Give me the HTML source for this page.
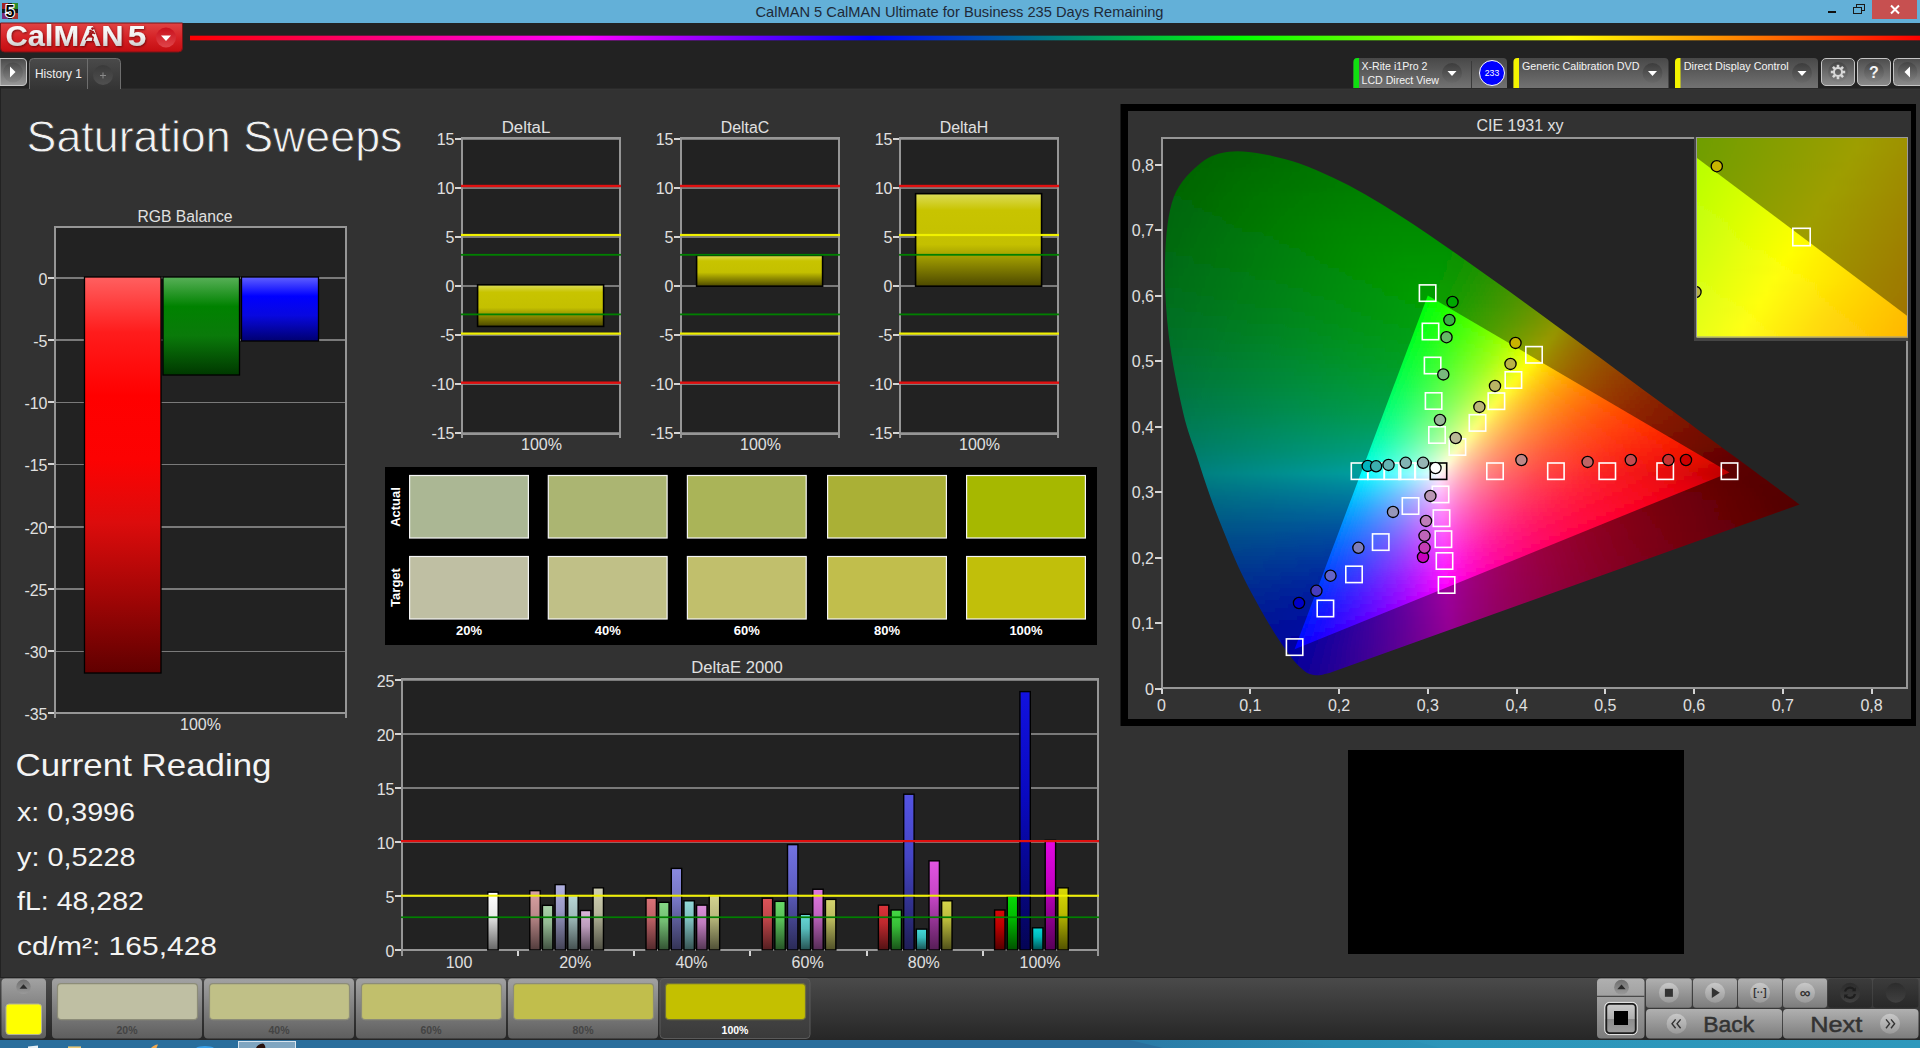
<!DOCTYPE html>
<html lang="en"><head><meta charset="utf-8"><title>CalMAN 5 CalMAN Ultimate for Business 235 Days Remaining</title>
<style>
html,body{margin:0;padding:0;background:#333;overflow:hidden;}
body{width:1920px;height:1048px;font-family:"Liberation Sans", "DejaVu Sans", sans-serif;}
svg{display:block;position:absolute;left:0;top:0;font-family:"Liberation Sans", "DejaVu Sans", sans-serif;}
</style></head><body>
<svg width="1920" height="1048" viewBox="0 0 1920 1048">
<defs>
<linearGradient id="g1" x1="0" y1="0" x2="1" y2="0"><stop offset="0" stop-color="#ff0000"/><stop offset="0.228" stop-color="#ff00ff"/><stop offset="0.393" stop-color="#0000ff"/><stop offset="0.607" stop-color="#00ff00"/><stop offset="0.798" stop-color="#ffff00"/><stop offset="1" stop-color="#ff0000"/></linearGradient>
<linearGradient id="g2" x1="0" y1="0" x2="0" y2="1"><stop offset="0" stop-color="#e04444"/><stop offset="0.5" stop-color="#d62226"/><stop offset="1" stop-color="#c40c10"/></linearGradient>
<linearGradient id="g3" x1="0" y1="0" x2="0" y2="1"><stop offset="0" stop-color="#ffffff"/><stop offset="0.55" stop-color="#f0f0f0"/><stop offset="1" stop-color="#b8b8b8"/></linearGradient>
<filter id="ts" x="-5%" y="-20%" width="110%" height="150%"><feDropShadow dx="0.8" dy="1" stdDeviation="0.8" flood-color="#400" flood-opacity="0.7"/></filter>
<linearGradient id="g4" x1="0" y1="0" x2="0" y2="1"><stop offset="0" stop-color="#c8101c"/><stop offset="1" stop-color="#e0454a"/></linearGradient>
<linearGradient id="g5" x1="0" y1="0" x2="0" y2="1"><stop offset="0" stop-color="#4a4a4a"/><stop offset="1" stop-color="#9a9a9a"/></linearGradient>
<linearGradient id="g6" x1="0" y1="0" x2="0" y2="1"><stop offset="0" stop-color="#4a4a4a"/><stop offset="1" stop-color="#888"/></linearGradient>
<linearGradient id="g7" x1="0" y1="0" x2="0" y2="1"><stop offset="0" stop-color="#4a4a4a"/><stop offset="1" stop-color="#343434"/></linearGradient>
<linearGradient id="g8" x1="0" y1="0" x2="0" y2="1"><stop offset="0" stop-color="#3a3a3a"/><stop offset="1" stop-color="#505050"/></linearGradient>
<linearGradient id="g9" x1="0" y1="0" x2="0" y2="1"><stop offset="0" stop-color="#484848"/><stop offset="1" stop-color="#727272"/></linearGradient>
<linearGradient id="g10" x1="0" y1="0" x2="0" y2="1"><stop offset="0" stop-color="#3c3c3c"/><stop offset="1" stop-color="#686868"/></linearGradient>
<linearGradient id="g11" x1="0" y1="0" x2="0" y2="1"><stop offset="0" stop-color="#484848"/><stop offset="1" stop-color="#727272"/></linearGradient>
<linearGradient id="g12" x1="0" y1="0" x2="0" y2="1"><stop offset="0" stop-color="#3c3c3c"/><stop offset="1" stop-color="#686868"/></linearGradient>
<linearGradient id="g13" x1="0" y1="0" x2="0" y2="1"><stop offset="0" stop-color="#484848"/><stop offset="1" stop-color="#727272"/></linearGradient>
<linearGradient id="g14" x1="0" y1="0" x2="0" y2="1"><stop offset="0" stop-color="#3c3c3c"/><stop offset="1" stop-color="#686868"/></linearGradient>
<linearGradient id="g15" x1="0" y1="0" x2="0" y2="1"><stop offset="0" stop-color="#4c4c4c"/><stop offset="1" stop-color="#8c8c8c"/></linearGradient>
<linearGradient id="g16" x1="0" y1="0" x2="0" y2="1"><stop offset="0" stop-color="#444"/><stop offset="1" stop-color="#808080"/></linearGradient>
<linearGradient id="g17" x1="0" y1="0" x2="0" y2="1"><stop offset="0" stop-color="#4c4c4c"/><stop offset="1" stop-color="#8c8c8c"/></linearGradient>
<linearGradient id="g18" x1="0" y1="0" x2="0" y2="1"><stop offset="0" stop-color="#444"/><stop offset="1" stop-color="#808080"/></linearGradient>
<linearGradient id="g19" x1="0" y1="0" x2="0" y2="1"><stop offset="0" stop-color="#4c4c4c"/><stop offset="1" stop-color="#8c8c8c"/></linearGradient>
<linearGradient id="g20" x1="0" y1="0" x2="0" y2="1"><stop offset="0" stop-color="#444"/><stop offset="1" stop-color="#808080"/></linearGradient>
<linearGradient id="g21" x1="0" y1="0" x2="0" y2="1"><stop offset="0" stop-color="#ff6060"/><stop offset="0.14" stop-color="#ff1c1c"/><stop offset="0.3" stop-color="#ff0000"/><stop offset="0.46" stop-color="#fc0202"/><stop offset="0.62" stop-color="#dc0c0c"/><stop offset="0.8" stop-color="#a40606"/><stop offset="1" stop-color="#600000"/></linearGradient>
<linearGradient id="g22" x1="0" y1="0" x2="0" y2="1"><stop offset="0" stop-color="#58b058"/><stop offset="0.3" stop-color="#008200"/><stop offset="0.6" stop-color="#0a7a0a"/><stop offset="1" stop-color="#003800"/></linearGradient>
<linearGradient id="g23" x1="0" y1="0" x2="0" y2="1"><stop offset="0" stop-color="#6060ff"/><stop offset="0.3" stop-color="#0000ff"/><stop offset="0.6" stop-color="#0808e0"/><stop offset="1" stop-color="#000070"/></linearGradient>
<linearGradient id="g24" x1="0" y1="0" x2="0" y2="1"><stop offset="0" stop-color="#dcdc58"/><stop offset="0.18" stop-color="#c8c400"/><stop offset="0.55" stop-color="#c4c000"/><stop offset="1" stop-color="#4c4800"/></linearGradient>
<linearGradient id="g25" x1="0" y1="0" x2="0" y2="1"><stop offset="0" stop-color="#dcdc58"/><stop offset="0.18" stop-color="#c8c400"/><stop offset="0.55" stop-color="#c4c000"/><stop offset="1" stop-color="#4c4800"/></linearGradient>
<linearGradient id="g26" x1="0" y1="0" x2="0" y2="1"><stop offset="0" stop-color="#dcdc58"/><stop offset="0.18" stop-color="#c8c400"/><stop offset="0.55" stop-color="#c4c000"/><stop offset="1" stop-color="#4c4800"/></linearGradient>
<linearGradient id="g27" x1="0" y1="0" x2="0" y2="1"><stop offset="0" stop-color="#ffffff"/><stop offset="0.4" stop-color="#eaeaea"/><stop offset="1" stop-color="#666666"/></linearGradient>
<linearGradient id="g28" x1="0" y1="0" x2="0" y2="1"><stop offset="0" stop-color="#d9a1a3"/><stop offset="0.4" stop-color="#bc8a8b"/><stop offset="1" stop-color="#523c3c"/></linearGradient>
<linearGradient id="g29" x1="0" y1="0" x2="0" y2="1"><stop offset="0" stop-color="#abd4ab"/><stop offset="0.4" stop-color="#93b893"/><stop offset="1" stop-color="#405040"/></linearGradient>
<linearGradient id="g30" x1="0" y1="0" x2="0" y2="1"><stop offset="0" stop-color="#b0b0e0"/><stop offset="0.4" stop-color="#9797c3"/><stop offset="1" stop-color="#424254"/></linearGradient>
<linearGradient id="g31" x1="0" y1="0" x2="0" y2="1"><stop offset="0" stop-color="#b7d6d6"/><stop offset="0.4" stop-color="#9eb9b9"/><stop offset="1" stop-color="#445050"/></linearGradient>
<linearGradient id="g32" x1="0" y1="0" x2="0" y2="1"><stop offset="0" stop-color="#d9b5d9"/><stop offset="0.4" stop-color="#bc9cbc"/><stop offset="1" stop-color="#524452"/></linearGradient>
<linearGradient id="g33" x1="0" y1="0" x2="0" y2="1"><stop offset="0" stop-color="#d1d1b3"/><stop offset="0.4" stop-color="#b6b69a"/><stop offset="1" stop-color="#4f4f43"/></linearGradient>
<linearGradient id="g34" x1="0" y1="0" x2="0" y2="1"><stop offset="0" stop-color="#d97378"/><stop offset="0.4" stop-color="#bc6065"/><stop offset="1" stop-color="#522a2c"/></linearGradient>
<linearGradient id="g35" x1="0" y1="0" x2="0" y2="1"><stop offset="0" stop-color="#87d987"/><stop offset="0.4" stop-color="#73bc73"/><stop offset="1" stop-color="#325232"/></linearGradient>
<linearGradient id="g36" x1="0" y1="0" x2="0" y2="1"><stop offset="0" stop-color="#8a8ade"/><stop offset="0.4" stop-color="#7575c1"/><stop offset="1" stop-color="#333354"/></linearGradient>
<linearGradient id="g37" x1="0" y1="0" x2="0" y2="1"><stop offset="0" stop-color="#91d9d9"/><stop offset="0.4" stop-color="#7cbcbc"/><stop offset="1" stop-color="#365252"/></linearGradient>
<linearGradient id="g38" x1="0" y1="0" x2="0" y2="1"><stop offset="0" stop-color="#dc91dc"/><stop offset="0.4" stop-color="#bf7cbf"/><stop offset="1" stop-color="#533653"/></linearGradient>
<linearGradient id="g39" x1="0" y1="0" x2="0" y2="1"><stop offset="0" stop-color="#d4d491"/><stop offset="0.4" stop-color="#b8b87c"/><stop offset="1" stop-color="#505036"/></linearGradient>
<linearGradient id="g40" x1="0" y1="0" x2="0" y2="1"><stop offset="0" stop-color="#dc5459"/><stop offset="0.4" stop-color="#bf4549"/><stop offset="1" stop-color="#531e20"/></linearGradient>
<linearGradient id="g41" x1="0" y1="0" x2="0" y2="1"><stop offset="0" stop-color="#68d968"/><stop offset="0.4" stop-color="#57bc57"/><stop offset="1" stop-color="#265226"/></linearGradient>
<linearGradient id="g42" x1="0" y1="0" x2="0" y2="1"><stop offset="0" stop-color="#7373e3"/><stop offset="0.4" stop-color="#6060c5"/><stop offset="1" stop-color="#2a2a56"/></linearGradient>
<linearGradient id="g43" x1="0" y1="0" x2="0" y2="1"><stop offset="0" stop-color="#68d9d9"/><stop offset="0.4" stop-color="#57bcbc"/><stop offset="1" stop-color="#265252"/></linearGradient>
<linearGradient id="g44" x1="0" y1="0" x2="0" y2="1"><stop offset="0" stop-color="#e078e0"/><stop offset="0.4" stop-color="#c365c3"/><stop offset="1" stop-color="#542c54"/></linearGradient>
<linearGradient id="g45" x1="0" y1="0" x2="0" y2="1"><stop offset="0" stop-color="#d4d46e"/><stop offset="0.4" stop-color="#b8b85c"/><stop offset="1" stop-color="#505028"/></linearGradient>
<linearGradient id="g46" x1="0" y1="0" x2="0" y2="1"><stop offset="0" stop-color="#dc353b"/><stop offset="0.4" stop-color="#bf292e"/><stop offset="1" stop-color="#531214"/></linearGradient>
<linearGradient id="g47" x1="0" y1="0" x2="0" y2="1"><stop offset="0" stop-color="#45d945"/><stop offset="0.4" stop-color="#37bc37"/><stop offset="1" stop-color="#185218"/></linearGradient>
<linearGradient id="g48" x1="0" y1="0" x2="0" y2="1"><stop offset="0" stop-color="#5454e3"/><stop offset="0.4" stop-color="#4545c5"/><stop offset="1" stop-color="#1e1e56"/></linearGradient>
<linearGradient id="g49" x1="0" y1="0" x2="0" y2="1"><stop offset="0" stop-color="#45d9d9"/><stop offset="0.4" stop-color="#37bcbc"/><stop offset="1" stop-color="#185252"/></linearGradient>
<linearGradient id="g50" x1="0" y1="0" x2="0" y2="1"><stop offset="0" stop-color="#e354e3"/><stop offset="0.4" stop-color="#c545c5"/><stop offset="1" stop-color="#561e56"/></linearGradient>
<linearGradient id="g51" x1="0" y1="0" x2="0" y2="1"><stop offset="0" stop-color="#d4d44a"/><stop offset="0.4" stop-color="#b8b83b"/><stop offset="1" stop-color="#50501a"/></linearGradient>
<linearGradient id="g52" x1="0" y1="0" x2="0" y2="1"><stop offset="0" stop-color="#d90808"/><stop offset="0.4" stop-color="#bc0000"/><stop offset="1" stop-color="#520000"/></linearGradient>
<linearGradient id="g53" x1="0" y1="0" x2="0" y2="1"><stop offset="0" stop-color="#08d908"/><stop offset="0.4" stop-color="#00bc00"/><stop offset="1" stop-color="#005200"/></linearGradient>
<linearGradient id="g54" x1="0" y1="0" x2="0" y2="1"><stop offset="0" stop-color="#1212de"/><stop offset="0.4" stop-color="#0909c1"/><stop offset="1" stop-color="#040454"/></linearGradient>
<linearGradient id="g55" x1="0" y1="0" x2="0" y2="1"><stop offset="0" stop-color="#08d9d9"/><stop offset="0.4" stop-color="#00bcbc"/><stop offset="1" stop-color="#005252"/></linearGradient>
<linearGradient id="g56" x1="0" y1="0" x2="0" y2="1"><stop offset="0" stop-color="#e308e3"/><stop offset="0.4" stop-color="#c500c5"/><stop offset="1" stop-color="#560056"/></linearGradient>
<linearGradient id="g57" x1="0" y1="0" x2="0" y2="1"><stop offset="0" stop-color="#d9d908"/><stop offset="0.4" stop-color="#bcbc00"/><stop offset="1" stop-color="#525200"/></linearGradient>
<linearGradient id="o0"><stop offset="0" stop-color="#006400"/><stop offset="1" stop-color="#006c00"/></linearGradient>
<linearGradient id="o1"><stop offset="0" stop-color="#006400"/><stop offset="1" stop-color="#006f00"/></linearGradient>
<linearGradient id="o2"><stop offset="0" stop-color="#006300"/><stop offset="1" stop-color="#007200"/></linearGradient>
<linearGradient id="o3"><stop offset="0" stop-color="#006300"/><stop offset="1" stop-color="#007400"/></linearGradient>
<linearGradient id="o4"><stop offset="0" stop-color="#006301"/><stop offset="1" stop-color="#007500"/></linearGradient>
<linearGradient id="o5"><stop offset="0" stop-color="#006302"/><stop offset="1" stop-color="#007700"/></linearGradient>
<linearGradient id="o6"><stop offset="0" stop-color="#006303"/><stop offset=".2182" stop-color="#006900"/><stop offset="1" stop-color="#007900"/></linearGradient>
<linearGradient id="o7"><stop offset="0" stop-color="#006303"/><stop offset=".2712" stop-color="#006b00"/><stop offset="1" stop-color="#007b00"/></linearGradient>
<linearGradient id="o8"><stop offset="0" stop-color="#006304"/><stop offset=".2995" stop-color="#006c00"/><stop offset="1" stop-color="#007c00"/></linearGradient>
<linearGradient id="o9"><stop offset="0" stop-color="#006305"/><stop offset=".3232" stop-color="#006e00"/><stop offset="1" stop-color="#007e00"/></linearGradient>
<linearGradient id="o10"><stop offset="0" stop-color="#006306"/><stop offset=".3636" stop-color="#007000"/><stop offset="1" stop-color="#007f00"/></linearGradient>
<linearGradient id="o11"><stop offset="0" stop-color="#006307"/><stop offset=".3836" stop-color="#007100"/><stop offset="1" stop-color="#008100"/></linearGradient>
<linearGradient id="o12"><stop offset="0" stop-color="#006407"/><stop offset=".4089" stop-color="#007300"/><stop offset=".7289" stop-color="#007d00"/><stop offset="1" stop-color="#008200"/></linearGradient>
<linearGradient id="o13"><stop offset="0" stop-color="#006408"/><stop offset=".4292" stop-color="#007500"/><stop offset=".7554" stop-color="#007f00"/><stop offset="1" stop-color="#008400"/></linearGradient>
<linearGradient id="o14"><stop offset="0" stop-color="#006509"/><stop offset=".4519" stop-color="#007700"/><stop offset=".7531" stop-color="#008000"/><stop offset="1" stop-color="#008500"/></linearGradient>
<linearGradient id="o15"><stop offset="0" stop-color="#006509"/><stop offset=".4696" stop-color="#007800"/><stop offset=".7611" stop-color="#008200"/><stop offset="1" stop-color="#008600"/></linearGradient>
<linearGradient id="o16"><stop offset="0" stop-color="#00650a"/><stop offset=".4882" stop-color="#007a00"/><stop offset=".7717" stop-color="#008300"/><stop offset="1" stop-color="#008700"/></linearGradient>
<linearGradient id="o17"><stop offset="0" stop-color="#00660b"/><stop offset=".4923" stop-color="#007b00"/><stop offset=".7846" stop-color="#008500"/><stop offset="1" stop-color="#008800"/></linearGradient>
<linearGradient id="o18"><stop offset="0" stop-color="#00660c"/><stop offset=".5094" stop-color="#007d00"/><stop offset=".7790" stop-color="#008600"/><stop offset="1" stop-color="#008a00"/></linearGradient>
<linearGradient id="o19"><stop offset="0" stop-color="#00660c"/><stop offset=".5275" stop-color="#007f00"/><stop offset=".6447" stop-color="#008400"/><stop offset=".8352" stop-color="#008900"/><stop offset="1" stop-color="#008b00"/></linearGradient>
<linearGradient id="o20"><stop offset="0" stop-color="#00660d"/><stop offset=".5429" stop-color="#008100"/><stop offset=".6429" stop-color="#008500"/><stop offset=".8429" stop-color="#008b00"/><stop offset="1" stop-color="#008c00"/></linearGradient>
<linearGradient id="o21"><stop offset="0" stop-color="#00670e"/><stop offset=".5455" stop-color="#008200"/><stop offset=".6573" stop-color="#008700"/><stop offset=".8392" stop-color="#008c00"/><stop offset="1" stop-color="#008c00"/></linearGradient>
<linearGradient id="o22"><stop offset="0" stop-color="#00670f"/><stop offset=".2867" stop-color="#007609"/><stop offset=".5597" stop-color="#008400"/><stop offset=".6689" stop-color="#008800"/><stop offset=".8464" stop-color="#008d00"/><stop offset="1" stop-color="#008d00"/></linearGradient>
<linearGradient id="o23"><stop offset="0" stop-color="#00670f"/><stop offset=".2933" stop-color="#00770a"/><stop offset=".5733" stop-color="#008500"/><stop offset=".6800" stop-color="#008a00"/><stop offset=".8400" stop-color="#008e00"/><stop offset=".9733" stop-color="#008e00"/><stop offset="1" stop-color="#048e00"/></linearGradient>
<linearGradient id="o24"><stop offset="0" stop-color="#006710"/><stop offset=".3016" stop-color="#00780a"/><stop offset=".5902" stop-color="#008700"/><stop offset=".6820" stop-color="#008b00"/><stop offset=".8262" stop-color="#008f00"/><stop offset=".9574" stop-color="#008f00"/><stop offset="1" stop-color="#088f00"/></linearGradient>
<linearGradient id="o25"><stop offset="0" stop-color="#006711"/><stop offset=".2821" stop-color="#00780b"/><stop offset=".6410" stop-color="#008b00"/><stop offset=".7949" stop-color="#009000"/><stop offset=".9231" stop-color="#009100"/><stop offset=".9359" stop-color="#009000"/><stop offset="1" stop-color="#0d8f00"/></linearGradient>
<linearGradient id="o26"><stop offset="0" stop-color="#006812"/><stop offset=".3019" stop-color="#007a0c"/><stop offset=".6415" stop-color="#008c00"/><stop offset=".7925" stop-color="#009100"/><stop offset=".9057" stop-color="#009200"/><stop offset="1" stop-color="#138f00"/></linearGradient>
<linearGradient id="o27"><stop offset="0" stop-color="#006813"/><stop offset=".3200" stop-color="#007b0c"/><stop offset=".6400" stop-color="#008d00"/><stop offset=".7754" stop-color="#009200"/><stop offset=".8862" stop-color="#009300"/><stop offset="1" stop-color="#188f00"/></linearGradient>
<linearGradient id="o28"><stop offset="0" stop-color="#006814"/><stop offset=".3273" stop-color="#007c0d"/><stop offset=".6424" stop-color="#008e00"/><stop offset=".7758" stop-color="#009400"/><stop offset=".8727" stop-color="#009400"/><stop offset="1" stop-color="#1d8f00"/></linearGradient>
<linearGradient id="o29"><stop offset="0" stop-color="#006814"/><stop offset=".3333" stop-color="#007d0d"/><stop offset=".6310" stop-color="#008f01"/><stop offset=".7500" stop-color="#009400"/><stop offset=".8452" stop-color="#009500"/><stop offset="1" stop-color="#239000"/></linearGradient>
<linearGradient id="o30"><stop offset="0" stop-color="#006815"/><stop offset=".3402" stop-color="#007e0e"/><stop offset=".6334" stop-color="#009001"/><stop offset=".7507" stop-color="#009600"/><stop offset=".8328" stop-color="#009600"/><stop offset="1" stop-color="#289000"/></linearGradient>
<linearGradient id="o31"><stop offset="0" stop-color="#006916"/><stop offset=".3353" stop-color="#007f0f"/><stop offset=".6358" stop-color="#009202"/><stop offset=".8092" stop-color="#009700"/><stop offset=".8208" stop-color="#019700"/><stop offset="1" stop-color="#2f9000"/></linearGradient>
<linearGradient id="o32"><stop offset="0" stop-color="#006917"/><stop offset=".3409" stop-color="#008010"/><stop offset=".6364" stop-color="#009302"/><stop offset=".6705" stop-color="#009500"/><stop offset=".7955" stop-color="#009800"/><stop offset="1" stop-color="#359000"/></linearGradient>
<linearGradient id="o33"><stop offset="0" stop-color="#006a18"/><stop offset=".3473" stop-color="#008110"/><stop offset=".6499" stop-color="#009502"/><stop offset=".7843" stop-color="#009900"/><stop offset="1" stop-color="#3c9000"/></linearGradient>
<linearGradient id="o34"><stop offset="0" stop-color="#006a19"/><stop offset=".3196" stop-color="#008012"/><stop offset=".5069" stop-color="#008c0b"/><stop offset=".6832" stop-color="#009800"/><stop offset=".7603" stop-color="#009a00"/><stop offset=".8375" stop-color="#149800"/><stop offset="1" stop-color="#439000"/></linearGradient>
<linearGradient id="o35"><stop offset="0" stop-color="#006a1a"/><stop offset=".3478" stop-color="#008212"/><stop offset=".5326" stop-color="#008f0a"/><stop offset=".6957" stop-color="#009a00"/><stop offset=".7500" stop-color="#009c00"/><stop offset="1" stop-color="#4a9100"/></linearGradient>
<linearGradient id="o36"><stop offset="0" stop-color="#006b1b"/><stop offset=".3646" stop-color="#008413"/><stop offset=".7292" stop-color="#009d00"/><stop offset=".8365" stop-color="#1e9800"/><stop offset="1" stop-color="#529100"/></linearGradient>
<linearGradient id="o37"><stop offset="0" stop-color="#006b1c"/><stop offset=".3810" stop-color="#008613"/><stop offset=".7196" stop-color="#009e00"/><stop offset=".8571" stop-color="#2a9700"/><stop offset="1" stop-color="#599100"/></linearGradient>
<linearGradient id="o38"><stop offset="0" stop-color="#006b1d"/><stop offset=".3854" stop-color="#008714"/><stop offset=".5521" stop-color="#00930c"/><stop offset=".7083" stop-color="#019e01"/><stop offset=".8646" stop-color="#339700"/><stop offset="1" stop-color="#629100"/></linearGradient>
<linearGradient id="o39"><stop offset="0" stop-color="#006b1e"/><stop offset=".3702" stop-color="#008716"/><stop offset=".5347" stop-color="#00930e"/><stop offset=".6889" stop-color="#009e03"/><stop offset=".7301" stop-color="#0c9e00"/><stop offset=".8329" stop-color="#2e9900"/><stop offset="1" stop-color="#6b9100"/></linearGradient>
<linearGradient id="o40"><stop offset="0" stop-color="#006c1f"/><stop offset=".3646" stop-color="#008717"/><stop offset=".5266" stop-color="#00930f"/><stop offset=".6785" stop-color="#009e05"/><stop offset=".7392" stop-color="#149e00"/><stop offset=".8709" stop-color="#439700"/><stop offset="1" stop-color="#749100"/></linearGradient>
<linearGradient id="o41"><stop offset="0" stop-color="#006c21"/><stop offset=".3609" stop-color="#008719"/><stop offset=".6617" stop-color="#009e07"/><stop offset=".7419" stop-color="#1b9e00"/><stop offset=".8722" stop-color="#4a9800"/><stop offset="1" stop-color="#7e9200"/></linearGradient>
<linearGradient id="o42"><stop offset="0" stop-color="#006c22"/><stop offset=".3556" stop-color="#00881a"/><stop offset=".6519" stop-color="#009e09"/><stop offset=".7506" stop-color="#249e00"/><stop offset=".8790" stop-color="#559800"/><stop offset="1" stop-color="#899200"/></linearGradient>
<linearGradient id="o43"><stop offset="0" stop-color="#006d23"/><stop offset=".3415" stop-color="#00871c"/><stop offset=".6341" stop-color="#009e0b"/><stop offset=".6537" stop-color="#059e09"/><stop offset=".7512" stop-color="#2a9e00"/><stop offset=".8683" stop-color="#599800"/><stop offset="1" stop-color="#929100"/></linearGradient>
<linearGradient id="o44"><stop offset="0" stop-color="#006d24"/><stop offset=".3365" stop-color="#00871d"/><stop offset=".6250" stop-color="#009e0d"/><stop offset=".7596" stop-color="#349e00"/><stop offset=".8654" stop-color="#609900"/><stop offset=".9712" stop-color="#919300"/><stop offset="1" stop-color="#928600"/></linearGradient>
<linearGradient id="o45"><stop offset="0" stop-color="#006d25"/><stop offset=".3325" stop-color="#00881f"/><stop offset=".6176" stop-color="#019e0f"/><stop offset=".7696" stop-color="#3e9e00"/><stop offset=".8646" stop-color="#689900"/><stop offset=".9501" stop-color="#919500"/><stop offset=".9596" stop-color="#949200"/><stop offset="1" stop-color="#927d00"/></linearGradient>
<linearGradient id="o46"><stop offset="0" stop-color="#006e27"/><stop offset=".3286" stop-color="#008821"/><stop offset=".6009" stop-color="#009e11"/><stop offset=".6854" stop-color="#219e09"/><stop offset=".7700" stop-color="#469e00"/><stop offset=".9296" stop-color="#939600"/><stop offset=".9390" stop-color="#959300"/><stop offset="1" stop-color="#927400"/></linearGradient>
<linearGradient id="o47"><stop offset="0" stop-color="#006e28"/><stop offset=".3248" stop-color="#008822"/><stop offset=".5940" stop-color="#019e13"/><stop offset=".6868" stop-color="#279e0a"/><stop offset=".7796" stop-color="#529e00"/><stop offset=".9188" stop-color="#979500"/><stop offset=".9559" stop-color="#958000"/><stop offset="1" stop-color="#926c00"/></linearGradient>
<linearGradient id="o48"><stop offset="0" stop-color="#006e29"/><stop offset=".3112" stop-color="#008824"/><stop offset=".5767" stop-color="#009e16"/><stop offset=".6041" stop-color="#099e13"/><stop offset=".6773" stop-color="#299e0c"/><stop offset=".7872" stop-color="#5e9e00"/><stop offset=".8970" stop-color="#989800"/><stop offset=".9428" stop-color="#967d00"/><stop offset="1" stop-color="#926400"/></linearGradient>
<linearGradient id="o49"><stop offset="0" stop-color="#006f2b"/><stop offset=".3077" stop-color="#008826"/><stop offset=".5701" stop-color="#009e18"/><stop offset=".6425" stop-color="#1f9e11"/><stop offset=".7149" stop-color="#419e09"/><stop offset=".7873" stop-color="#679e00"/><stop offset=".8778" stop-color="#999900"/><stop offset=".9321" stop-color="#967a00"/><stop offset="1" stop-color="#925e00"/></linearGradient>
<linearGradient id="o50"><stop offset="0" stop-color="#006f2c"/><stop offset=".3049" stop-color="#008928"/><stop offset=".5561" stop-color="#009e1a"/><stop offset=".6099" stop-color="#159e15"/><stop offset=".6996" stop-color="#409e0c"/><stop offset=".7982" stop-color="#769e00"/><stop offset=".8610" stop-color="#9a9b00"/><stop offset=".8879" stop-color="#998900"/><stop offset=".9238" stop-color="#977600"/><stop offset="1" stop-color="#925800"/></linearGradient>
<linearGradient id="o51"><stop offset="0" stop-color="#006f2e"/><stop offset=".3009" stop-color="#00892a"/><stop offset=".5487" stop-color="#009e1d"/><stop offset=".6195" stop-color="#1f9e16"/><stop offset=".6903" stop-color="#439e0e"/><stop offset=".7965" stop-color="#809e01"/><stop offset=".8407" stop-color="#9b9c00"/><stop offset=".8761" stop-color="#9a8600"/><stop offset=".9115" stop-color="#987300"/><stop offset=".9558" stop-color="#956000"/><stop offset="1" stop-color="#925100"/></linearGradient>
<linearGradient id="o52"><stop offset="0" stop-color="#00702f"/><stop offset=".2895" stop-color="#00892c"/><stop offset=".5351" stop-color="#009e1f"/><stop offset=".5877" stop-color="#169e1a"/><stop offset=".6754" stop-color="#429e11"/><stop offset=".7456" stop-color="#6a9e08"/><stop offset=".8070" stop-color="#919e00"/><stop offset=".8246" stop-color="#9c9d00"/><stop offset=".8684" stop-color="#9b8100"/><stop offset=".9035" stop-color="#996f00"/><stop offset=".9474" stop-color="#965d00"/><stop offset="1" stop-color="#924c00"/></linearGradient>
<linearGradient id="o53"><stop offset="0" stop-color="#007031"/><stop offset=".2863" stop-color="#00892e"/><stop offset=".5293" stop-color="#019e21"/><stop offset=".6074" stop-color="#269e1a"/><stop offset=".6768" stop-color="#4b9e12"/><stop offset=".7462" stop-color="#759e09"/><stop offset=".8069" stop-color="#9e9e00"/><stop offset=".8503" stop-color="#9c8200"/><stop offset=".8937" stop-color="#996b00"/><stop offset=".9458" stop-color="#965700"/><stop offset="1" stop-color="#914600"/></linearGradient>
<linearGradient id="o54"><stop offset="0" stop-color="#007133"/><stop offset=".2839" stop-color="#008a30"/><stop offset=".5161" stop-color="#009e24"/><stop offset=".5849" stop-color="#209e1e"/><stop offset=".6624" stop-color="#4a9e15"/><stop offset=".7312" stop-color="#749e0c"/><stop offset=".7914" stop-color="#9e9e04"/><stop offset=".8172" stop-color="#9e8d00"/><stop offset=".8430" stop-color="#9d7d00"/><stop offset=".8860" stop-color="#9a6800"/><stop offset=".9376" stop-color="#965400"/><stop offset="1" stop-color="#914100"/></linearGradient>
<linearGradient id="o55"><stop offset="0" stop-color="#007134"/><stop offset=".2803" stop-color="#008a32"/><stop offset=".5096" stop-color="#019e27"/><stop offset=".5775" stop-color="#229e20"/><stop offset=".6454" stop-color="#489e18"/><stop offset=".7134" stop-color="#739e10"/><stop offset=".7728" stop-color="#9d9e07"/><stop offset=".8153" stop-color="#9e8301"/><stop offset=".8747" stop-color="#9b6500"/><stop offset=".9342" stop-color="#964f00"/><stop offset="1" stop-color="#903c00"/></linearGradient>
<linearGradient id="o56"><stop offset="0" stop-color="#007236"/><stop offset=".2695" stop-color="#008a34"/><stop offset=".4968" stop-color="#009e2a"/><stop offset=".5642" stop-color="#219e23"/><stop offset=".6316" stop-color="#479e1c"/><stop offset=".6989" stop-color="#739e13"/><stop offset=".7579" stop-color="#9d9e0b"/><stop offset=".7916" stop-color="#9e8805"/><stop offset=".8253" stop-color="#9e7500"/><stop offset=".8674" stop-color="#9b6100"/><stop offset=".9263" stop-color="#964c00"/><stop offset="1" stop-color="#8f3800"/></linearGradient>
<linearGradient id="o57"><stop offset="0" stop-color="#007238"/><stop offset=".2589" stop-color="#008937"/><stop offset=".4843" stop-color="#009e2d"/><stop offset=".4927" stop-color="#029e2c"/><stop offset=".5344" stop-color="#179e28"/><stop offset=".6180" stop-color="#479e1f"/><stop offset=".6848" stop-color="#729e17"/><stop offset=".7432" stop-color="#9e9e0e"/><stop offset=".7933" stop-color="#9e7d05"/><stop offset=".8267" stop-color="#9e6d00"/><stop offset=".8601" stop-color="#9c5e00"/><stop offset=".9269" stop-color="#964600"/><stop offset="1" stop-color="#8e3300"/></linearGradient>
<linearGradient id="o58"><stop offset="0" stop-color="#007239"/><stop offset=".2645" stop-color="#008b39"/><stop offset=".4793" stop-color="#009e30"/><stop offset=".5455" stop-color="#239e29"/><stop offset=".6116" stop-color="#4b9e22"/><stop offset=".6694" stop-color="#729e1a"/><stop offset=".7273" stop-color="#9e9e12"/><stop offset=".7521" stop-color="#9e8c0d"/><stop offset=".7851" stop-color="#9e7807"/><stop offset=".8347" stop-color="#9d6100"/><stop offset=".8512" stop-color="#9c5a00"/><stop offset=".9174" stop-color="#964300"/><stop offset="1" stop-color="#8c2f00"/></linearGradient>
<linearGradient id="o59"><stop offset="0" stop-color="#00733b"/><stop offset=".2536" stop-color="#008a3b"/><stop offset=".4663" stop-color="#009e33"/><stop offset=".4744" stop-color="#029e32"/><stop offset=".5072" stop-color="#139e2f"/><stop offset=".5890" stop-color="#449e26"/><stop offset=".6544" stop-color="#719e1e"/><stop offset=".7117" stop-color="#9d9e16"/><stop offset=".7689" stop-color="#9e780a"/><stop offset=".8262" stop-color="#9d5e02"/><stop offset=".9080" stop-color="#964100"/><stop offset="1" stop-color="#8b2b00"/></linearGradient>
<linearGradient id="o60"><stop offset="0" stop-color="#00733d"/><stop offset=".2510" stop-color="#008b3e"/><stop offset=".4615" stop-color="#009e36"/><stop offset=".5263" stop-color="#259e2f"/><stop offset=".5830" stop-color="#489e29"/><stop offset=".6397" stop-color="#709e22"/><stop offset=".6964" stop-color="#9e9e1a"/><stop offset=".7287" stop-color="#9e8612"/><stop offset=".7530" stop-color="#9e780d"/><stop offset=".8178" stop-color="#9d5a03"/><stop offset=".8421" stop-color="#9c5100"/><stop offset=".9069" stop-color="#953c00"/><stop offset="1" stop-color="#892700"/></linearGradient>
<linearGradient id="o61"><stop offset="0" stop-color="#00743f"/><stop offset=".2410" stop-color="#008a40"/><stop offset=".4498" stop-color="#009e39"/><stop offset=".5060" stop-color="#1f9e34"/><stop offset=".5703" stop-color="#489e2d"/><stop offset=".6265" stop-color="#709e26"/><stop offset=".6827" stop-color="#9e9e1e"/><stop offset=".7068" stop-color="#9e8b17"/><stop offset=".7390" stop-color="#9e7710"/><stop offset=".8032" stop-color="#9d5905"/><stop offset=".8434" stop-color="#9c4a00"/><stop offset=".8996" stop-color="#953900"/><stop offset="1" stop-color="#872400"/></linearGradient>
<linearGradient id="o62"><stop offset="0" stop-color="#007441"/><stop offset=".2465" stop-color="#008c43"/><stop offset=".4453" stop-color="#019e3c"/><stop offset=".5089" stop-color="#279e36"/><stop offset=".5646" stop-color="#4c9e30"/><stop offset=".6123" stop-color="#709e2a"/><stop offset=".6680" stop-color="#9e9e22"/><stop offset=".6918" stop-color="#9e8b1b"/><stop offset=".7237" stop-color="#9e7613"/><stop offset=".7555" stop-color="#9e650d"/><stop offset=".7952" stop-color="#9d5507"/><stop offset=".8509" stop-color="#9a4200"/><stop offset=".8986" stop-color="#943500"/><stop offset="1" stop-color="#852000"/></linearGradient>
<linearGradient id="o63"><stop offset="0" stop-color="#007443"/><stop offset=".2362" stop-color="#008b45"/><stop offset=".4331" stop-color="#009e40"/><stop offset=".4803" stop-color="#1b9e3c"/><stop offset=".5433" stop-color="#449e35"/><stop offset=".5984" stop-color="#6e9e2e"/><stop offset=".6535" stop-color="#9d9e27"/><stop offset=".6850" stop-color="#9e861d"/><stop offset=".7165" stop-color="#9e7215"/><stop offset=".7480" stop-color="#9e620f"/><stop offset=".7874" stop-color="#9c5108"/><stop offset=".8504" stop-color="#993d01"/><stop offset=".8898" stop-color="#943300"/><stop offset="1" stop-color="#831d00"/></linearGradient>
<linearGradient id="o64"><stop offset="0" stop-color="#007546"/><stop offset=".2339" stop-color="#008c48"/><stop offset=".4288" stop-color="#029e43"/><stop offset=".4834" stop-color="#239e3e"/><stop offset=".5380" stop-color="#499e38"/><stop offset=".5926" stop-color="#749e32"/><stop offset=".6394" stop-color="#9e9e2b"/><stop offset=".6706" stop-color="#9e8521"/><stop offset=".7018" stop-color="#9e7118"/><stop offset=".7407" stop-color="#9d5d10"/><stop offset=".7797" stop-color="#9c4e09"/><stop offset=".8577" stop-color="#973600"/><stop offset=".9279" stop-color="#8c2600"/><stop offset="1" stop-color="#811a00"/></linearGradient>
<linearGradient id="o65"><stop offset="0" stop-color="#007548"/><stop offset=".2244" stop-color="#008b4b"/><stop offset=".4178" stop-color="#009e47"/><stop offset=".4720" stop-color="#229e42"/><stop offset=".5261" stop-color="#489e3d"/><stop offset=".5803" stop-color="#749e36"/><stop offset=".6267" stop-color="#9e9e30"/><stop offset=".6576" stop-color="#9e8424"/><stop offset=".6886" stop-color="#9e701b"/><stop offset=".7273" stop-color="#9d5c13"/><stop offset=".7660" stop-color="#9c4d0c"/><stop offset=".8124" stop-color="#993d05"/><stop offset=".8665" stop-color="#943000"/><stop offset=".9284" stop-color="#8b2200"/><stop offset="1" stop-color="#7f1700"/></linearGradient>
<linearGradient id="o66"><stop offset="0" stop-color="#00764a"/><stop offset=".2226" stop-color="#008c4e"/><stop offset=".4069" stop-color="#009e4b"/><stop offset=".4146" stop-color="#039e4b"/><stop offset=".4453" stop-color="#169e48"/><stop offset=".5067" stop-color="#429e42"/><stop offset=".5605" stop-color="#6d9e3c"/><stop offset=".6142" stop-color="#9e9d35"/><stop offset=".6449" stop-color="#9e8328"/><stop offset=".6756" stop-color="#9e6f1f"/><stop offset=".7140" stop-color="#9d5b15"/><stop offset=".7601" stop-color="#9b490d"/><stop offset=".8138" stop-color="#983805"/><stop offset=".8676" stop-color="#932b00"/><stop offset=".9290" stop-color="#881f00"/><stop offset="1" stop-color="#7d1500"/></linearGradient>
<linearGradient id="o67"><stop offset="0" stop-color="#00764d"/><stop offset=".2201" stop-color="#008c51"/><stop offset=".4023" stop-color="#009e4f"/><stop offset=".4554" stop-color="#239e4a"/><stop offset=".5085" stop-color="#4b9e45"/><stop offset=".5541" stop-color="#729e40"/><stop offset=".5996" stop-color="#9d9e3a"/><stop offset=".6300" stop-color="#9e842d"/><stop offset=".6679" stop-color="#9e6b20"/><stop offset=".7059" stop-color="#9d5817"/><stop offset=".7514" stop-color="#9b460e"/><stop offset=".8121" stop-color="#963306"/><stop offset=".8729" stop-color="#902600"/><stop offset="1" stop-color="#7a1200"/></linearGradient>
<linearGradient id="o68"><stop offset="0" stop-color="#00774f"/><stop offset=".2109" stop-color="#008c54"/><stop offset=".3917" stop-color="#009e53"/><stop offset=".3992" stop-color="#039e53"/><stop offset=".4294" stop-color="#179e50"/><stop offset=".4896" stop-color="#449e4a"/><stop offset=".5424" stop-color="#729e45"/><stop offset=".5876" stop-color="#9e9e3f"/><stop offset=".6177" stop-color="#9e8331"/><stop offset=".6554" stop-color="#9e6a24"/><stop offset=".6930" stop-color="#9d571a"/><stop offset=".7382" stop-color="#9b4511"/><stop offset=".7985" stop-color="#963208"/><stop offset=".8738" stop-color="#8d2200"/><stop offset="1" stop-color="#781000"/></linearGradient>
<linearGradient id="o69"><stop offset="0" stop-color="#007752"/><stop offset=".2164" stop-color="#008d58"/><stop offset=".3881" stop-color="#019e57"/><stop offset=".4403" stop-color="#269e53"/><stop offset=".4851" stop-color="#4a9e4e"/><stop offset=".5299" stop-color="#719e4a"/><stop offset=".5746" stop-color="#9e9e44"/><stop offset=".6045" stop-color="#9e8235"/><stop offset=".6418" stop-color="#9e6927"/><stop offset=".6866" stop-color="#9c521b"/><stop offset=".7313" stop-color="#9a4112"/><stop offset=".7985" stop-color="#942e08"/><stop offset=".8731" stop-color="#8b1f00"/><stop offset="1" stop-color="#750e00"/></linearGradient>
<linearGradient id="o70"><stop offset="0" stop-color="#007854"/><stop offset=".2074" stop-color="#008d5b"/><stop offset=".3778" stop-color="#009e5c"/><stop offset=".4222" stop-color="#1f9e58"/><stop offset=".4667" stop-color="#429e54"/><stop offset=".5111" stop-color="#6a9e50"/><stop offset=".5556" stop-color="#979e4b"/><stop offset=".5630" stop-color="#9e9d49"/><stop offset=".6000" stop-color="#9e7c36"/><stop offset=".6370" stop-color="#9e6428"/><stop offset=".6815" stop-color="#9c4e1c"/><stop offset=".7259" stop-color="#993d12"/><stop offset=".8000" stop-color="#912908"/><stop offset=".8815" stop-color="#871a00"/><stop offset="1" stop-color="#720c00"/></linearGradient>
<linearGradient id="o71"><stop offset="0" stop-color="#007857"/><stop offset=".1985" stop-color="#008d5f"/><stop offset=".3676" stop-color="#009e60"/><stop offset=".4044" stop-color="#199e5d"/><stop offset=".4559" stop-color="#439e59"/><stop offset=".5000" stop-color="#6b9e55"/><stop offset=".5441" stop-color="#999e50"/><stop offset=".5515" stop-color="#9e9b4e"/><stop offset=".5809" stop-color="#9e7f3d"/><stop offset=".6176" stop-color="#9e662d"/><stop offset=".6618" stop-color="#9c4f20"/><stop offset=".7132" stop-color="#983b14"/><stop offset=".7721" stop-color="#922b0b"/><stop offset=".8382" stop-color="#8a1e04"/><stop offset=".8824" stop-color="#841700"/><stop offset="1" stop-color="#6f0a00"/></linearGradient>
<linearGradient id="o72"><stop offset="0" stop-color="#00795a"/><stop offset=".2044" stop-color="#008e63"/><stop offset=".3577" stop-color="#009e65"/><stop offset=".3650" stop-color="#029e65"/><stop offset=".4088" stop-color="#239e61"/><stop offset=".4453" stop-color="#429e5f"/><stop offset=".4891" stop-color="#6b9e5b"/><stop offset=".5328" stop-color="#9a9e56"/><stop offset=".5401" stop-color="#9e9a53"/><stop offset=".5766" stop-color="#9e783e"/><stop offset=".6131" stop-color="#9e602e"/><stop offset=".6569" stop-color="#9c4b21"/><stop offset=".7080" stop-color="#973815"/><stop offset=".7664" stop-color="#91280c"/><stop offset=".8321" stop-color="#881b04"/><stop offset=".8905" stop-color="#801300"/><stop offset="1" stop-color="#6c0800"/></linearGradient>
<linearGradient id="o73"><stop offset="0" stop-color="#00795d"/><stop offset=".1957" stop-color="#008e66"/><stop offset=".3551" stop-color="#009e6a"/><stop offset=".3986" stop-color="#229e67"/><stop offset=".4348" stop-color="#419e64"/><stop offset=".4783" stop-color="#6b9e60"/><stop offset=".5217" stop-color="#9a9e5c"/><stop offset=".5290" stop-color="#9e9959"/><stop offset=".5652" stop-color="#9e7742"/><stop offset=".6014" stop-color="#9d5f32"/><stop offset=".6449" stop-color="#9b4a24"/><stop offset=".7029" stop-color="#963516"/><stop offset=".7609" stop-color="#8f250d"/><stop offset=".8333" stop-color="#861804"/><stop offset=".8913" stop-color="#7d1000"/><stop offset="1" stop-color="#690700"/></linearGradient>
<linearGradient id="o74"><stop offset="0" stop-color="#007a60"/><stop offset=".1867" stop-color="#008d6a"/><stop offset=".3447" stop-color="#009e6f"/><stop offset=".3662" stop-color="#0e9e6e"/><stop offset=".4165" stop-color="#399e6a"/><stop offset=".4668" stop-color="#6a9e66"/><stop offset=".5099" stop-color="#9b9e63"/><stop offset=".5171" stop-color="#9e995f"/><stop offset=".5530" stop-color="#9e7647"/><stop offset=".5889" stop-color="#9d5e36"/><stop offset=".6320" stop-color="#9b4827"/><stop offset=".6894" stop-color="#963318"/><stop offset=".7469" stop-color="#8f240e"/><stop offset=".8187" stop-color="#851706"/><stop offset=".8977" stop-color="#790d00"/><stop offset="1" stop-color="#660500"/></linearGradient>
<linearGradient id="o75"><stop offset="0" stop-color="#007a63"/><stop offset=".1857" stop-color="#008e6e"/><stop offset=".3357" stop-color="#009e74"/><stop offset=".3429" stop-color="#039e74"/><stop offset=".3571" stop-color="#0e9e73"/><stop offset=".4143" stop-color="#409e70"/><stop offset=".4571" stop-color="#6c9e6d"/><stop offset=".5000" stop-color="#9e9e69"/><stop offset=".5357" stop-color="#9e7a4e"/><stop offset=".5714" stop-color="#9e603c"/><stop offset=".6214" stop-color="#9b4629"/><stop offset=".6786" stop-color="#95321a"/><stop offset=".7429" stop-color="#8d210f"/><stop offset=".8143" stop-color="#821506"/><stop offset=".9000" stop-color="#760b00"/><stop offset="1" stop-color="#630400"/></linearGradient>
<linearGradient id="o76"><stop offset="0" stop-color="#007b67"/><stop offset=".3327" stop-color="#019e79"/><stop offset=".3752" stop-color="#259e77"/><stop offset=".4177" stop-color="#4d9e75"/><stop offset=".4531" stop-color="#739e73"/><stop offset=".4885" stop-color="#9e9e70"/><stop offset=".5027" stop-color="#9e8d63"/><stop offset=".5239" stop-color="#9e7953"/><stop offset=".5593" stop-color="#9d5f40"/><stop offset=".6088" stop-color="#9b452c"/><stop offset=".6655" stop-color="#95301c"/><stop offset=".7292" stop-color="#8c2010"/><stop offset=".8071" stop-color="#801307"/><stop offset=".8991" stop-color="#720900"/><stop offset="1" stop-color="#600300"/></linearGradient>
<linearGradient id="o77"><stop offset="0" stop-color="#007b6a"/><stop offset=".3234" stop-color="#009e7f"/><stop offset=".3585" stop-color="#1d9e7e"/><stop offset=".4007" stop-color="#459e7c"/><stop offset=".4359" stop-color="#6b9e7a"/><stop offset=".4780" stop-color="#9e9d76"/><stop offset=".4921" stop-color="#9e8c69"/><stop offset=".5132" stop-color="#9e7858"/><stop offset=".5554" stop-color="#9d5940"/><stop offset=".6046" stop-color="#9a412c"/><stop offset=".6608" stop-color="#932d1d"/><stop offset=".7241" stop-color="#8a1e11"/><stop offset=".8014" stop-color="#7e1107"/><stop offset=".9069" stop-color="#6e0700"/><stop offset="1" stop-color="#5d0100"/></linearGradient>
<linearGradient id="o78"><stop offset="0" stop-color="#007c6e"/><stop offset=".3136" stop-color="#009e85"/><stop offset=".3206" stop-color="#029e85"/><stop offset=".3624" stop-color="#289e84"/><stop offset=".3972" stop-color="#4b9e82"/><stop offset=".4251" stop-color="#6b9e81"/><stop offset=".4669" stop-color="#9e9d7d"/><stop offset=".4948" stop-color="#9e7d63"/><stop offset=".5157" stop-color="#9e6b54"/><stop offset=".5366" stop-color="#9d5d48"/><stop offset=".5854" stop-color="#9a4332"/><stop offset=".6481" stop-color="#932c1f"/><stop offset=".7178" stop-color="#881b11"/><stop offset=".7944" stop-color="#7c0f08"/><stop offset=".9059" stop-color="#6a0500"/><stop offset="1" stop-color="#590000"/></linearGradient>
<linearGradient id="o79"><stop offset="0" stop-color="#007c72"/><stop offset=".3120" stop-color="#019e8b"/><stop offset=".3466" stop-color="#219e8a"/><stop offset=".3813" stop-color="#459e89"/><stop offset=".4159" stop-color="#6c9e88"/><stop offset=".4506" stop-color="#999e87"/><stop offset=".4575" stop-color="#9e9a83"/><stop offset=".4714" stop-color="#9e8974"/><stop offset=".4922" stop-color="#9e7462"/><stop offset=".5338" stop-color="#9d5647"/><stop offset=".5823" stop-color="#993d32"/><stop offset=".6447" stop-color="#91281f"/><stop offset=".7140" stop-color="#861812"/><stop offset=".7903" stop-color="#790d08"/><stop offset=".9081" stop-color="#670400"/><stop offset="1" stop-color="#580000"/></linearGradient>
<linearGradient id="o80"><stop offset="0" stop-color="#007d76"/><stop offset=".3024" stop-color="#009e92"/><stop offset=".3299" stop-color="#199e91"/><stop offset=".3643" stop-color="#3c9e91"/><stop offset=".4055" stop-color="#6c9e90"/><stop offset=".4399" stop-color="#9a9e8f"/><stop offset=".4467" stop-color="#9e998a"/><stop offset=".4605" stop-color="#9e887a"/><stop offset=".4811" stop-color="#9e7367"/><stop offset=".5223" stop-color="#9d554b"/><stop offset=".5704" stop-color="#993c35"/><stop offset=".6323" stop-color="#902721"/><stop offset=".7010" stop-color="#851713"/><stop offset=".7904" stop-color="#750b08"/><stop offset=".9141" stop-color="#620200"/><stop offset=".9622" stop-color="#590000"/><stop offset="1" stop-color="#570000"/></linearGradient>
<linearGradient id="o81"><stop offset="0" stop-color="#007d7a"/><stop offset=".2935" stop-color="#009e98"/><stop offset=".3003" stop-color="#039e98"/><stop offset=".3072" stop-color="#099e98"/><stop offset=".3549" stop-color="#3a9e98"/><stop offset=".3959" stop-color="#6b9e98"/><stop offset=".4300" stop-color="#9a9e97"/><stop offset=".4369" stop-color="#9e9891"/><stop offset=".4505" stop-color="#9e8781"/><stop offset=".4710" stop-color="#9e726d"/><stop offset=".5119" stop-color="#9d534f"/><stop offset=".5666" stop-color="#973835"/><stop offset=".6280" stop-color="#8e2421"/><stop offset=".6962" stop-color="#831513"/><stop offset=".7850" stop-color="#730908"/><stop offset=".9352" stop-color="#5b0000"/><stop offset="1" stop-color="#570000"/></linearGradient>
<linearGradient id="o82"><stop offset="0" stop-color="#007e7e"/><stop offset=".2847" stop-color="#009c9e"/><stop offset=".2915" stop-color="#029d9e"/><stop offset=".3254" stop-color="#249c9e"/><stop offset=".3593" stop-color="#4a9c9e"/><stop offset=".3932" stop-color="#759c9e"/><stop offset=".4203" stop-color="#9b9c9e"/><stop offset=".4271" stop-color="#9e9597"/><stop offset=".4407" stop-color="#9e8486"/><stop offset=".4610" stop-color="#9e6f71"/><stop offset=".5017" stop-color="#9d5152"/><stop offset=".5559" stop-color="#973637"/><stop offset=".6169" stop-color="#8e2223"/><stop offset=".6915" stop-color="#811314"/><stop offset=".7797" stop-color="#710809"/><stop offset=".9220" stop-color="#5b0000"/><stop offset="1" stop-color="#560000"/></linearGradient>
<linearGradient id="o83"><stop offset="0" stop-color="#007a7e"/><stop offset=".2828" stop-color="#00969e"/><stop offset=".3232" stop-color="#28959e"/><stop offset=".3569" stop-color="#4d949e"/><stop offset=".3906" stop-color="#77949e"/><stop offset=".4175" stop-color="#9d939e"/><stop offset=".4242" stop-color="#9e8b95"/><stop offset=".4377" stop-color="#9e7b85"/><stop offset=".4579" stop-color="#9e6870"/><stop offset=".4781" stop-color="#9e5860"/><stop offset=".5051" stop-color="#9c484f"/><stop offset=".5589" stop-color="#973035"/><stop offset=".6195" stop-color="#8d1e22"/><stop offset=".6936" stop-color="#811013"/><stop offset=".7811" stop-color="#710609"/><stop offset=".8822" stop-color="#620002"/><stop offset=".9226" stop-color="#5a0000"/><stop offset="1" stop-color="#550000"/></linearGradient>
<linearGradient id="o84"><stop offset="0" stop-color="#00777f"/><stop offset=".2742" stop-color="#008f9e"/><stop offset=".2809" stop-color="#048f9e"/><stop offset=".2943" stop-color="#108f9e"/><stop offset=".3411" stop-color="#418d9e"/><stop offset=".3746" stop-color="#698c9e"/><stop offset=".4147" stop-color="#9e8a9d"/><stop offset=".4281" stop-color="#9e7a8b"/><stop offset=".4482" stop-color="#9e6776"/><stop offset=".4883" stop-color="#9d4a57"/><stop offset=".5418" stop-color="#98313b"/><stop offset=".6087" stop-color="#8f1d25"/><stop offset=".6823" stop-color="#830f15"/><stop offset=".7759" stop-color="#730509"/><stop offset=".8562" stop-color="#660003"/><stop offset=".9231" stop-color="#5a0000"/><stop offset="1" stop-color="#550000"/></linearGradient>
<linearGradient id="o85"><stop offset="0" stop-color="#007480"/><stop offset=".2658" stop-color="#00889e"/><stop offset=".2791" stop-color="#09889e"/><stop offset=".3256" stop-color="#37879e"/><stop offset=".3654" stop-color="#65859e"/><stop offset=".4053" stop-color="#9a839e"/><stop offset=".4120" stop-color="#9e7e99"/><stop offset=".4252" stop-color="#9e7088"/><stop offset=".4452" stop-color="#9e5e74"/><stop offset=".4651" stop-color="#9e5064"/><stop offset=".4917" stop-color="#9d4152"/><stop offset=".5449" stop-color="#982b38"/><stop offset=".6047" stop-color="#8f1a25"/><stop offset=".6777" stop-color="#830e16"/><stop offset=".7708" stop-color="#73040a"/><stop offset=".8372" stop-color="#690004"/><stop offset=".9302" stop-color="#580000"/><stop offset="1" stop-color="#540000"/></linearGradient>
<linearGradient id="o86"><stop offset="0" stop-color="#007080"/><stop offset=".2640" stop-color="#01839e"/><stop offset=".2970" stop-color="#1f819e"/><stop offset=".3300" stop-color="#417f9e"/><stop offset=".3696" stop-color="#707d9e"/><stop offset=".4026" stop-color="#9b7b9e"/><stop offset=".4092" stop-color="#9e7598"/><stop offset=".4224" stop-color="#9e6887"/><stop offset=".4422" stop-color="#9e5874"/><stop offset=".4620" stop-color="#9e4b64"/><stop offset=".4884" stop-color="#9d3d53"/><stop offset=".5413" stop-color="#982839"/><stop offset=".6073" stop-color="#8f1724"/><stop offset=".6799" stop-color="#830b15"/><stop offset=".7723" stop-color="#73020a"/><stop offset=".8119" stop-color="#6d0006"/><stop offset=".9307" stop-color="#580000"/><stop offset="1" stop-color="#530000"/></linearGradient>
<linearGradient id="o87"><stop offset="0" stop-color="#006d81"/><stop offset=".2553" stop-color="#007d9e"/><stop offset=".2881" stop-color="#1c7b9e"/><stop offset=".3273" stop-color="#44799e"/><stop offset=".3666" stop-color="#72769e"/><stop offset=".3993" stop-color="#9d749e"/><stop offset=".4059" stop-color="#9e6d96"/><stop offset=".4190" stop-color="#9e6187"/><stop offset=".4386" stop-color="#9e5273"/><stop offset=".4583" stop-color="#9e4564"/><stop offset=".4845" stop-color="#9d3853"/><stop offset=".5368" stop-color="#98253a"/><stop offset=".6023" stop-color="#8f1525"/><stop offset=".6809" stop-color="#820915"/><stop offset=".7725" stop-color="#73010a"/><stop offset=".9296" stop-color="#570000"/><stop offset="1" stop-color="#520000"/></linearGradient>
<linearGradient id="o88"><stop offset="0" stop-color="#006a81"/><stop offset=".2488" stop-color="#00779e"/><stop offset=".2553" stop-color="#03779e"/><stop offset=".2750" stop-color="#15769e"/><stop offset=".3208" stop-color="#42739e"/><stop offset=".3601" stop-color="#6e709e"/><stop offset=".3928" stop-color="#986d9e"/><stop offset=".3993" stop-color="#9e6a9b"/><stop offset=".4124" stop-color="#9e5e8b"/><stop offset=".4321" stop-color="#9e4f77"/><stop offset=".4517" stop-color="#9e4367"/><stop offset=".4779" stop-color="#9d3656"/><stop offset=".5368" stop-color="#98213a"/><stop offset=".6023" stop-color="#8f1225"/><stop offset=".6809" stop-color="#830715"/><stop offset=".7791" stop-color="#720009"/><stop offset=".9427" stop-color="#550000"/><stop offset="1" stop-color="#520000"/></linearGradient>
<linearGradient id="o89"><stop offset="0" stop-color="#006782"/><stop offset=".2492" stop-color="#01729e"/><stop offset=".2885" stop-color="#246f9e"/><stop offset=".3213" stop-color="#456c9e"/><stop offset=".3607" stop-color="#71699e"/><stop offset=".3934" stop-color="#9a669e"/><stop offset=".4000" stop-color="#9e629a"/><stop offset=".4131" stop-color="#9e578a"/><stop offset=".4328" stop-color="#9e4977"/><stop offset=".4525" stop-color="#9e3e67"/><stop offset=".4787" stop-color="#9d3256"/><stop offset=".5377" stop-color="#981e3a"/><stop offset=".6033" stop-color="#901026"/><stop offset=".6820" stop-color="#830616"/><stop offset=".7738" stop-color="#74000b"/><stop offset=".9508" stop-color="#550000"/><stop offset="1" stop-color="#520000"/></linearGradient>
<linearGradient id="o90"><stop offset="0" stop-color="#006482"/><stop offset=".2430" stop-color="#006d9e"/><stop offset=".2759" stop-color="#1b6a9e"/><stop offset=".3153" stop-color="#41679e"/><stop offset=".3547" stop-color="#6b639e"/><stop offset=".3941" stop-color="#9c5f9e"/><stop offset=".4007" stop-color="#9e5b98"/><stop offset=".4335" stop-color="#9e4476"/><stop offset=".4795" stop-color="#9d2e56"/><stop offset=".5386" stop-color="#981b3b"/><stop offset=".6043" stop-color="#900e26"/><stop offset=".7094" stop-color="#800213"/><stop offset=".7750" stop-color="#74000b"/><stop offset=".9589" stop-color="#540000"/><stop offset="1" stop-color="#510000"/></linearGradient>
<linearGradient id="o91"><stop offset="0" stop-color="#006183"/><stop offset=".2372" stop-color="#00689e"/><stop offset=".2702" stop-color="#1a659e"/><stop offset=".3163" stop-color="#45619e"/><stop offset=".3558" stop-color="#705d9e"/><stop offset=".3954" stop-color="#9e589d"/><stop offset=".4086" stop-color="#9e4e8d"/><stop offset=".4283" stop-color="#9e417a"/><stop offset=".4481" stop-color="#9e376a"/><stop offset=".4745" stop-color="#9d2c59"/><stop offset=".5338" stop-color="#991a3d"/><stop offset=".5997" stop-color="#910d28"/><stop offset=".6524" stop-color="#8a061d"/><stop offset=".7117" stop-color="#800013"/><stop offset=".7710" stop-color="#75000c"/><stop offset=".8633" stop-color="#650005"/><stop offset=".9687" stop-color="#530000"/><stop offset="1" stop-color="#510000"/></linearGradient>
<linearGradient id="o92"><stop offset="0" stop-color="#005e83"/><stop offset=".2322" stop-color="#00639e"/><stop offset=".2388" stop-color="#02639e"/><stop offset=".2786" stop-color="#235f9e"/><stop offset=".3184" stop-color="#485b9e"/><stop offset=".3582" stop-color="#72579e"/><stop offset=".3914" stop-color="#99539e"/><stop offset=".3980" stop-color="#9e519b"/><stop offset=".4312" stop-color="#9e3c7a"/><stop offset=".4776" stop-color="#9d285a"/><stop offset=".5373" stop-color="#99173e"/><stop offset=".6036" stop-color="#910b29"/><stop offset=".7032" stop-color="#830016"/><stop offset=".7695" stop-color="#76000d"/><stop offset=".8756" stop-color="#640005"/><stop offset="1" stop-color="#510000"/></linearGradient>
<linearGradient id="o93"><stop offset="0" stop-color="#005b84"/><stop offset=".1288" stop-color="#005e92"/><stop offset=".2373" stop-color="#015e9e"/><stop offset=".3119" stop-color="#3f579e"/><stop offset=".3593" stop-color="#6e529e"/><stop offset=".4000" stop-color="#9c4d9e"/><stop offset=".4068" stop-color="#9e4998"/><stop offset=".4407" stop-color="#9e3678"/><stop offset=".4881" stop-color="#9d2359"/><stop offset=".5424" stop-color="#9a1540"/><stop offset=".6102" stop-color="#92092b"/><stop offset=".6983" stop-color="#860019"/><stop offset=".7729" stop-color="#79000f"/><stop offset=".8746" stop-color="#670006"/><stop offset="1" stop-color="#540001"/></linearGradient>
<linearGradient id="o94"><stop offset="0" stop-color="#005884"/><stop offset=".2353" stop-color="#005a9e"/><stop offset=".2768" stop-color="#1f569e"/><stop offset=".3253" stop-color="#48519e"/><stop offset=".3668" stop-color="#704c9e"/><stop offset=".4083" stop-color="#9e479e"/><stop offset=".4429" stop-color="#9e347d"/><stop offset=".4913" stop-color="#9d225d"/><stop offset=".5467" stop-color="#9a1443"/><stop offset=".6090" stop-color="#94092f"/><stop offset=".6920" stop-color="#8a001d"/><stop offset=".7751" stop-color="#7b0011"/><stop offset=".8789" stop-color="#690008"/><stop offset="1" stop-color="#570002"/></linearGradient>
<linearGradient id="o95"><stop offset="0" stop-color="#005585"/><stop offset=".2340" stop-color="#00559e"/><stop offset=".2695" stop-color="#18529e"/><stop offset=".3191" stop-color="#404d9e"/><stop offset=".3688" stop-color="#6d489e"/><stop offset=".4113" stop-color="#99429e"/><stop offset=".4184" stop-color="#9e409b"/><stop offset=".4539" stop-color="#9e2e7b"/><stop offset=".5035" stop-color="#9d1e5c"/><stop offset=".5603" stop-color="#9a1143"/><stop offset=".6241" stop-color="#94072f"/><stop offset=".6879" stop-color="#8d0021"/><stop offset=".7872" stop-color="#7c0012"/><stop offset=".8865" stop-color="#6b0009"/><stop offset="1" stop-color="#5b0003"/></linearGradient>
<linearGradient id="o96"><stop offset="0" stop-color="#005386"/><stop offset=".2323" stop-color="#00519e"/><stop offset=".2613" stop-color="#124f9e"/><stop offset=".3194" stop-color="#3e499e"/><stop offset=".3702" stop-color="#6a439e"/><stop offset=".4211" stop-color="#9d3c9e"/><stop offset=".4283" stop-color="#9e3998"/><stop offset=".4646" stop-color="#9e2979"/><stop offset=".5154" stop-color="#9d1a5b"/><stop offset=".5662" stop-color="#9b0f45"/><stop offset=".6316" stop-color="#950631"/><stop offset=".6897" stop-color="#8f0024"/><stop offset=".7913" stop-color="#7e0014"/><stop offset=".8857" stop-color="#6e000b"/><stop offset="1" stop-color="#5e0004"/></linearGradient>
<linearGradient id="o97"><stop offset="0" stop-color="#005086"/><stop offset=".2375" stop-color="#014d9e"/><stop offset=".2894" stop-color="#25489e"/><stop offset=".3414" stop-color="#4d429e"/><stop offset=".3859" stop-color="#733d9e"/><stop offset=".4304" stop-color="#9e379e"/><stop offset=".4675" stop-color="#9e277e"/><stop offset=".5121" stop-color="#9e1a62"/><stop offset=".5640" stop-color="#9c0f4b"/><stop offset=".6308" stop-color="#970536"/><stop offset=".6827" stop-color="#920029"/><stop offset=".7941" stop-color="#800016"/><stop offset=".8905" stop-color="#71000c"/><stop offset="1" stop-color="#610005"/></linearGradient>
<linearGradient id="o98"><stop offset="0" stop-color="#004d87"/><stop offset=".2357" stop-color="#01499e"/><stop offset=".2890" stop-color="#23449e"/><stop offset=".3346" stop-color="#453f9e"/><stop offset=".3878" stop-color="#70399e"/><stop offset=".4335" stop-color="#9a339e"/><stop offset=".4411" stop-color="#9e309b"/><stop offset=".4791" stop-color="#9e227c"/><stop offset=".5247" stop-color="#9e1662"/><stop offset=".5779" stop-color="#9c0c4b"/><stop offset=".6388" stop-color="#970438"/><stop offset=".6768" stop-color="#94002e"/><stop offset=".7985" stop-color="#810018"/><stop offset=".8897" stop-color="#74000e"/><stop offset="1" stop-color="#640007"/></linearGradient>
<linearGradient id="o99"><stop offset="0" stop-color="#004a87"/><stop offset=".2335" stop-color="#00459e"/><stop offset=".2802" stop-color="#1c419e"/><stop offset=".3346" stop-color="#413b9e"/><stop offset=".3891" stop-color="#6b359e"/><stop offset=".4436" stop-color="#9b2e9e"/><stop offset=".4514" stop-color="#9e2b99"/><stop offset=".4903" stop-color="#9e1e7c"/><stop offset=".5370" stop-color="#9e1362"/><stop offset=".5914" stop-color="#9c094b"/><stop offset=".6537" stop-color="#980238"/><stop offset=".7237" stop-color="#8f0028"/><stop offset=".8016" stop-color="#83001b"/><stop offset=".8949" stop-color="#760010"/><stop offset="1" stop-color="#670008"/></linearGradient>
<linearGradient id="o100"><stop offset="0" stop-color="#004788"/><stop offset=".2315" stop-color="#00429e"/><stop offset=".2794" stop-color="#1b3e9e"/><stop offset=".3433" stop-color="#45379e"/><stop offset=".3992" stop-color="#6f309e"/><stop offset=".4551" stop-color="#9e289e"/><stop offset=".4950" stop-color="#9e1c7f"/><stop offset=".5349" stop-color="#9e1268"/><stop offset=".5908" stop-color="#9c0950"/><stop offset=".6547" stop-color="#99013c"/><stop offset=".7265" stop-color="#90002b"/><stop offset=".8064" stop-color="#85001d"/><stop offset=".8942" stop-color="#790013"/><stop offset="1" stop-color="#6a000a"/></linearGradient>
<linearGradient id="o101"><stop offset="0" stop-color="#004588"/><stop offset=".2372" stop-color="#013e9e"/><stop offset=".2945" stop-color="#22399e"/><stop offset=".3517" stop-color="#47329e"/><stop offset=".4008" stop-color="#6b2d9e"/><stop offset=".4581" stop-color="#99259e"/><stop offset=".4663" stop-color="#9e239c"/><stop offset=".5072" stop-color="#9e187e"/><stop offset=".5562" stop-color="#9e0d64"/><stop offset=".6135" stop-color="#9c054e"/><stop offset=".6789" stop-color="#97003a"/><stop offset=".7444" stop-color="#8f002b"/><stop offset=".8180" stop-color="#86001f"/><stop offset=".8998" stop-color="#7a0015"/><stop offset="1" stop-color="#6d000c"/></linearGradient>
<linearGradient id="o102"><stop offset="0" stop-color="#004289"/><stop offset=".2358" stop-color="#013b9e"/><stop offset=".2947" stop-color="#21359e"/><stop offset=".3537" stop-color="#452f9e"/><stop offset=".4126" stop-color="#6e289e"/><stop offset=".4716" stop-color="#9c209e"/><stop offset=".4800" stop-color="#9e1e99"/><stop offset=".5221" stop-color="#9e137d"/><stop offset=".5642" stop-color="#9e0b67"/><stop offset=".6484" stop-color="#9b0048"/><stop offset=".6905" stop-color="#97003c"/><stop offset=".7579" stop-color="#8f002d"/><stop offset=".8253" stop-color="#870021"/><stop offset=".9095" stop-color="#7c0017"/><stop offset="1" stop-color="#70000e"/></linearGradient>
<linearGradient id="o103"><stop offset="0" stop-color="#003f8a"/><stop offset=".2338" stop-color="#00379e"/><stop offset=".3030" stop-color="#25319e"/><stop offset=".3636" stop-color="#492b9e"/><stop offset=".4242" stop-color="#71239e"/><stop offset=".4848" stop-color="#9e1b9d"/><stop offset=".5281" stop-color="#9e1180"/><stop offset=".5714" stop-color="#9e096a"/><stop offset=".6407" stop-color="#9c0050"/><stop offset=".6926" stop-color="#980040"/><stop offset=".7619" stop-color="#900030"/><stop offset=".8312" stop-color="#880024"/><stop offset="1" stop-color="#730011"/></linearGradient>
<linearGradient id="o104"><stop offset="0" stop-color="#003d8a"/><stop offset=".2311" stop-color="#00349e"/><stop offset=".2400" stop-color="#03349e"/><stop offset=".3022" stop-color="#222e9e"/><stop offset=".3644" stop-color="#46289e"/><stop offset=".4267" stop-color="#6d209e"/><stop offset=".4889" stop-color="#9a189e"/><stop offset=".4978" stop-color="#9e179c"/><stop offset=".5333" stop-color="#9e0f84"/><stop offset=".5778" stop-color="#9e076e"/><stop offset=".6400" stop-color="#9d0056"/><stop offset=".7022" stop-color="#980042"/><stop offset=".7644" stop-color="#920034"/><stop offset=".8356" stop-color="#8a0027"/><stop offset="1" stop-color="#760013"/></linearGradient>
<linearGradient id="o105"><stop offset="0" stop-color="#003a8b"/><stop offset=".2288" stop-color="#00319e"/><stop offset=".2380" stop-color="#02319e"/><stop offset=".3021" stop-color="#212b9e"/><stop offset=".3661" stop-color="#44249e"/><stop offset=".4394" stop-color="#701c9e"/><stop offset=".5034" stop-color="#9d149e"/><stop offset=".5126" stop-color="#9e1299"/><stop offset=".5492" stop-color="#9e0b82"/><stop offset=".5950" stop-color="#9e046c"/><stop offset=".6316" stop-color="#9d005e"/><stop offset=".7140" stop-color="#970044"/><stop offset=".7780" stop-color="#910035"/><stop offset=".8421" stop-color="#8b002a"/><stop offset="1" stop-color="#790016"/></linearGradient>
<linearGradient id="o106"><stop offset="0" stop-color="#00378c"/><stop offset=".2358" stop-color="#022e9e"/><stop offset=".3113" stop-color="#25279e"/><stop offset=".3774" stop-color="#47209e"/><stop offset=".4434" stop-color="#6e199e"/><stop offset=".5189" stop-color="#9e0f9d"/><stop offset=".5566" stop-color="#9e0986"/><stop offset=".6038" stop-color="#9e026f"/><stop offset=".6604" stop-color="#9c005a"/><stop offset=".7170" stop-color="#980048"/><stop offset=".7830" stop-color="#920039"/><stop offset=".8491" stop-color="#8c002c"/><stop offset="1" stop-color="#7c0019"/></linearGradient>
<linearGradient id="o107"><stop offset="0" stop-color="#00358c"/><stop offset=".2330" stop-color="#002b9e"/><stop offset=".3107" stop-color="#23249e"/><stop offset=".3786" stop-color="#441e9e"/><stop offset=".4563" stop-color="#6f159e"/><stop offset=".5243" stop-color="#9a0d9e"/><stop offset=".5340" stop-color="#9e0b9c"/><stop offset=".5728" stop-color="#9e0585"/><stop offset=".6214" stop-color="#9e006f"/><stop offset=".6699" stop-color="#9b005c"/><stop offset=".7184" stop-color="#98004d"/><stop offset=".7767" stop-color="#94003f"/><stop offset=".8447" stop-color="#8e0031"/><stop offset="1" stop-color="#7e001c"/></linearGradient>
<linearGradient id="o108"><stop offset="0" stop-color="#00328d"/><stop offset=".2317" stop-color="#01289e"/><stop offset=".3123" stop-color="#23219e"/><stop offset=".3929" stop-color="#491a9e"/><stop offset=".4635" stop-color="#6e129e"/><stop offset=".5441" stop-color="#9e089e"/><stop offset=".6045" stop-color="#9e007d"/><stop offset=".6247" stop-color="#9d0074"/><stop offset=".6751" stop-color="#9b0061"/><stop offset=".7254" stop-color="#980051"/><stop offset=".8463" stop-color="#8f0036"/><stop offset="1" stop-color="#810020"/></linearGradient>
<linearGradient id="o109"><stop offset="0" stop-color="#00308e"/><stop offset=".2292" stop-color="#00259e"/><stop offset=".3125" stop-color="#221e9e"/><stop offset=".3958" stop-color="#47179e"/><stop offset=".4792" stop-color="#710e9e"/><stop offset=".5521" stop-color="#9b059e"/><stop offset=".5625" stop-color="#9e049b"/><stop offset=".5938" stop-color="#9e008a"/><stop offset=".6458" stop-color="#9c0072"/><stop offset=".7396" stop-color="#980053"/><stop offset=".8542" stop-color="#900039"/><stop offset="1" stop-color="#830024"/></linearGradient>
<linearGradient id="o110"><stop offset="0" stop-color="#002d8e"/><stop offset=".2264" stop-color="#00239e"/><stop offset=".3127" stop-color="#211c9e"/><stop offset=".4097" stop-color="#4a139e"/><stop offset=".4960" stop-color="#740a9e"/><stop offset=".5714" stop-color="#9e019e"/><stop offset=".6469" stop-color="#9c0079"/><stop offset=".6900" stop-color="#9a0068"/><stop offset=".7439" stop-color="#980058"/><stop offset=".8625" stop-color="#90003d"/><stop offset="1" stop-color="#850028"/></linearGradient>
<linearGradient id="o111"><stop offset="0" stop-color="#002a8f"/><stop offset=".2235" stop-color="#00209e"/><stop offset=".3017" stop-color="#1b1a9e"/><stop offset=".4022" stop-color="#44119e"/><stop offset=".4916" stop-color="#6c099e"/><stop offset=".5698" stop-color="#94009e"/><stop offset=".5922" stop-color="#9d009b"/><stop offset=".6257" stop-color="#9c008a"/><stop offset=".6704" stop-color="#9b0076"/><stop offset=".7598" stop-color="#970059"/><stop offset=".8715" stop-color="#910040"/><stop offset="1" stop-color="#87002c"/></linearGradient>
<linearGradient id="o112"><stop offset="0" stop-color="#002890"/><stop offset=".2203" stop-color="#001e9e"/><stop offset=".2319" stop-color="#021d9e"/><stop offset=".3246" stop-color="#23169e"/><stop offset=".4174" stop-color="#470e9e"/><stop offset=".5565" stop-color="#85009e"/><stop offset=".6029" stop-color="#9c009d"/><stop offset=".6841" stop-color="#9a0078"/><stop offset=".7652" stop-color="#97005e"/><stop offset=".8696" stop-color="#920046"/><stop offset="1" stop-color="#890031"/></linearGradient>
<linearGradient id="o113"><stop offset="0" stop-color="#002590"/><stop offset=".2169" stop-color="#001b9e"/><stop offset=".2289" stop-color="#021b9e"/><stop offset=".3253" stop-color="#22139e"/><stop offset=".4217" stop-color="#450b9e"/><stop offset=".5422" stop-color="#78009e"/><stop offset=".6265" stop-color="#9c009a"/><stop offset=".6988" stop-color="#99007a"/><stop offset=".7831" stop-color="#960060"/><stop offset=".8795" stop-color="#92004a"/><stop offset="1" stop-color="#8b0035"/></linearGradient>
<linearGradient id="o114"><stop offset="0" stop-color="#002391"/><stop offset=".2264" stop-color="#01189e"/><stop offset=".3270" stop-color="#21119e"/><stop offset=".4277" stop-color="#44099e"/><stop offset=".5283" stop-color="#6b009e"/><stop offset=".6415" stop-color="#99009b"/><stop offset=".7170" stop-color="#98007d"/><stop offset=".7925" stop-color="#960065"/><stop offset=".8931" stop-color="#92004e"/><stop offset="1" stop-color="#8c003b"/></linearGradient>
<linearGradient id="o115"><stop offset="0" stop-color="#002092"/><stop offset=".2230" stop-color="#01169e"/><stop offset=".3672" stop-color="#2c0c9e"/><stop offset=".5115" stop-color="#5e009e"/><stop offset=".6557" stop-color="#95009a"/><stop offset=".6689" stop-color="#9a0099"/><stop offset=".7344" stop-color="#98007f"/><stop offset=".8131" stop-color="#950067"/><stop offset=".9049" stop-color="#920052"/><stop offset="1" stop-color="#8d0041"/></linearGradient>
<linearGradient id="o116"><stop offset="0" stop-color="#001e92"/><stop offset=".2192" stop-color="#01149e"/><stop offset=".3562" stop-color="#270b9e"/><stop offset=".4932" stop-color="#53009e"/><stop offset=".6849" stop-color="#960099"/><stop offset=".6986" stop-color="#990095"/><stop offset=".7671" stop-color="#97007c"/><stop offset=".8356" stop-color="#950069"/><stop offset=".9178" stop-color="#920056"/><stop offset="1" stop-color="#8e0047"/></linearGradient>
<linearGradient id="o117"><stop offset="0" stop-color="#001b93"/><stop offset=".2151" stop-color="#00129e"/><stop offset=".3441" stop-color="#22099e"/><stop offset=".4731" stop-color="#48009e"/><stop offset=".6022" stop-color="#71009b"/><stop offset=".7168" stop-color="#980098"/><stop offset=".7742" stop-color="#960083"/><stop offset=".8459" stop-color="#94006e"/><stop offset=".9176" stop-color="#92005d"/><stop offset="1" stop-color="#8f004e"/></linearGradient>
<linearGradient id="o118"><stop offset="0" stop-color="#001993"/><stop offset=".2105" stop-color="#00109e"/><stop offset=".3308" stop-color="#1d089e"/><stop offset=".4511" stop-color="#3e009e"/><stop offset=".6015" stop-color="#69009a"/><stop offset=".7368" stop-color="#940097"/><stop offset=".7519" stop-color="#970094"/><stop offset=".8120" stop-color="#950080"/><stop offset=".8722" stop-color="#940070"/><stop offset="1" stop-color="#900055"/></linearGradient>
<linearGradient id="o119"><stop offset="0" stop-color="#001694"/><stop offset=".2063" stop-color="#000d9e"/><stop offset=".4286" stop-color="#35009e"/><stop offset=".6032" stop-color="#63009a"/><stop offset=".7619" stop-color="#920096"/><stop offset=".7778" stop-color="#960095"/><stop offset=".8730" stop-color="#940078"/><stop offset="1" stop-color="#90005d"/></linearGradient>
<linearGradient id="o120"><stop offset="0" stop-color="#001495"/><stop offset=".2017" stop-color="#000b9e"/><stop offset=".4034" stop-color="#2c009e"/><stop offset=".6218" stop-color="#610099"/><stop offset=".8067" stop-color="#930095"/><stop offset=".8235" stop-color="#950092"/><stop offset=".9076" stop-color="#93007a"/><stop offset="1" stop-color="#910066"/></linearGradient>
<linearGradient id="o121"><stop offset="0" stop-color="#001196"/><stop offset=".1956" stop-color="#00099e"/><stop offset=".2133" stop-color="#03089e"/><stop offset=".3733" stop-color="#23009e"/><stop offset=".6222" stop-color="#5a0099"/><stop offset=".8533" stop-color="#940094"/><stop offset=".9244" stop-color="#920080"/><stop offset="1" stop-color="#91006f"/></linearGradient>
<linearGradient id="o122"><stop offset="0" stop-color="#000f97"/><stop offset=".1896" stop-color="#00079e"/><stop offset=".3412" stop-color="#1c009e"/><stop offset=".6256" stop-color="#550098"/><stop offset=".8910" stop-color="#920093"/><stop offset="1" stop-color="#91007a"/></linearGradient>
<linearGradient id="o123"><stop offset="0" stop-color="#000c97"/><stop offset=".1818" stop-color="#00059e"/><stop offset=".2020" stop-color="#03059e"/><stop offset=".3030" stop-color="#14009e"/><stop offset=".5859" stop-color="#470099"/><stop offset=".9293" stop-color="#8e0092"/><stop offset=".9495" stop-color="#920091"/><stop offset="1" stop-color="#910085"/></linearGradient>
<linearGradient id="o124"><stop offset="0" stop-color="#000a98"/><stop offset=".1739" stop-color="#00039e"/><stop offset=".1957" stop-color="#03039e"/><stop offset=".2609" stop-color="#0d009e"/><stop offset=".6304" stop-color="#4a0098"/><stop offset="1" stop-color="#900091"/></linearGradient>
<linearGradient id="o125"><stop offset="0" stop-color="#000799"/><stop offset=".1637" stop-color="#00029e"/><stop offset=".1871" stop-color="#03019e"/><stop offset=".6082" stop-color="#410098"/><stop offset="1" stop-color="#830091"/></linearGradient>
<linearGradient id="o126"><stop offset="0" stop-color="#000599"/><stop offset=".1529" stop-color="#00009e"/><stop offset=".1783" stop-color="#03009e"/><stop offset=".6115" stop-color="#3d0097"/><stop offset="1" stop-color="#770091"/></linearGradient>
<linearGradient id="o127"><stop offset="0" stop-color="#00029a"/><stop offset=".1408" stop-color="#00009d"/><stop offset=".5915" stop-color="#350097"/><stop offset="1" stop-color="#6a0092"/></linearGradient>
<linearGradient id="o128"><stop offset="0" stop-color="#00009a"/><stop offset=".1250" stop-color="#01009c"/><stop offset=".5938" stop-color="#310097"/><stop offset="1" stop-color="#5f0092"/></linearGradient>
<linearGradient id="o129"><stop offset="0" stop-color="#00009a"/><stop offset=".1053" stop-color="#01009b"/><stop offset=".5614" stop-color="#2a0097"/><stop offset="1" stop-color="#550092"/></linearGradient>
<linearGradient id="o130"><stop offset="0" stop-color="#000099"/><stop offset=".0792" stop-color="#01009a"/><stop offset="1" stop-color="#4b0092"/></linearGradient>
<linearGradient id="o131"><stop offset="0" stop-color="#000098"/><stop offset=".3721" stop-color="#170097"/><stop offset="1" stop-color="#420092"/></linearGradient>
<linearGradient id="o132"><stop offset="0" stop-color="#030097"/><stop offset="1" stop-color="#390092"/></linearGradient>
<linearGradient id="o133"><stop offset="0" stop-color="#070096"/><stop offset="1" stop-color="#300092"/></linearGradient>
<linearGradient id="o134"><stop offset="0" stop-color="#0c0095"/><stop offset="1" stop-color="#270093"/></linearGradient>
<linearGradient id="i0"><stop offset="0" stop-color="#00ff01"/><stop offset=".4444" stop-color="#00ff00"/><stop offset="1" stop-color="#11ff00"/></linearGradient>
<linearGradient id="i1"><stop offset="0" stop-color="#00ff03"/><stop offset=".3529" stop-color="#00ff00"/><stop offset="1" stop-color="#1bff00"/></linearGradient>
<linearGradient id="i2"><stop offset="0" stop-color="#00ff06"/><stop offset=".2791" stop-color="#00ff02"/><stop offset=".3721" stop-color="#03ff01"/><stop offset="1" stop-color="#27ff00"/></linearGradient>
<linearGradient id="i3"><stop offset="0" stop-color="#00ff09"/><stop offset=".2353" stop-color="#00ff05"/><stop offset=".3137" stop-color="#04ff04"/><stop offset=".5490" stop-color="#14ff00"/><stop offset="1" stop-color="#34ff00"/></linearGradient>
<linearGradient id="i4"><stop offset="0" stop-color="#00ff0c"/><stop offset=".2000" stop-color="#00ff08"/><stop offset=".2667" stop-color="#03ff07"/><stop offset=".6000" stop-color="#1eff00"/><stop offset="1" stop-color="#41ff00"/></linearGradient>
<linearGradient id="i5"><stop offset="0" stop-color="#00ff0f"/><stop offset=".1765" stop-color="#00ff0b"/><stop offset=".2353" stop-color="#04ff0a"/><stop offset=".6471" stop-color="#2bff00"/><stop offset="1" stop-color="#4fff00"/></linearGradient>
<linearGradient id="i6"><stop offset="0" stop-color="#00ff13"/><stop offset=".1579" stop-color="#00ff0f"/><stop offset=".2105" stop-color="#03ff0d"/><stop offset=".6842" stop-color="#37ff00"/><stop offset="1" stop-color="#5cff00"/></linearGradient>
<linearGradient id="i7"><stop offset="0" stop-color="#00ff16"/><stop offset=".1429" stop-color="#00ff12"/><stop offset=".1905" stop-color="#04ff10"/><stop offset=".7143" stop-color="#45ff00"/><stop offset="1" stop-color="#6cff00"/></linearGradient>
<linearGradient id="i8"><stop offset="0" stop-color="#00ff19"/><stop offset=".1290" stop-color="#00ff15"/><stop offset=".1720" stop-color="#03ff14"/><stop offset=".7312" stop-color="#52ff00"/><stop offset="1" stop-color="#7cff00"/></linearGradient>
<linearGradient id="i9"><stop offset="0" stop-color="#00ff1c"/><stop offset=".1188" stop-color="#00ff18"/><stop offset=".1584" stop-color="#04ff17"/><stop offset=".4752" stop-color="#33ff0b"/><stop offset=".7525" stop-color="#61ff00"/><stop offset="1" stop-color="#8dff00"/></linearGradient>
<linearGradient id="i10"><stop offset="0" stop-color="#00ff20"/><stop offset=".1091" stop-color="#00ff1c"/><stop offset=".1818" stop-color="#09ff19"/><stop offset=".4727" stop-color="#3aff0e"/><stop offset=".7636" stop-color="#6fff01"/><stop offset="1" stop-color="#a0ff00"/></linearGradient>
<linearGradient id="i11"><stop offset="0" stop-color="#00ff23"/><stop offset=".1017" stop-color="#00ff1f"/><stop offset=".2712" stop-color="#1cff18"/><stop offset=".5424" stop-color="#4fff0c"/><stop offset=".7797" stop-color="#81ff01"/><stop offset="1" stop-color="#b3ff00"/></linearGradient>
<linearGradient id="i12"><stop offset="0" stop-color="#00ff27"/><stop offset=".0952" stop-color="#00ff23"/><stop offset=".1270" stop-color="#03ff22"/><stop offset=".2857" stop-color="#22ff1b"/><stop offset=".5397" stop-color="#56ff0f"/><stop offset=".7937" stop-color="#91ff01"/><stop offset="1" stop-color="#c6ff00"/></linearGradient>
<linearGradient id="i13"><stop offset="0" stop-color="#00ff2b"/><stop offset=".0896" stop-color="#00ff27"/><stop offset=".1194" stop-color="#04ff25"/><stop offset=".3284" stop-color="#30ff1b"/><stop offset=".5672" stop-color="#67ff0f"/><stop offset=".8060" stop-color="#a4ff01"/><stop offset="1" stop-color="#dbff00"/></linearGradient>
<linearGradient id="i14"><stop offset="0" stop-color="#00ff2f"/><stop offset=".0839" stop-color="#00ff2b"/><stop offset=".1119" stop-color="#03ff29"/><stop offset=".3636" stop-color="#3dff1d"/><stop offset=".6993" stop-color="#95ff09"/><stop offset=".8392" stop-color="#bfff00"/><stop offset="1" stop-color="#f3ff00"/></linearGradient>
<linearGradient id="i15"><stop offset="0" stop-color="#00ff32"/><stop offset=".0795" stop-color="#00ff2e"/><stop offset=".1060" stop-color="#04ff2d"/><stop offset=".3179" stop-color="#38ff22"/><stop offset=".5033" stop-color="#6aff17"/><stop offset=".6623" stop-color="#99ff0d"/><stop offset=".8477" stop-color="#d5ff00"/><stop offset=".9536" stop-color="#fbff00"/><stop offset="1" stop-color="#fff300"/></linearGradient>
<linearGradient id="i16"><stop offset="0" stop-color="#00ff36"/><stop offset=".0750" stop-color="#00ff33"/><stop offset=".1000" stop-color="#03ff31"/><stop offset=".3500" stop-color="#46ff23"/><stop offset=".6250" stop-color="#9aff11"/><stop offset=".8500" stop-color="#eaff00"/><stop offset=".9000" stop-color="#feff00"/><stop offset="1" stop-color="#ffdd00"/></linearGradient>
<linearGradient id="i17"><stop offset="0" stop-color="#00ff3a"/><stop offset=".0714" stop-color="#00ff37"/><stop offset=".0952" stop-color="#04ff35"/><stop offset=".3095" stop-color="#40ff29"/><stop offset=".5714" stop-color="#95ff17"/><stop offset=".7143" stop-color="#caff0c"/><stop offset=".8333" stop-color="#f9ff02"/><stop offset=".8571" stop-color="#fffb00"/><stop offset=".9286" stop-color="#ffe000"/><stop offset="1" stop-color="#ffc900"/></linearGradient>
<linearGradient id="i18"><stop offset="0" stop-color="#00ff3f"/><stop offset=".0682" stop-color="#00ff3b"/><stop offset=".0909" stop-color="#04ff3a"/><stop offset=".2955" stop-color="#40ff2d"/><stop offset=".5455" stop-color="#96ff1c"/><stop offset=".6818" stop-color="#ccff11"/><stop offset=".7955" stop-color="#fcff07"/><stop offset=".8636" stop-color="#ffe500"/><stop offset="1" stop-color="#ffb900"/></linearGradient>
<linearGradient id="i19"><stop offset="0" stop-color="#00ff43"/><stop offset=".0652" stop-color="#00ff3f"/><stop offset=".0870" stop-color="#04ff3e"/><stop offset=".2826" stop-color="#42ff32"/><stop offset=".5217" stop-color="#9aff20"/><stop offset=".7391" stop-color="#f8ff0d"/><stop offset=".7609" stop-color="#fffc0b"/><stop offset=".8696" stop-color="#ffd000"/><stop offset="1" stop-color="#ffa900"/></linearGradient>
<linearGradient id="i20"><stop offset="0" stop-color="#00ff48"/><stop offset=".0622" stop-color="#00ff44"/><stop offset=".0829" stop-color="#04ff43"/><stop offset=".2694" stop-color="#42ff36"/><stop offset=".4974" stop-color="#9bff25"/><stop offset=".7047" stop-color="#fbff12"/><stop offset=".7254" stop-color="#fff810"/><stop offset=".7876" stop-color="#ffdd08"/><stop offset=".8497" stop-color="#ffc602"/><stop offset="1" stop-color="#ff9b00"/></linearGradient>
<linearGradient id="i21"><stop offset="0" stop-color="#00ff4c"/><stop offset=".0597" stop-color="#00ff48"/><stop offset=".0796" stop-color="#05ff47"/><stop offset=".2388" stop-color="#3dff3c"/><stop offset=".4577" stop-color="#96ff2b"/><stop offset=".6766" stop-color="#fffd17"/><stop offset=".7363" stop-color="#ffe00f"/><stop offset=".8159" stop-color="#ffc106"/><stop offset=".8756" stop-color="#ffae00"/><stop offset="1" stop-color="#ff8d00"/></linearGradient>
<linearGradient id="i22"><stop offset="0" stop-color="#00ff51"/><stop offset=".0571" stop-color="#00ff4d"/><stop offset=".0762" stop-color="#04ff4c"/><stop offset=".2095" stop-color="#35ff43"/><stop offset=".4000" stop-color="#86ff34"/><stop offset=".5143" stop-color="#bdff2a"/><stop offset=".6286" stop-color="#faff1e"/><stop offset=".6476" stop-color="#fff91c"/><stop offset=".7238" stop-color="#ffd511"/><stop offset=".8000" stop-color="#ffb708"/><stop offset=".8762" stop-color="#ffa001"/><stop offset="1" stop-color="#ff8100"/></linearGradient>
<linearGradient id="i23"><stop offset="0" stop-color="#00ff56"/><stop offset=".0553" stop-color="#00ff52"/><stop offset=".0737" stop-color="#05ff51"/><stop offset=".2212" stop-color="#3fff46"/><stop offset=".3318" stop-color="#6fff3e"/><stop offset=".4240" stop-color="#9cff36"/><stop offset=".6083" stop-color="#fffe23"/><stop offset=".6820" stop-color="#ffd817"/><stop offset=".7742" stop-color="#ffb30b"/><stop offset=".8848" stop-color="#ff9201"/><stop offset="1" stop-color="#ff7700"/></linearGradient>
<linearGradient id="i24"><stop offset="0" stop-color="#00ff5b"/><stop offset=".0531" stop-color="#00ff57"/><stop offset=".0708" stop-color="#04ff56"/><stop offset=".1947" stop-color="#37ff4d"/><stop offset=".3717" stop-color="#8bff3e"/><stop offset=".4779" stop-color="#c4ff34"/><stop offset=".5664" stop-color="#f9ff2b"/><stop offset=".5841" stop-color="#fffa29"/><stop offset=".6726" stop-color="#ffcc19"/><stop offset=".7611" stop-color="#ffaa0d"/><stop offset=".8850" stop-color="#ff8601"/><stop offset="1" stop-color="#ff6d00"/></linearGradient>
<linearGradient id="i25"><stop offset="0" stop-color="#00ff60"/><stop offset=".0513" stop-color="#00ff5c"/><stop offset=".0684" stop-color="#05ff5b"/><stop offset=".2051" stop-color="#41ff51"/><stop offset=".3761" stop-color="#98ff42"/><stop offset=".4615" stop-color="#c9ff3a"/><stop offset=".5470" stop-color="#ffff31"/><stop offset=".6325" stop-color="#ffcf1f"/><stop offset=".7350" stop-color="#ffa510"/><stop offset=".8034" stop-color="#ff9009"/><stop offset=".8889" stop-color="#ff7a01"/><stop offset="1" stop-color="#ff6400"/></linearGradient>
<linearGradient id="i26"><stop offset="0" stop-color="#00ff65"/><stop offset=".0494" stop-color="#00ff62"/><stop offset=".0658" stop-color="#04ff61"/><stop offset=".1811" stop-color="#39ff58"/><stop offset=".3457" stop-color="#90ff4a"/><stop offset=".4280" stop-color="#c1ff42"/><stop offset=".5103" stop-color="#f7ff39"/><stop offset=".5267" stop-color="#fffc36"/><stop offset=".6091" stop-color="#ffcc24"/><stop offset=".6584" stop-color="#ffb51b"/><stop offset=".7243" stop-color="#ff9d12"/><stop offset=".8066" stop-color="#ff8409"/><stop offset=".8889" stop-color="#ff7001"/><stop offset="1" stop-color="#ff5b00"/></linearGradient>
<linearGradient id="i27"><stop offset="0" stop-color="#00ff6b"/><stop offset=".0478" stop-color="#00ff67"/><stop offset=".0637" stop-color="#05ff66"/><stop offset=".1753" stop-color="#3bff5e"/><stop offset=".3347" stop-color="#94ff50"/><stop offset=".4143" stop-color="#c6ff48"/><stop offset=".4940" stop-color="#feff3f"/><stop offset=".5418" stop-color="#ffe132"/><stop offset=".5896" stop-color="#ffc728"/><stop offset=".6375" stop-color="#ffb11f"/><stop offset=".7012" stop-color="#ff9915"/><stop offset=".7968" stop-color="#ff7c0a"/><stop offset=".8924" stop-color="#ff6601"/><stop offset="1" stop-color="#ff5300"/></linearGradient>
<linearGradient id="i28"><stop offset="0" stop-color="#00ff71"/><stop offset=".0462" stop-color="#00ff6d"/><stop offset=".0615" stop-color="#04ff6c"/><stop offset=".1692" stop-color="#3bff64"/><stop offset=".3231" stop-color="#95ff56"/><stop offset=".4000" stop-color="#c9ff4e"/><stop offset=".4615" stop-color="#f6ff47"/><stop offset=".4769" stop-color="#fffd45"/><stop offset=".5231" stop-color="#ffdd38"/><stop offset=".5692" stop-color="#ffc32c"/><stop offset=".6308" stop-color="#ffa720"/><stop offset=".6923" stop-color="#ff9017"/><stop offset=".7846" stop-color="#ff760b"/><stop offset=".8923" stop-color="#ff5e01"/><stop offset="1" stop-color="#ff4b00"/></linearGradient>
<linearGradient id="i29"><stop offset="0" stop-color="#00ff76"/><stop offset=".0449" stop-color="#00ff73"/><stop offset=".0599" stop-color="#05ff72"/><stop offset=".1648" stop-color="#3dff6a"/><stop offset=".2397" stop-color="#69ff63"/><stop offset=".3146" stop-color="#99ff5c"/><stop offset=".3895" stop-color="#ceff55"/><stop offset=".4494" stop-color="#fcff4e"/><stop offset=".4644" stop-color="#fff64a"/><stop offset=".5094" stop-color="#ffd73c"/><stop offset=".5543" stop-color="#ffbe30"/><stop offset=".6142" stop-color="#ffa324"/><stop offset=".6742" stop-color="#ff8c1a"/><stop offset=".7491" stop-color="#ff7610"/><stop offset=".8240" stop-color="#ff6408"/><stop offset=".9139" stop-color="#ff5200"/><stop offset="1" stop-color="#ff4500"/></linearGradient>
<linearGradient id="i30"><stop offset="0" stop-color="#00ff7c"/><stop offset=".0435" stop-color="#00ff79"/><stop offset=".0580" stop-color="#04ff78"/><stop offset=".1449" stop-color="#35ff72"/><stop offset=".2174" stop-color="#61ff6b"/><stop offset=".2899" stop-color="#91ff65"/><stop offset=".3623" stop-color="#c6ff5d"/><stop offset=".4348" stop-color="#fffe55"/><stop offset=".4783" stop-color="#ffdd45"/><stop offset=".5362" stop-color="#ffbb35"/><stop offset=".5942" stop-color="#ffa028"/><stop offset=".6522" stop-color="#ff8a1e"/><stop offset=".7246" stop-color="#ff7313"/><stop offset=".8116" stop-color="#ff5e09"/><stop offset=".9130" stop-color="#ff4b00"/><stop offset="1" stop-color="#ff3e00"/></linearGradient>
<linearGradient id="i31"><stop offset="0" stop-color="#00ff83"/><stop offset=".0423" stop-color="#00ff80"/><stop offset=".0563" stop-color="#06ff7f"/><stop offset=".1268" stop-color="#2eff79"/><stop offset=".1972" stop-color="#5aff73"/><stop offset=".2676" stop-color="#8bff6d"/><stop offset=".3380" stop-color="#c0ff66"/><stop offset=".4085" stop-color="#fbff5e"/><stop offset=".4225" stop-color="#fff759"/><stop offset=".4648" stop-color="#ffd74a"/><stop offset=".5211" stop-color="#ffb539"/><stop offset=".5775" stop-color="#ff9b2b"/><stop offset=".6479" stop-color="#ff811e"/><stop offset=".7183" stop-color="#ff6c14"/><stop offset=".8028" stop-color="#ff580a"/><stop offset=".9155" stop-color="#ff4400"/><stop offset="1" stop-color="#fe3800"/></linearGradient>
<linearGradient id="i32"><stop offset="0" stop-color="#00ff89"/><stop offset=".0410" stop-color="#00ff86"/><stop offset=".0546" stop-color="#05ff85"/><stop offset=".1365" stop-color="#37ff7f"/><stop offset=".2048" stop-color="#64ff79"/><stop offset=".2730" stop-color="#97ff73"/><stop offset=".3413" stop-color="#ceff6c"/><stop offset=".3959" stop-color="#ffff66"/><stop offset=".4369" stop-color="#ffdd54"/><stop offset=".4915" stop-color="#ffba41"/><stop offset=".5597" stop-color="#ff9830"/><stop offset=".6280" stop-color="#ff7e22"/><stop offset=".7099" stop-color="#ff6615"/><stop offset=".7918" stop-color="#ff530c"/><stop offset=".9147" stop-color="#ff3d00"/><stop offset="1" stop-color="#fe3200"/></linearGradient>
<linearGradient id="i33"><stop offset="0" stop-color="#00ff90"/><stop offset=".0399" stop-color="#00ff8d"/><stop offset=".0532" stop-color="#06ff8c"/><stop offset=".1196" stop-color="#30ff87"/><stop offset=".2392" stop-color="#86ff7d"/><stop offset=".3056" stop-color="#bdff76"/><stop offset=".3721" stop-color="#f9ff6f"/><stop offset=".3854" stop-color="#fff86b"/><stop offset=".4252" stop-color="#ffd758"/><stop offset=".4784" stop-color="#ffb445"/><stop offset=".5449" stop-color="#ff9333"/><stop offset=".6113" stop-color="#ff7a25"/><stop offset=".6910" stop-color="#ff6218"/><stop offset=".7841" stop-color="#ff4d0c"/><stop offset=".9169" stop-color="#fe3700"/><stop offset="1" stop-color="#fd2c00"/></linearGradient>
<linearGradient id="i34"><stop offset="0" stop-color="#00ff97"/><stop offset=".0387" stop-color="#00ff94"/><stop offset=".0516" stop-color="#05ff93"/><stop offset=".1290" stop-color="#39ff8d"/><stop offset=".2452" stop-color="#92ff83"/><stop offset=".3097" stop-color="#cbff7d"/><stop offset=".3613" stop-color="#fdff78"/><stop offset=".4129" stop-color="#ffd35e"/><stop offset=".4645" stop-color="#ffb14a"/><stop offset=".5290" stop-color="#ff9037"/><stop offset=".5935" stop-color="#ff7729"/><stop offset=".6710" stop-color="#ff601b"/><stop offset=".7742" stop-color="#ff490e"/><stop offset=".9161" stop-color="#fe3100"/><stop offset="1" stop-color="#fb2700"/></linearGradient>
<linearGradient id="i35"><stop offset="0" stop-color="#00ff9e"/><stop offset=".0379" stop-color="#00ff9b"/><stop offset=".0505" stop-color="#06ff9a"/><stop offset=".1136" stop-color="#32ff96"/><stop offset=".2271" stop-color="#8cff8d"/><stop offset=".2902" stop-color="#c5ff87"/><stop offset=".3407" stop-color="#f7ff81"/><stop offset=".3533" stop-color="#fff97d"/><stop offset=".4038" stop-color="#ffcd62"/><stop offset=".4543" stop-color="#ffac4e"/><stop offset=".5174" stop-color="#ff8c3b"/><stop offset=".5931" stop-color="#ff6f29"/><stop offset=".6814" stop-color="#ff561a"/><stop offset=".7697" stop-color="#ff430f"/><stop offset=".9211" stop-color="#fd2c00"/><stop offset="1" stop-color="#fa2200"/></linearGradient>
<linearGradient id="i36"><stop offset="0" stop-color="#00ffa5"/><stop offset=".0368" stop-color="#00ffa3"/><stop offset=".0491" stop-color="#05ffa2"/><stop offset=".0982" stop-color="#28ff9f"/><stop offset=".1595" stop-color="#58ff9a"/><stop offset=".2209" stop-color="#8dff95"/><stop offset=".2822" stop-color="#c8ff8f"/><stop offset=".3313" stop-color="#fcff8b"/><stop offset=".3436" stop-color="#fff584"/><stop offset=".3926" stop-color="#ffc968"/><stop offset=".4417" stop-color="#ffa853"/><stop offset=".5031" stop-color="#ff893f"/><stop offset=".5767" stop-color="#ff6c2d"/><stop offset=".6626" stop-color="#ff541d"/><stop offset=".7607" stop-color="#ff3f10"/><stop offset=".9202" stop-color="#fb2600"/><stop offset="1" stop-color="#f71d00"/></linearGradient>
<linearGradient id="i37"><stop offset="0" stop-color="#00ffad"/><stop offset=".0359" stop-color="#00ffab"/><stop offset=".0479" stop-color="#06ffaa"/><stop offset=".0958" stop-color="#2affa7"/><stop offset=".1557" stop-color="#5bffa2"/><stop offset=".2036" stop-color="#86ff9f"/><stop offset=".2635" stop-color="#c2ff9a"/><stop offset=".3114" stop-color="#f6ff95"/><stop offset=".3234" stop-color="#fffb91"/><stop offset=".3713" stop-color="#ffcd72"/><stop offset=".4192" stop-color="#ffaa5b"/><stop offset=".4910" stop-color="#ff8442"/><stop offset=".5629" stop-color="#ff6830"/><stop offset=".6467" stop-color="#ff5120"/><stop offset=".7425" stop-color="#fe3c12"/><stop offset=".9222" stop-color="#fa2100"/><stop offset="1" stop-color="#f41900"/></linearGradient>
<linearGradient id="i38"><stop offset="0" stop-color="#00ffb5"/><stop offset=".0350" stop-color="#00ffb3"/><stop offset=".0466" stop-color="#05ffb2"/><stop offset=".0816" stop-color="#21ffb0"/><stop offset=".1399" stop-color="#52ffac"/><stop offset=".1983" stop-color="#88ffa8"/><stop offset=".2566" stop-color="#c4ffa3"/><stop offset=".3032" stop-color="#faff9f"/><stop offset=".3149" stop-color="#fff698"/><stop offset=".3615" stop-color="#ffc978"/><stop offset=".4082" stop-color="#ffa661"/><stop offset=".4781" stop-color="#ff8146"/><stop offset=".5481" stop-color="#ff6633"/><stop offset=".6297" stop-color="#ff4e23"/><stop offset=".7347" stop-color="#fe3813"/><stop offset=".9213" stop-color="#f71d01"/><stop offset="1" stop-color="#f01400"/></linearGradient>
<linearGradient id="i39"><stop offset="0" stop-color="#00ffbd"/><stop offset=".0342" stop-color="#00ffbb"/><stop offset=".0456" stop-color="#06ffbb"/><stop offset=".0912" stop-color="#2cffb8"/><stop offset=".1481" stop-color="#5fffb4"/><stop offset=".1937" stop-color="#8dffb1"/><stop offset=".2393" stop-color="#beffae"/><stop offset=".2849" stop-color="#f4ffaa"/><stop offset=".2963" stop-color="#fffca7"/><stop offset=".3419" stop-color="#ffcc84"/><stop offset=".3989" stop-color="#ffa164"/><stop offset=".4672" stop-color="#ff7c4a"/><stop offset=".5356" stop-color="#ff6236"/><stop offset=".6268" stop-color="#ff4823"/><stop offset=".7293" stop-color="#fe3314"/><stop offset=".9231" stop-color="#f41801"/><stop offset="1" stop-color="#eb1000"/></linearGradient>
<linearGradient id="i40"><stop offset="0" stop-color="#00ffc6"/><stop offset=".0333" stop-color="#00ffc4"/><stop offset=".0444" stop-color="#05ffc4"/><stop offset=".0778" stop-color="#22ffc2"/><stop offset=".1667" stop-color="#77ffbd"/><stop offset=".2222" stop-color="#b4ffb9"/><stop offset=".2778" stop-color="#f8ffb5"/><stop offset=".2889" stop-color="#fff7af"/><stop offset=".3333" stop-color="#ffc88a"/><stop offset=".3889" stop-color="#ff9d6a"/><stop offset=".4556" stop-color="#ff794e"/><stop offset=".5333" stop-color="#ff5b37"/><stop offset=".6222" stop-color="#ff4324"/><stop offset=".7333" stop-color="#fd2d13"/><stop offset=".8333" stop-color="#f81e08"/><stop offset=".9222" stop-color="#f01401"/><stop offset="1" stop-color="#e40c00"/></linearGradient>
<linearGradient id="i41"><stop offset="0" stop-color="#00ffcf"/><stop offset=".0327" stop-color="#00ffcd"/><stop offset=".0436" stop-color="#07ffcd"/><stop offset=".0872" stop-color="#2effcb"/><stop offset=".1417" stop-color="#64ffc8"/><stop offset=".1853" stop-color="#93ffc6"/><stop offset=".2725" stop-color="#fffebf"/><stop offset=".2943" stop-color="#ffe2a9"/><stop offset=".3161" stop-color="#ffcb97"/><stop offset=".3706" stop-color="#ff9f73"/><stop offset=".4360" stop-color="#ff7a55"/><stop offset=".5123" stop-color="#ff5b3d"/><stop offset=".6104" stop-color="#ff4027"/><stop offset=".7193" stop-color="#fc2a15"/><stop offset=".8719" stop-color="#f11505"/><stop offset=".9373" stop-color="#e80e00"/><stop offset="1" stop-color="#dd0900"/></linearGradient>
<linearGradient id="i42"><stop offset="0" stop-color="#00ffd8"/><stop offset=".0319" stop-color="#00ffd7"/><stop offset=".0426" stop-color="#06ffd6"/><stop offset=".0745" stop-color="#23ffd5"/><stop offset=".1596" stop-color="#7cffd2"/><stop offset=".2128" stop-color="#bdffcf"/><stop offset=".2553" stop-color="#f6ffcd"/><stop offset=".2660" stop-color="#fff9c7"/><stop offset=".2872" stop-color="#ffdeb1"/><stop offset=".3085" stop-color="#ffc79d"/><stop offset=".3617" stop-color="#ff9b79"/><stop offset=".4255" stop-color="#ff775a"/><stop offset=".5106" stop-color="#ff553d"/><stop offset=".6277" stop-color="#fe3623"/><stop offset=".7872" stop-color="#f61b0d"/><stop offset=".8936" stop-color="#e90f03"/><stop offset="1" stop-color="#d30600"/></linearGradient>
<linearGradient id="i43"><stop offset="0" stop-color="#00ffe2"/><stop offset=".0312" stop-color="#00ffe1"/><stop offset=".0417" stop-color="#07ffe0"/><stop offset=".0833" stop-color="#30ffdf"/><stop offset=".1250" stop-color="#5dffde"/><stop offset=".1667" stop-color="#8effdc"/><stop offset=".2083" stop-color="#c3ffdb"/><stop offset=".2500" stop-color="#ffffd9"/><stop offset=".2708" stop-color="#ffe3c0"/><stop offset=".2917" stop-color="#ffcbab"/><stop offset=".3125" stop-color="#ffb699"/><stop offset=".3438" stop-color="#ff9d83"/><stop offset=".4062" stop-color="#ff7761"/><stop offset=".4896" stop-color="#ff5543"/><stop offset=".6146" stop-color="#fe3326"/><stop offset=".7812" stop-color="#f4180e"/><stop offset=".8958" stop-color="#e20b03"/><stop offset="1" stop-color="#c80300"/></linearGradient>
<linearGradient id="i44"><stop offset="0" stop-color="#00ffec"/><stop offset=".0308" stop-color="#00ffeb"/><stop offset=".0411" stop-color="#06ffeb"/><stop offset=".0720" stop-color="#25ffea"/><stop offset=".1131" stop-color="#52ffea"/><stop offset=".1542" stop-color="#83ffe9"/><stop offset=".1954" stop-color="#b8ffe8"/><stop offset=".2365" stop-color="#f4ffe7"/><stop offset=".2468" stop-color="#fffae2"/><stop offset=".2674" stop-color="#ffdec8"/><stop offset=".2879" stop-color="#ffc6b2"/><stop offset=".3085" stop-color="#ffb2a0"/><stop offset=".3393" stop-color="#ff9988"/><stop offset=".4010" stop-color="#ff7466"/><stop offset=".4833" stop-color="#ff5247"/><stop offset=".6067" stop-color="#fe3129"/><stop offset=".6889" stop-color="#fa221a"/><stop offset=".7712" stop-color="#f21610"/><stop offset=".8843" stop-color="#de0904"/><stop offset="1" stop-color="#bd0100"/></linearGradient>
<linearGradient id="i45"><stop offset="0" stop-color="#00fff6"/><stop offset=".0308" stop-color="#00fff6"/><stop offset=".0410" stop-color="#07fff6"/><stop offset=".0615" stop-color="#1cfff6"/><stop offset=".1128" stop-color="#55fff5"/><stop offset=".1538" stop-color="#88fff5"/><stop offset=".1949" stop-color="#bffff5"/><stop offset=".2359" stop-color="#fdfff4"/><stop offset=".2462" stop-color="#fff1e7"/><stop offset=".2667" stop-color="#ffd6cd"/><stop offset=".2974" stop-color="#ffb5ad"/><stop offset=".3487" stop-color="#ff8c86"/><stop offset=".4103" stop-color="#ff6a65"/><stop offset=".4923" stop-color="#ff4b46"/><stop offset=".6154" stop-color="#fd2c29"/><stop offset=".7590" stop-color="#f11512"/><stop offset=".8615" stop-color="#de0907"/><stop offset=".9846" stop-color="#ba0000"/><stop offset="1" stop-color="#b80000"/></linearGradient>
<linearGradient id="i46"><stop offset="0" stop-color="#00fdff"/><stop offset=".0306" stop-color="#00fdff"/><stop offset=".0408" stop-color="#06fdff"/><stop offset=".0714" stop-color="#26fcff"/><stop offset=".1122" stop-color="#55fcff"/><stop offset=".1531" stop-color="#88fcff"/><stop offset=".1939" stop-color="#c0fcff"/><stop offset=".2347" stop-color="#fffbff"/><stop offset=".2551" stop-color="#ffdee1"/><stop offset=".2857" stop-color="#ffbbbe"/><stop offset=".3367" stop-color="#ff8f92"/><stop offset=".3980" stop-color="#ff6c6e"/><stop offset=".4796" stop-color="#ff4b4d"/><stop offset=".6020" stop-color="#fd2c2d"/><stop offset=".6837" stop-color="#f81d1f"/><stop offset=".7551" stop-color="#f01314"/><stop offset=".8571" stop-color="#dd0809"/><stop offset=".9796" stop-color="#b90000"/><stop offset="1" stop-color="#b80000"/></linearGradient>
<linearGradient id="i47"><stop offset="0" stop-color="#00f2ff"/><stop offset=".0305" stop-color="#00f2ff"/><stop offset=".0611" stop-color="#1cf1ff"/><stop offset=".1120" stop-color="#54f0ff"/><stop offset=".1527" stop-color="#86efff"/><stop offset=".1934" stop-color="#bdeeff"/><stop offset=".2341" stop-color="#faedff"/><stop offset=".2443" stop-color="#ffe3f5"/><stop offset=".2646" stop-color="#ffc9d9"/><stop offset=".2952" stop-color="#ffaab8"/><stop offset=".3461" stop-color="#ff838f"/><stop offset=".4071" stop-color="#ff626c"/><stop offset=".4885" stop-color="#ff444d"/><stop offset=".6107" stop-color="#fd272e"/><stop offset=".6921" stop-color="#f9191f"/><stop offset=".7735" stop-color="#f00f14"/><stop offset=".8855" stop-color="#da0408"/><stop offset="1" stop-color="#b80000"/></linearGradient>
<linearGradient id="i48"><stop offset="0" stop-color="#00e8ff"/><stop offset=".0306" stop-color="#00e7ff"/><stop offset=".0408" stop-color="#06e7ff"/><stop offset=".0714" stop-color="#25e6ff"/><stop offset=".1224" stop-color="#5de4ff"/><stop offset=".1633" stop-color="#8ee3ff"/><stop offset=".2041" stop-color="#c4e1ff"/><stop offset=".2449" stop-color="#ffdefd"/><stop offset=".2653" stop-color="#ffc4e1"/><stop offset=".2959" stop-color="#ffa5bf"/><stop offset=".3469" stop-color="#ff7f94"/><stop offset=".4082" stop-color="#ff5f71"/><stop offset=".4898" stop-color="#ff4250"/><stop offset=".6122" stop-color="#fd2531"/><stop offset=".7755" stop-color="#f20d16"/><stop offset=".8878" stop-color="#df030a"/><stop offset="1" stop-color="#c00001"/></linearGradient>
<linearGradient id="i49"><stop offset="0" stop-color="#00deff"/><stop offset=".0313" stop-color="#00ddff"/><stop offset=".0627" stop-color="#1bdbff"/><stop offset=".1149" stop-color="#51d9ff"/><stop offset=".1567" stop-color="#80d8ff"/><stop offset=".2089" stop-color="#c1d5ff"/><stop offset=".2507" stop-color="#fcd3ff"/><stop offset=".2611" stop-color="#ffc9f3"/><stop offset=".2820" stop-color="#ffb2d9"/><stop offset=".3029" stop-color="#ff9fc3"/><stop offset=".3551" stop-color="#ff7a98"/><stop offset=".4178" stop-color="#ff5b74"/><stop offset=".5013" stop-color="#ff3e53"/><stop offset=".6266" stop-color="#fe2233"/><stop offset=".7833" stop-color="#f50c19"/><stop offset=".8982" stop-color="#e4020c"/><stop offset="1" stop-color="#cd0004"/></linearGradient>
<linearGradient id="i50"><stop offset="0" stop-color="#00d4ff"/><stop offset=".0320" stop-color="#00d3ff"/><stop offset=".0427" stop-color="#06d2ff"/><stop offset=".0747" stop-color="#23d1ff"/><stop offset=".1280" stop-color="#59ceff"/><stop offset=".1707" stop-color="#87ccff"/><stop offset=".2133" stop-color="#bbcaff"/><stop offset=".2560" stop-color="#f3c7ff"/><stop offset=".2667" stop-color="#ffc3fc"/><stop offset=".2880" stop-color="#ffade1"/><stop offset=".3093" stop-color="#ff9aca"/><stop offset=".3627" stop-color="#ff769e"/><stop offset=".4267" stop-color="#ff5779"/><stop offset=".5013" stop-color="#ff3e5a"/><stop offset=".5653" stop-color="#ff2e47"/><stop offset=".6293" stop-color="#fe2238"/><stop offset=".7893" stop-color="#f70c1d"/><stop offset=".9173" stop-color="#e8000e"/><stop offset="1" stop-color="#d70007"/></linearGradient>
<linearGradient id="i51"><stop offset="0" stop-color="#00cbff"/><stop offset=".0328" stop-color="#00c9ff"/><stop offset=".0437" stop-color="#07c9ff"/><stop offset=".0874" stop-color="#2ec7ff"/><stop offset=".1421" stop-color="#63c3ff"/><stop offset=".1858" stop-color="#92c1ff"/><stop offset=".2295" stop-color="#c5beff"/><stop offset=".2732" stop-color="#febaff"/><stop offset=".3169" stop-color="#ff93ce"/><stop offset=".3716" stop-color="#ff70a1"/><stop offset=".4372" stop-color="#ff537c"/><stop offset=".5137" stop-color="#ff3a5d"/><stop offset=".6230" stop-color="#ff233f"/><stop offset=".7541" stop-color="#fb1027"/><stop offset=".9180" stop-color="#ed0012"/><stop offset="1" stop-color="#e0000a"/></linearGradient>
<linearGradient id="i52"><stop offset="0" stop-color="#00c2ff"/><stop offset=".0334" stop-color="#00c0ff"/><stop offset=".0446" stop-color="#06c0ff"/><stop offset=".0891" stop-color="#2cbdff"/><stop offset=".1783" stop-color="#81b7ff"/><stop offset=".2340" stop-color="#bfb3ff"/><stop offset=".2786" stop-color="#f6afff"/><stop offset=".2897" stop-color="#ffabfa"/><stop offset=".3343" stop-color="#ff87ca"/><stop offset=".3900" stop-color="#ff679f"/><stop offset=".4568" stop-color="#ff4b7b"/><stop offset=".5237" stop-color="#ff3861"/><stop offset=".6128" stop-color="#ff2447"/><stop offset=".7242" stop-color="#fd1330"/><stop offset=".9136" stop-color="#f20016"/><stop offset="1" stop-color="#e7000e"/></linearGradient>
<linearGradient id="i53"><stop offset="0" stop-color="#00baff"/><stop offset=".0343" stop-color="#00b8ff"/><stop offset=".0457" stop-color="#07b7ff"/><stop offset=".1029" stop-color="#36b3ff"/><stop offset=".1600" stop-color="#6aafff"/><stop offset=".2057" stop-color="#97acff"/><stop offset=".2514" stop-color="#c9a8ff"/><stop offset=".2971" stop-color="#ffa3ff"/><stop offset=".3429" stop-color="#ff81ce"/><stop offset=".4000" stop-color="#ff62a3"/><stop offset=".4686" stop-color="#ff477e"/><stop offset=".5371" stop-color="#ff3464"/><stop offset=".6286" stop-color="#ff214a"/><stop offset=".7314" stop-color="#fe1234"/><stop offset=".9143" stop-color="#f6001a"/><stop offset="1" stop-color="#ed0012"/></linearGradient>
<linearGradient id="i54"><stop offset="0" stop-color="#00b2ff"/><stop offset=".0351" stop-color="#00afff"/><stop offset=".0468" stop-color="#05afff"/><stop offset=".0936" stop-color="#2aabff"/><stop offset=".1520" stop-color="#5ca7ff"/><stop offset=".1988" stop-color="#87a3ff"/><stop offset=".2573" stop-color="#c39eff"/><stop offset=".3041" stop-color="#f89aff"/><stop offset=".3158" stop-color="#ff95f9"/><stop offset=".3626" stop-color="#ff75cb"/><stop offset=".4094" stop-color="#ff5ea8"/><stop offset=".4795" stop-color="#ff4483"/><stop offset=".5497" stop-color="#ff3167"/><stop offset=".6316" stop-color="#ff2150"/><stop offset=".7368" stop-color="#fe1139"/><stop offset=".9123" stop-color="#f9001f"/><stop offset="1" stop-color="#f20016"/></linearGradient>
<linearGradient id="i55"><stop offset="0" stop-color="#00aaff"/><stop offset=".0360" stop-color="#00a7ff"/><stop offset=".0480" stop-color="#06a6ff"/><stop offset=".1081" stop-color="#34a2ff"/><stop offset=".1682" stop-color="#659dff"/><stop offset=".2162" stop-color="#9199ff"/><stop offset=".3243" stop-color="#ff8dfd"/><stop offset=".3724" stop-color="#ff6fcf"/><stop offset=".4204" stop-color="#ff58ac"/><stop offset=".4925" stop-color="#ff3f86"/><stop offset=".5646" stop-color="#ff2d6a"/><stop offset=".6486" stop-color="#ff1e52"/><stop offset=".7447" stop-color="#ff103d"/><stop offset=".9009" stop-color="#fb0125"/><stop offset="1" stop-color="#f6001a"/></linearGradient>
<linearGradient id="i56"><stop offset="0" stop-color="#00a2ff"/><stop offset=".0369" stop-color="#00a0ff"/><stop offset=".0492" stop-color="#059fff"/><stop offset=".0985" stop-color="#289bff"/><stop offset=".2092" stop-color="#8292ff"/><stop offset=".2708" stop-color="#ba8cff"/><stop offset=".3323" stop-color="#fa86ff"/><stop offset=".3446" stop-color="#ff80f7"/><stop offset=".3938" stop-color="#ff65cb"/><stop offset=".4431" stop-color="#ff50aa"/><stop offset=".5046" stop-color="#ff3c8a"/><stop offset=".5785" stop-color="#ff2a6e"/><stop offset=".6646" stop-color="#ff1b55"/><stop offset=".7631" stop-color="#ff0e40"/><stop offset=".9108" stop-color="#fc0029"/><stop offset="1" stop-color="#f8001f"/></linearGradient>
<linearGradient id="i57"><stop offset="0" stop-color="#009bff"/><stop offset=".0379" stop-color="#0098ff"/><stop offset=".0505" stop-color="#0497ff"/><stop offset=".1136" stop-color="#2f93ff"/><stop offset=".1767" stop-color="#5f8dff"/><stop offset=".2397" stop-color="#9387ff"/><stop offset=".2902" stop-color="#c182ff"/><stop offset=".3533" stop-color="#ff7bff"/><stop offset=".4038" stop-color="#ff60d1"/><stop offset=".4543" stop-color="#ff4caf"/><stop offset=".5174" stop-color="#ff398f"/><stop offset=".5931" stop-color="#ff2772"/><stop offset=".6814" stop-color="#ff1858"/><stop offset=".7697" stop-color="#ff0d45"/><stop offset=".9085" stop-color="#fd002f"/><stop offset="1" stop-color="#fa0024"/></linearGradient>
<linearGradient id="i58"><stop offset="0" stop-color="#0094ff"/><stop offset=".0388" stop-color="#0091ff"/><stop offset=".0518" stop-color="#0590ff"/><stop offset=".1036" stop-color="#278cff"/><stop offset=".1683" stop-color="#5587ff"/><stop offset=".2330" stop-color="#8781ff"/><stop offset=".2977" stop-color="#be7aff"/><stop offset=".3625" stop-color="#fb73ff"/><stop offset=".3754" stop-color="#ff6df6"/><stop offset=".4272" stop-color="#ff55cc"/><stop offset=".4790" stop-color="#ff43ab"/><stop offset=".5437" stop-color="#ff318c"/><stop offset=".6084" stop-color="#ff2474"/><stop offset=".6861" stop-color="#ff175e"/><stop offset=".7767" stop-color="#ff0c4a"/><stop offset=".8932" stop-color="#fe0136"/><stop offset="1" stop-color="#fc0028"/></linearGradient>
<linearGradient id="i59"><stop offset="0" stop-color="#008dff"/><stop offset=".0399" stop-color="#008aff"/><stop offset=".0532" stop-color="#0489ff"/><stop offset=".1329" stop-color="#3783ff"/><stop offset=".2525" stop-color="#8d78ff"/><stop offset=".3056" stop-color="#b972ff"/><stop offset=".3854" stop-color="#ff68fd"/><stop offset=".4252" stop-color="#ff56db"/><stop offset=".4784" stop-color="#ff43b8"/><stop offset=".5449" stop-color="#ff3196"/><stop offset=".6113" stop-color="#ff237d"/><stop offset=".6910" stop-color="#ff1665"/><stop offset=".7841" stop-color="#ff0b4f"/><stop offset=".9037" stop-color="#fe003b"/><stop offset="1" stop-color="#fd002e"/></linearGradient>
<linearGradient id="i60"><stop offset="0" stop-color="#0086ff"/><stop offset=".0411" stop-color="#0083ff"/><stop offset=".0548" stop-color="#0582ff"/><stop offset=".1370" stop-color="#377cff"/><stop offset=".2055" stop-color="#6476ff"/><stop offset=".2740" stop-color="#966fff"/><stop offset=".3425" stop-color="#cd68ff"/><stop offset=".3973" stop-color="#fd61ff"/><stop offset=".4521" stop-color="#ff4bd5"/><stop offset=".5068" stop-color="#ff3ab4"/><stop offset=".5616" stop-color="#ff2d99"/><stop offset=".6301" stop-color="#ff1f7f"/><stop offset=".7123" stop-color="#ff1367"/><stop offset=".7945" stop-color="#ff0954"/><stop offset=".8904" stop-color="#ff0143"/><stop offset="1" stop-color="#fe0033"/></linearGradient>
<linearGradient id="i61"><stop offset="0" stop-color="#0080ff"/><stop offset=".0423" stop-color="#007dff"/><stop offset=".0563" stop-color="#047cff"/><stop offset=".1408" stop-color="#3575ff"/><stop offset=".2113" stop-color="#616fff"/><stop offset=".2817" stop-color="#9268ff"/><stop offset=".3521" stop-color="#c760ff"/><stop offset=".4085" stop-color="#f65aff"/><stop offset=".4225" stop-color="#ff57fc"/><stop offset=".4648" stop-color="#ff47db"/><stop offset=".5211" stop-color="#ff37b9"/><stop offset=".5775" stop-color="#ff299e"/><stop offset=".6479" stop-color="#ff1c83"/><stop offset=".7606" stop-color="#ff0d64"/><stop offset=".8873" stop-color="#ff014a"/><stop offset="1" stop-color="#fe0039"/></linearGradient>
<linearGradient id="i62"><stop offset="0" stop-color="#007aff"/><stop offset=".0436" stop-color="#0076ff"/><stop offset=".0582" stop-color="#0575ff"/><stop offset=".1600" stop-color="#3d6dff"/><stop offset=".2327" stop-color="#6a67ff"/><stop offset=".3055" stop-color="#9b5fff"/><stop offset=".3782" stop-color="#d058ff"/><stop offset=".4364" stop-color="#fe51ff"/><stop offset=".4800" stop-color="#ff42df"/><stop offset=".5382" stop-color="#ff32bc"/><stop offset=".5964" stop-color="#ff25a1"/><stop offset=".6545" stop-color="#ff1b8b"/><stop offset=".7564" stop-color="#ff0d6d"/><stop offset=".8873" stop-color="#ff0051"/><stop offset="1" stop-color="#ff003f"/></linearGradient>
<linearGradient id="i63"><stop offset="0" stop-color="#0074ff"/><stop offset=".0449" stop-color="#0070ff"/><stop offset=".0599" stop-color="#046fff"/><stop offset=".1498" stop-color="#3368ff"/><stop offset=".2996" stop-color="#8d5aff"/><stop offset=".3745" stop-color="#c053ff"/><stop offset=".4494" stop-color="#f84aff"/><stop offset=".4644" stop-color="#ff47fa"/><stop offset=".5094" stop-color="#ff39db"/><stop offset=".5543" stop-color="#ff2ec1"/><stop offset=".6142" stop-color="#ff22a5"/><stop offset=".6742" stop-color="#ff188f"/><stop offset=".7640" stop-color="#ff0c74"/><stop offset=".8839" stop-color="#ff005a"/><stop offset="1" stop-color="#ff0046"/></linearGradient>
<linearGradient id="i64"><stop offset="0" stop-color="#006eff"/><stop offset=".0463" stop-color="#006aff"/><stop offset=".0618" stop-color="#0569ff"/><stop offset=".1699" stop-color="#3b61ff"/><stop offset=".3243" stop-color="#9552ff"/><stop offset=".4015" stop-color="#c84aff"/><stop offset=".4788" stop-color="#ff41fe"/><stop offset=".5251" stop-color="#ff34de"/><stop offset=".5714" stop-color="#ff29c5"/><stop offset=".6332" stop-color="#ff1ea8"/><stop offset=".6950" stop-color="#ff1492"/><stop offset=".7876" stop-color="#ff0977"/><stop offset=".8803" stop-color="#ff0062"/><stop offset="1" stop-color="#ff004d"/></linearGradient>
<linearGradient id="i65"><stop offset="0" stop-color="#0068ff"/><stop offset=".0478" stop-color="#0065ff"/><stop offset=".0637" stop-color="#0464ff"/><stop offset=".1594" stop-color="#315cff"/><stop offset=".3187" stop-color="#884eff"/><stop offset=".4143" stop-color="#c344ff"/><stop offset=".4940" stop-color="#f93bff"/><stop offset=".5100" stop-color="#ff38f9"/><stop offset=".5578" stop-color="#ff2cdb"/><stop offset=".6056" stop-color="#ff22c2"/><stop offset=".6534" stop-color="#ff1aad"/><stop offset=".7171" stop-color="#ff1196"/><stop offset=".7968" stop-color="#ff087e"/><stop offset=".8765" stop-color="#ff006b"/><stop offset="1" stop-color="#ff0054"/></linearGradient>
<linearGradient id="i66"><stop offset="0" stop-color="#0063ff"/><stop offset=".0496" stop-color="#005fff"/><stop offset=".0661" stop-color="#055eff"/><stop offset=".1818" stop-color="#3955ff"/><stop offset=".3471" stop-color="#9046ff"/><stop offset=".4298" stop-color="#c13eff"/><stop offset=".5124" stop-color="#f635ff"/><stop offset=".5289" stop-color="#ff32fd"/><stop offset=".6116" stop-color="#ff21cd"/><stop offset=".6612" stop-color="#ff18b7"/><stop offset=".7273" stop-color="#ff0f9e"/><stop offset=".7934" stop-color="#ff088a"/><stop offset=".8760" stop-color="#ff0075"/><stop offset="1" stop-color="#ff005d"/></linearGradient>
<linearGradient id="i67"><stop offset="0" stop-color="#005eff"/><stop offset=".0513" stop-color="#005aff"/><stop offset=".0684" stop-color="#0459ff"/><stop offset=".1880" stop-color="#3750ff"/><stop offset=".2906" stop-color="#6847ff"/><stop offset=".3761" stop-color="#953fff"/><stop offset=".4615" stop-color="#c637ff"/><stop offset=".5470" stop-color="#fb2dff"/><stop offset=".5641" stop-color="#ff2af8"/><stop offset=".6496" stop-color="#ff1aca"/><stop offset=".7521" stop-color="#ff0ca2"/><stop offset=".8718" stop-color="#ff0080"/><stop offset="1" stop-color="#ff0065"/></linearGradient>
<linearGradient id="i68"><stop offset="0" stop-color="#0058ff"/><stop offset=".0533" stop-color="#0055ff"/><stop offset=".0711" stop-color="#0453ff"/><stop offset=".1956" stop-color="#374aff"/><stop offset=".3733" stop-color="#8b3bff"/><stop offset=".4800" stop-color="#c431ff"/><stop offset=".5689" stop-color="#f827ff"/><stop offset=".5867" stop-color="#ff25fb"/><stop offset=".6756" stop-color="#ff15cd"/><stop offset=".7644" stop-color="#ff0aab"/><stop offset=".8711" stop-color="#ff008b"/><stop offset="1" stop-color="#ff006f"/></linearGradient>
<linearGradient id="i69"><stop offset="0" stop-color="#0053ff"/><stop offset=".0553" stop-color="#0050ff"/><stop offset=".0737" stop-color="#034fff"/><stop offset=".2212" stop-color="#3d44ff"/><stop offset=".4240" stop-color="#9933ff"/><stop offset=".5161" stop-color="#c92aff"/><stop offset=".6083" stop-color="#fc20ff"/><stop offset=".6267" stop-color="#ff1df7"/><stop offset=".7005" stop-color="#ff12d2"/><stop offset=".7926" stop-color="#ff07af"/><stop offset=".8664" stop-color="#ff0099"/><stop offset="1" stop-color="#ff0079"/></linearGradient>
<linearGradient id="i70"><stop offset="0" stop-color="#004eff"/><stop offset=".0574" stop-color="#004bff"/><stop offset=".0766" stop-color="#0449ff"/><stop offset=".2297" stop-color="#3d3eff"/><stop offset=".4211" stop-color="#8f2fff"/><stop offset=".5359" stop-color="#c624ff"/><stop offset=".6316" stop-color="#f91aff"/><stop offset=".6507" stop-color="#ff18fa"/><stop offset=".7273" stop-color="#ff0dd5"/><stop offset=".8038" stop-color="#ff05b8"/><stop offset=".8612" stop-color="#ff00a6"/><stop offset="1" stop-color="#ff0083"/></linearGradient>
<linearGradient id="i71"><stop offset="0" stop-color="#004aff"/><stop offset=".0597" stop-color="#0046ff"/><stop offset=".0796" stop-color="#0345ff"/><stop offset=".2388" stop-color="#3b3aff"/><stop offset=".4577" stop-color="#9428ff"/><stop offset=".5771" stop-color="#cb1dff"/><stop offset=".6766" stop-color="#fe13ff"/><stop offset=".7562" stop-color="#ff09db"/><stop offset=".8159" stop-color="#ff03c4"/><stop offset=".8955" stop-color="#ff00aa"/><stop offset="1" stop-color="#ff008f"/></linearGradient>
<linearGradient id="i72"><stop offset="0" stop-color="#0045ff"/><stop offset=".0625" stop-color="#0041ff"/><stop offset=".0833" stop-color="#0440ff"/><stop offset=".2708" stop-color="#4333ff"/><stop offset=".5000" stop-color="#9b21ff"/><stop offset=".7083" stop-color="#fb0eff"/><stop offset=".7292" stop-color="#ff0cf9"/><stop offset=".8333" stop-color="#ff01ce"/><stop offset=".9167" stop-color="#ff00b3"/><stop offset="1" stop-color="#ff009d"/></linearGradient>
<linearGradient id="i73"><stop offset="0" stop-color="#0041ff"/><stop offset=".0652" stop-color="#003dff"/><stop offset=".0870" stop-color="#033cff"/><stop offset=".2826" stop-color="#412fff"/><stop offset=".5217" stop-color="#981dff"/><stop offset=".6522" stop-color="#ce12ff"/><stop offset=".7609" stop-color="#ff08ff"/><stop offset=".8261" stop-color="#ff01e3"/><stop offset=".8696" stop-color="#ff00d3"/><stop offset="1" stop-color="#ff00ab"/></linearGradient>
<linearGradient id="i74"><stop offset="0" stop-color="#003cff"/><stop offset=".0686" stop-color="#0038ff"/><stop offset=".0914" stop-color="#0437ff"/><stop offset=".2971" stop-color="#412aff"/><stop offset=".5486" stop-color="#9718ff"/><stop offset=".6857" stop-color="#cc0dff"/><stop offset=".8000" stop-color="#fc03ff"/><stop offset=".8229" stop-color="#ff01f8"/><stop offset=".9143" stop-color="#ff00d6"/><stop offset="1" stop-color="#ff00bb"/></linearGradient>
<linearGradient id="i75"><stop offset="0" stop-color="#0038ff"/><stop offset=".0719" stop-color="#0034ff"/><stop offset=".0958" stop-color="#0333ff"/><stop offset=".3114" stop-color="#3f26ff"/><stop offset=".5749" stop-color="#9314ff"/><stop offset=".7186" stop-color="#c709ff"/><stop offset=".8383" stop-color="#f600ff"/><stop offset=".8623" stop-color="#ff00fe"/><stop offset="1" stop-color="#ff00cd"/></linearGradient>
<linearGradient id="i76"><stop offset="0" stop-color="#0034ff"/><stop offset=".0755" stop-color="#0030ff"/><stop offset=".1006" stop-color="#042fff"/><stop offset=".3522" stop-color="#4620ff"/><stop offset=".6289" stop-color="#9a0eff"/><stop offset=".8050" stop-color="#d700ff"/><stop offset=".9057" stop-color="#fd00ff"/><stop offset="1" stop-color="#ff00df"/></linearGradient>
<linearGradient id="i77"><stop offset="0" stop-color="#0030ff"/><stop offset=".0795" stop-color="#002cff"/><stop offset=".1060" stop-color="#032bff"/><stop offset=".3179" stop-color="#361fff"/><stop offset=".5563" stop-color="#7711ff"/><stop offset=".7947" stop-color="#c100ff"/><stop offset=".9536" stop-color="#f800ff"/><stop offset=".9801" stop-color="#ff00fd"/><stop offset="1" stop-color="#ff00f6"/></linearGradient>
<linearGradient id="i78"><stop offset="0" stop-color="#002cff"/><stop offset=".0845" stop-color="#0028ff"/><stop offset=".1127" stop-color="#0427ff"/><stop offset=".3662" stop-color="#3d1aff"/><stop offset=".5915" stop-color="#760dff"/><stop offset=".7887" stop-color="#ae00ff"/><stop offset="1" stop-color="#f000ff"/></linearGradient>
<linearGradient id="i79"><stop offset="0" stop-color="#0028ff"/><stop offset=".0896" stop-color="#0024ff"/><stop offset=".1194" stop-color="#0323ff"/><stop offset=".3284" stop-color="#2e19ff"/><stop offset=".5672" stop-color="#650cff"/><stop offset=".7761" stop-color="#9a00ff"/><stop offset="1" stop-color="#d900ff"/></linearGradient>
<linearGradient id="i80"><stop offset="0" stop-color="#0025ff"/><stop offset=".0960" stop-color="#0021ff"/><stop offset=".2880" stop-color="#2218ff"/><stop offset=".5440" stop-color="#570cff"/><stop offset=".7680" stop-color="#8900ff"/><stop offset="1" stop-color="#c400ff"/></linearGradient>
<linearGradient id="i81"><stop offset="0" stop-color="#0021ff"/><stop offset=".1026" stop-color="#001dff"/><stop offset=".1368" stop-color="#031cff"/><stop offset=".2393" stop-color="#1517ff"/><stop offset=".5128" stop-color="#470bff"/><stop offset=".7521" stop-color="#7800ff"/><stop offset="1" stop-color="#af00ff"/></linearGradient>
<linearGradient id="i82"><stop offset="0" stop-color="#001dff"/><stop offset=".1101" stop-color="#0019ff"/><stop offset=".1835" stop-color="#0917ff"/><stop offset=".6972" stop-color="#6201ff"/><stop offset="1" stop-color="#9e00ff"/></linearGradient>
<linearGradient id="i83"><stop offset="0" stop-color="#001aff"/><stop offset=".1188" stop-color="#0016ff"/><stop offset=".1584" stop-color="#0315ff"/><stop offset=".7129" stop-color="#5900ff"/><stop offset="1" stop-color="#8c00ff"/></linearGradient>
<linearGradient id="i84"><stop offset="0" stop-color="#0017ff"/><stop offset=".1304" stop-color="#0013ff"/><stop offset=".1739" stop-color="#0411ff"/><stop offset=".6522" stop-color="#4501ff"/><stop offset="1" stop-color="#7b00ff"/></linearGradient>
<linearGradient id="i85"><stop offset="0" stop-color="#0014ff"/><stop offset=".1429" stop-color="#000fff"/><stop offset=".1905" stop-color="#030eff"/><stop offset=".6190" stop-color="#3701ff"/><stop offset="1" stop-color="#6b00ff"/></linearGradient>
<linearGradient id="i86"><stop offset="0" stop-color="#0010ff"/><stop offset=".1600" stop-color="#000cff"/><stop offset=".2133" stop-color="#040bff"/><stop offset=".5867" stop-color="#2b00ff"/><stop offset="1" stop-color="#5b00ff"/></linearGradient>
<linearGradient id="i87"><stop offset="0" stop-color="#000dff"/><stop offset=".1791" stop-color="#0009ff"/><stop offset=".2388" stop-color="#0308ff"/><stop offset=".5373" stop-color="#1f00ff"/><stop offset="1" stop-color="#4d00ff"/></linearGradient>
<linearGradient id="i88"><stop offset="0" stop-color="#000aff"/><stop offset=".2034" stop-color="#0006ff"/><stop offset=".2712" stop-color="#0404ff"/><stop offset=".4746" stop-color="#1400ff"/><stop offset="1" stop-color="#4000ff"/></linearGradient>
<linearGradient id="i89"><stop offset="0" stop-color="#0006ff"/><stop offset=".2449" stop-color="#0002ff"/><stop offset="1" stop-color="#3300ff"/></linearGradient>
<linearGradient id="i90"><stop offset="0" stop-color="#0003ff"/><stop offset=".3077" stop-color="#0200ff"/><stop offset="1" stop-color="#2600ff"/></linearGradient>
<linearGradient id="i91"><stop offset="0" stop-color="#0000ff"/><stop offset=".2759" stop-color="#0000ff"/><stop offset="1" stop-color="#1a00ff"/></linearGradient>
<clipPath id="cpl"><path d="M1330.1 672.8C1328.6 673.1 1323.7 674.5 1321.2 674.9C1318.8 675.3 1317.3 675.4 1315.4 675.2C1313.5 675.0 1311.5 674.6 1309.7 674.0C1307.9 673.3 1307.1 673.4 1304.4 671.1C1301.7 668.8 1297.4 665.1 1293.3 660.0C1289.2 654.9 1284.1 647.6 1279.5 640.7C1274.9 633.8 1270.3 626.3 1265.7 618.5C1261.1 610.6 1256.5 602.3 1251.8 593.6C1247.2 584.8 1242.6 576.1 1238.0 566.0C1233.4 555.9 1228.8 544.3 1224.2 532.8C1219.5 521.3 1214.9 509.7 1210.3 496.8C1205.7 483.9 1201.0 469.4 1196.5 455.3C1191.9 441.2 1187.7 432.3 1183.1 412.4C1178.5 392.4 1171.8 361.3 1168.8 335.8C1165.8 310.4 1164.1 282.7 1165.0 259.6C1165.8 236.5 1167.8 213.3 1173.8 197.1C1179.9 180.9 1192.3 170.1 1201.4 162.5C1210.6 155.0 1219.0 153.2 1229.0 151.7C1238.9 150.3 1249.3 151.8 1260.9 153.7C1272.5 155.6 1286.8 159.2 1298.8 163.2C1310.8 167.2 1321.6 172.4 1332.7 177.6C1343.8 182.8 1354.5 188.4 1365.3 194.4C1376.1 200.5 1386.7 207.3 1397.4 214.1C1408.0 220.9 1418.6 227.9 1429.2 235.0C1439.7 242.2 1450.3 249.5 1460.9 256.9C1471.4 264.3 1482.1 271.9 1492.6 279.5C1503.2 287.0 1513.7 294.7 1524.2 302.3C1534.7 309.9 1545.3 317.6 1555.6 325.2C1566.0 332.7 1576.3 340.3 1586.4 347.8C1596.6 355.2 1606.6 362.6 1616.3 369.8C1626.1 377.0 1635.7 384.1 1645.0 390.9C1654.3 397.7 1663.4 404.3 1672.0 410.6C1680.6 417.0 1688.9 423.1 1696.6 428.8C1704.2 434.4 1711.3 439.6 1718.0 444.5C1724.7 449.4 1731.0 454.1 1736.8 458.3C1742.5 462.5 1747.7 466.3 1752.4 469.7C1757.1 473.2 1761.3 476.3 1765.1 479.1C1768.9 481.9 1772.2 484.3 1775.2 486.6C1778.2 488.8 1780.9 490.7 1783.3 492.5C1785.7 494.2 1787.8 495.8 1789.8 497.2C1791.7 498.7 1793.5 500.0 1795.2 501.2C1796.8 502.4 1798.9 504.0 1799.6 504.5Z"/></clipPath>
<clipPath id="cpt"><path d="M1729.5 472.4 L1427.8 295.5 L1294.6 649.2Z"/></clipPath>
<filter id="vb" x="-2%" y="-2%" width="104%" height="104%"><feGaussianBlur stdDeviation="2.5 1.8"/></filter>
<linearGradient id="p0"><stop offset="0" stop-color="#6c9e00"/><stop offset=".8341" stop-color="#9e9e00"/><stop offset="1" stop-color="#9e9400"/></linearGradient>
<linearGradient id="p1"><stop offset="0" stop-color="#6e9e00"/><stop offset=".7962" stop-color="#9d9e00"/><stop offset="1" stop-color="#9e9200"/></linearGradient>
<linearGradient id="p2"><stop offset="0" stop-color="#6f9e00"/><stop offset=".7583" stop-color="#9d9e00"/><stop offset="1" stop-color="#9e9100"/></linearGradient>
<linearGradient id="p3"><stop offset="0" stop-color="#709e00"/><stop offset=".7583" stop-color="#9e9e00"/><stop offset="1" stop-color="#9e9000"/></linearGradient>
<linearGradient id="p4"><stop offset="0" stop-color="#719e00"/><stop offset=".7204" stop-color="#9d9e00"/><stop offset="1" stop-color="#9e8e00"/></linearGradient>
<linearGradient id="p5"><stop offset="0" stop-color="#729e01"/><stop offset=".7204" stop-color="#9e9d00"/><stop offset="1" stop-color="#9e8d00"/></linearGradient>
<linearGradient id="p6"><stop offset="0" stop-color="#749e01"/><stop offset=".6825" stop-color="#9e9e00"/><stop offset="1" stop-color="#9e8b00"/></linearGradient>
<linearGradient id="p7"><stop offset="0" stop-color="#759e02"/><stop offset=".6445" stop-color="#9d9e00"/><stop offset="1" stop-color="#9e8a00"/></linearGradient>
<linearGradient id="p8"><stop offset="0" stop-color="#769e03"/><stop offset=".6445" stop-color="#9e9e00"/><stop offset="1" stop-color="#9e8900"/></linearGradient>
<linearGradient id="p9"><stop offset="0" stop-color="#779e03"/><stop offset=".6066" stop-color="#9e9e00"/><stop offset="1" stop-color="#9e8700"/></linearGradient>
<linearGradient id="p10"><stop offset="0" stop-color="#799e04"/><stop offset=".5687" stop-color="#9d9e00"/><stop offset="1" stop-color="#9e8600"/></linearGradient>
<linearGradient id="p11"><stop offset="0" stop-color="#7a9e05"/><stop offset=".5687" stop-color="#9e9e00"/><stop offset="1" stop-color="#9e8500"/></linearGradient>
<linearGradient id="p12"><stop offset="0" stop-color="#7b9e05"/><stop offset=".5308" stop-color="#9e9e00"/><stop offset="1" stop-color="#9e8300"/></linearGradient>
<linearGradient id="p13"><stop offset="0" stop-color="#7d9e06"/><stop offset=".5308" stop-color="#9e9d00"/><stop offset="1" stop-color="#9e8200"/></linearGradient>
<linearGradient id="p14"><stop offset="0" stop-color="#7e9e07"/><stop offset=".4929" stop-color="#9e9e00"/><stop offset="1" stop-color="#9e8100"/></linearGradient>
<linearGradient id="p15"><stop offset="0" stop-color="#809e08"/><stop offset=".4550" stop-color="#9d9e01"/><stop offset="1" stop-color="#9e7f00"/></linearGradient>
<linearGradient id="p16"><stop offset="0" stop-color="#819e08"/><stop offset=".4550" stop-color="#9e9d02"/><stop offset="1" stop-color="#9e7e00"/></linearGradient>
<linearGradient id="p17"><stop offset="0" stop-color="#829e09"/><stop offset=".4171" stop-color="#9e9e03"/><stop offset="1" stop-color="#9e7d00"/></linearGradient>
<linearGradient id="p18"><stop offset="0" stop-color="#849e0a"/><stop offset=".4171" stop-color="#9e9d04"/><stop offset="1" stop-color="#9e7b00"/></linearGradient>
<linearGradient id="p19"><stop offset="0" stop-color="#859e0b"/><stop offset=".3791" stop-color="#9e9d05"/><stop offset="1" stop-color="#9e7a00"/></linearGradient>
<linearGradient id="p20"><stop offset="0" stop-color="#879e0b"/><stop offset=".3412" stop-color="#9e9e07"/><stop offset="1" stop-color="#9e7900"/></linearGradient>
<linearGradient id="p21"><stop offset="0" stop-color="#889e0c"/><stop offset=".3412" stop-color="#9e9d08"/><stop offset="1" stop-color="#9e7800"/></linearGradient>
<linearGradient id="p22"><stop offset="0" stop-color="#8a9e0d"/><stop offset=".3033" stop-color="#9e9e09"/><stop offset="1" stop-color="#9e7600"/></linearGradient>
<linearGradient id="p23"><stop offset="0" stop-color="#8b9e0e"/><stop offset=".2654" stop-color="#9e9e0a"/><stop offset="1" stop-color="#9e7500"/></linearGradient>
<linearGradient id="p24"><stop offset="0" stop-color="#8d9e0f"/><stop offset=".2654" stop-color="#9e9d0b"/><stop offset="1" stop-color="#9e7400"/></linearGradient>
<linearGradient id="p25"><stop offset="0" stop-color="#8e9e10"/><stop offset=".2275" stop-color="#9e9e0c"/><stop offset=".6066" stop-color="#9e8606"/><stop offset="1" stop-color="#9e7301"/></linearGradient>
<linearGradient id="p26"><stop offset="0" stop-color="#909e10"/><stop offset=".2275" stop-color="#9e9c0d"/><stop offset=".6066" stop-color="#9e8507"/><stop offset="1" stop-color="#9e7101"/></linearGradient>
<linearGradient id="p27"><stop offset="0" stop-color="#929e11"/><stop offset=".1896" stop-color="#9e9d0f"/><stop offset=".5687" stop-color="#9e8508"/><stop offset="1" stop-color="#9e7002"/></linearGradient>
<linearGradient id="p28"><stop offset="0" stop-color="#939e12"/><stop offset=".1517" stop-color="#9e9e10"/><stop offset=".5308" stop-color="#9e8609"/><stop offset="1" stop-color="#9e6f02"/></linearGradient>
<linearGradient id="q0"><stop offset="0" stop-color="#b4ff00"/><stop offset="1" stop-color="#baff00"/></linearGradient>
<linearGradient id="q1"><stop offset="0" stop-color="#b6ff00"/><stop offset="1" stop-color="#c1ff00"/></linearGradient>
<linearGradient id="q2"><stop offset="0" stop-color="#b8ff01"/><stop offset="1" stop-color="#c8ff00"/></linearGradient>
<linearGradient id="q3"><stop offset="0" stop-color="#baff02"/><stop offset="1" stop-color="#cfff00"/></linearGradient>
<linearGradient id="q4"><stop offset="0" stop-color="#bcff03"/><stop offset="1" stop-color="#d6ff00"/></linearGradient>
<linearGradient id="q5"><stop offset="0" stop-color="#beff04"/><stop offset="1" stop-color="#deff00"/></linearGradient>
<linearGradient id="q6"><stop offset="0" stop-color="#c0ff05"/><stop offset="1" stop-color="#e5ff00"/></linearGradient>
<linearGradient id="q7"><stop offset="0" stop-color="#c2ff07"/><stop offset="1" stop-color="#edff00"/></linearGradient>
<linearGradient id="q8"><stop offset="0" stop-color="#c4ff08"/><stop offset="1" stop-color="#f5ff00"/></linearGradient>
<linearGradient id="q9"><stop offset="0" stop-color="#c6ff09"/><stop offset="1" stop-color="#fdff00"/></linearGradient>
<linearGradient id="q10"><stop offset="0" stop-color="#c8ff0a"/><stop offset=".8525" stop-color="#fcff00"/><stop offset="1" stop-color="#fff900"/></linearGradient>
<linearGradient id="q11"><stop offset="0" stop-color="#caff0b"/><stop offset=".7879" stop-color="#feff00"/><stop offset="1" stop-color="#fff200"/></linearGradient>
<linearGradient id="q12"><stop offset="0" stop-color="#cdff0c"/><stop offset=".6713" stop-color="#fdff02"/><stop offset="1" stop-color="#ffea00"/></linearGradient>
<linearGradient id="q13"><stop offset="0" stop-color="#cfff0e"/><stop offset=".6234" stop-color="#ffff04"/><stop offset="1" stop-color="#ffe300"/></linearGradient>
<linearGradient id="q14"><stop offset="0" stop-color="#d1ff0f"/><stop offset=".5366" stop-color="#feff06"/><stop offset="1" stop-color="#ffdc00"/></linearGradient>
<linearGradient id="q15"><stop offset="0" stop-color="#d4ff10"/><stop offset=".5029" stop-color="#fffd07"/><stop offset="1" stop-color="#ffd600"/></linearGradient>
<linearGradient id="q16"><stop offset="0" stop-color="#d6ff11"/><stop offset=".4301" stop-color="#ffff09"/><stop offset="1" stop-color="#ffcf00"/></linearGradient>
<linearGradient id="q17"><stop offset="0" stop-color="#d8ff13"/><stop offset=".3673" stop-color="#fdff0b"/><stop offset="1" stop-color="#ffc900"/></linearGradient>
<linearGradient id="q18"><stop offset="0" stop-color="#dbff14"/><stop offset=".3478" stop-color="#fffe0c"/><stop offset=".6570" stop-color="#ffdf05"/><stop offset="1" stop-color="#ffc300"/></linearGradient>
<linearGradient id="q19"><stop offset="0" stop-color="#ddff15"/><stop offset=".2977" stop-color="#ffff0f"/><stop offset=".6326" stop-color="#ffdd06"/><stop offset="1" stop-color="#ffbe00"/></linearGradient>
<linearGradient id="q20"><stop offset="0" stop-color="#e0ff17"/><stop offset=".2977" stop-color="#fffd10"/><stop offset=".6326" stop-color="#ffda07"/><stop offset="1" stop-color="#ffbc00"/></linearGradient>
<linearGradient id="q21"><stop offset="0" stop-color="#e2ff18"/><stop offset=".2605" stop-color="#fffe12"/><stop offset=".5953" stop-color="#ffdb09"/><stop offset="1" stop-color="#ffba00"/></linearGradient>
<linearGradient id="q22"><stop offset="0" stop-color="#e5ff19"/><stop offset=".2233" stop-color="#feff14"/><stop offset=".5953" stop-color="#ffd90a"/><stop offset="1" stop-color="#ffb801"/></linearGradient>
<linearGradient id="q23"><stop offset="0" stop-color="#e7ff1b"/><stop offset=".2233" stop-color="#fffd16"/><stop offset=".5953" stop-color="#ffd70b"/><stop offset="1" stop-color="#ffb602"/></linearGradient>
<linearGradient id="q24"><stop offset="0" stop-color="#eaff1c"/><stop offset=".1860" stop-color="#ffff18"/><stop offset=".5581" stop-color="#ffd80d"/><stop offset="1" stop-color="#ffb403"/></linearGradient>
<linearGradient id="q25"><stop offset="0" stop-color="#ecff1e"/><stop offset=".1488" stop-color="#feff1a"/><stop offset=".1860" stop-color="#fffc19"/><stop offset=".5581" stop-color="#ffd50e"/><stop offset="1" stop-color="#ffb204"/></linearGradient>
<clipPath id="cpi"><rect x="1697" y="138" width="211" height="199.5"/></clipPath>
<clipPath id="cpj"><path d="M1697.0 157.9 L1908.0 316.4 L1908.0 361.5 L1697.0 361.5Z"/></clipPath>
<filter id="vb2" x="-2%" y="-5%" width="104%" height="110%"><feGaussianBlur stdDeviation="0 3"/></filter>
<linearGradient id="g58" x1="0" y1="0" x2="0" y2="1"><stop offset="0" stop-color="#4a4a4a"/><stop offset="0.5" stop-color="#383838"/><stop offset="1" stop-color="#262626"/></linearGradient>
<linearGradient id="g59" x1="0" y1="0" x2="0" y2="1"><stop offset="0" stop-color="#a2a2a2"/><stop offset="0.5" stop-color="#808080"/><stop offset="1" stop-color="#5e5e5e"/></linearGradient>
<linearGradient id="g60" x1="0" y1="0" x2="0" y2="1"><stop offset="0" stop-color="#6e6e6e"/><stop offset="1" stop-color="#9a9a9a"/></linearGradient>
<linearGradient id="g61" x1="0" y1="0" x2="0" y2="1"><stop offset="0" stop-color="#505050"/><stop offset="1" stop-color="#3a3a3a"/></linearGradient>
<linearGradient id="g62" x1="0" y1="0" x2="0" y2="1"><stop offset="0" stop-color="#b0b0b0"/><stop offset="1" stop-color="#7c7c7c"/></linearGradient>
<linearGradient id="g63" x1="0" y1="0" x2="0" y2="1"><stop offset="0" stop-color="#3c3c3c"/><stop offset="1" stop-color="#282828"/></linearGradient>
<linearGradient id="g64" x1="0" y1="0" x2="0" y2="1"><stop offset="0" stop-color="#d0d0d0"/><stop offset="0.5" stop-color="#b0b0b0"/><stop offset="0.52" stop-color="#8c8c8c"/><stop offset="1" stop-color="#a0a0a0"/></linearGradient>
<linearGradient id="g65" x1="0" y1="0" x2="0" y2="1"><stop offset="0" stop-color="#c8c8c8"/><stop offset="1" stop-color="#9a9a9a"/></linearGradient>
<linearGradient id="g66" x1="0" y1="0" x2="0" y2="1"><stop offset="0" stop-color="#2c2c2c"/><stop offset="1" stop-color="#404040"/></linearGradient>
<linearGradient id="g67" x1="0" y1="0" x2="1" y2="0"><stop offset="0" stop-color="#2a7aa6"/><stop offset="0.4" stop-color="#2d96ba"/><stop offset="1" stop-color="#2e98bc"/></linearGradient>
</defs>
<rect x="0" y="0" width="1920" height="1048" fill="#323232" />
<rect x="0" y="0" width="1920" height="23" fill="#63b0d8" />
<rect x="0" y="23" width="1920" height="66" fill="#222222" />
<rect x="0" y="89" width="1920" height="890" fill="#222222" />
<rect x="1" y="89" width="1919" height="890" fill="#323232" />
<rect x="1" y="88.6" width="1919" height="1" fill="#383838" />
<g shape-rendering="crispEdges">
<rect x="2" y="3" width="16" height="16" fill="#1a1a1a" />
<rect x="2" y="3" width="6" height="6" fill="#a02020" />
<rect x="12" y="3" width="6" height="6" fill="#2a8a2a" />
<rect x="2" y="13" width="6" height="6" fill="#7a2a7a" />
<rect x="12" y="13" width="6" height="6" fill="#a03030" />
</g>
<text x="10" y="17" font-size="16" fill="#000" text-anchor="middle" stroke="#fff" stroke-width="2.2" paint-order="stroke" font-weight="bold">5</text>
<text x="959.5" y="17" font-size="14.5" fill="#1e2a38" text-anchor="middle" textLength="408" lengthAdjust="spacingAndGlyphs" >CalMAN 5 CalMAN Ultimate for Business 235 Days Remaining</text>
<rect x="1828" y="11" width="8" height="2" fill="#111" shape-rendering="crispEdges"/>
<path d="M1853.5 7.5h8v6h-8z M1856.5 7.5v-3h8v6h-3" fill="none" stroke="#1a1a1a" stroke-width="1.2" shape-rendering="crispEdges"/>
<rect x="1872" y="0" width="45" height="19" fill="#c75050" shape-rendering="crispEdges"/>
<path d="M1891 5.5l8 8M1899 5.5l-8 8" stroke="#fff" stroke-width="2" fill="none"/>
<rect x="190" y="36" width="1730" height="4" fill="url(#g1)" />
<rect x="190" y="35.3" width="1730" height="5.4" fill="url(#g1)" opacity="0.45"/>
<path d="M0.5 23 H182.5 V48 Q182.5 52 178.5 52 H4.5 Q0.5 52 0.5 48 Z" fill="url(#g2)" stroke="#7a1518" stroke-width="1"/>
<g filter="url(#ts)" font-weight="bold">
<text x="5.5" y="45.8" font-size="29" fill="url(#g3)" text-anchor="start" textLength="118" lengthAdjust="spacingAndGlyphs" >CalMAN</text>
<text x="127.8" y="45.8" font-size="29" fill="url(#g3)" text-anchor="start" textLength="18.5" lengthAdjust="spacingAndGlyphs" >5</text>
</g>
<path d="M90 30.5l3 1.2l-2.4 3.6l2.6 2l-0.6 3.4M90.6 35.3l-3 1l-1.8 3.2M91.6 32l3 1.5" stroke="#a01015" stroke-width="1.5" fill="none" stroke-linecap="round"/><circle cx="92.6" cy="28.6" r="1.4" fill="#a01015"/>
<circle cx="166" cy="37.5" r="10" fill="url(#g4)"/>
<path d="M161 35.5h10l-5 5.5z" fill="#fff"/>
<path d="M0 58.5 H22 Q26.5 58.5 26.5 63 V81 Q26.5 85.5 22 85.5 H0 Z" fill="url(#g5)" stroke="#c8c8c8" stroke-width="1"/>
<circle cx="13" cy="72.5" r="10" fill="url(#g6)"/>
<path d="M10 66.5l5.5 5.5l-5.5 5.5z" fill="#fff"/>
<path d="M29.5 89 V62.5 Q29.5 58.5 33.5 58.5 H116.5 Q120.5 58.5 120.5 62.5 V89" fill="url(#g7)" stroke="#6e6e6e" stroke-width="1"/>
<path d="M87.5 59v30" stroke="#6e6e6e" stroke-width="1"/>
<text x="35" y="78.3" font-size="12" fill="#f0f0f0" text-anchor="start" textLength="47" lengthAdjust="spacingAndGlyphs" >History 1</text>
<circle cx="103" cy="75" r="10" fill="url(#g8)"/>
<path d="M100 75.5h6M103 72.5v6" stroke="#8a8a8a" stroke-width="1"/>
<path d="M1353.5 88 V62 Q1353.5 58 1357.5 58 H1503 Q1507 58 1507 62 V88 Z" fill="url(#g9)"/>
<path d="M1353.5 88 V62 Q1353.5 58 1357.5 58 H1359.0 V88 Z" fill="#10e010"/>
<circle cx="1452" cy="73" r="10" fill="url(#g10)"/>
<path d="M1447.5 71h9l-4.5 5z" fill="#fff"/>
<text x="1361.5" y="70" font-size="11" fill="#f4f4f4" text-anchor="start" textLength="66" lengthAdjust="spacingAndGlyphs" >X-Rite i1Pro 2</text>
<text x="1361.5" y="83.7" font-size="11" fill="#f4f4f4" text-anchor="start" textLength="77.5" lengthAdjust="spacingAndGlyphs" >LCD Direct View</text>
<path d="M1471.5 61v27" stroke="#3a3a3a" stroke-width="1"/>
<circle cx="1492" cy="73" r="12.5" fill="#0000ff" stroke="#fff" stroke-width="1"/>
<text x="1492" y="76" font-size="9.5" fill="#fff" text-anchor="middle" textLength="14.5" lengthAdjust="spacingAndGlyphs" >233</text>
<path d="M1513.5 88 V62 Q1513.5 58 1517.5 58 H1664.5 Q1668.5 58 1668.5 62 V88 Z" fill="url(#g11)"/>
<path d="M1513.5 88 V62 Q1513.5 58 1517.5 58 H1519.0 V88 Z" fill="#f4f400"/>
<circle cx="1652.5" cy="73" r="10" fill="url(#g12)"/>
<path d="M1648.0 71h9l-4.5 5z" fill="#fff"/>
<text x="1522" y="70" font-size="11" fill="#f4f4f4" text-anchor="start" textLength="117.5" lengthAdjust="spacingAndGlyphs" >Generic Calibration DVD</text>
<path d="M1675 88 V62 Q1675 58 1679 58 H1814 Q1818 58 1818 62 V88 Z" fill="url(#g13)"/>
<path d="M1675 88 V62 Q1675 58 1679 58 H1680.5 V88 Z" fill="#f4f400"/>
<circle cx="1802" cy="73" r="10" fill="url(#g14)"/>
<path d="M1797.5 71h9l-4.5 5z" fill="#fff"/>
<text x="1683.7" y="70" font-size="11" fill="#f4f4f4" text-anchor="start" textLength="105" lengthAdjust="spacingAndGlyphs" >Direct Display Control</text>
<rect x="1821.5" y="58.5" width="33" height="27" rx="4.5" fill="url(#g15)" stroke="#c4c4c4" stroke-width="1"/>
<circle cx="1838.0" cy="72" r="10" fill="url(#g16)"/>
<path d="M1842.20 72.00L1845.20 72.00" stroke="#d8d8d8" stroke-width="2.6"/><path d="M1840.97 74.97L1843.09 77.09" stroke="#d8d8d8" stroke-width="2.6"/><path d="M1838.00 76.20L1838.00 79.20" stroke="#d8d8d8" stroke-width="2.6"/><path d="M1835.03 74.97L1832.91 77.09" stroke="#d8d8d8" stroke-width="2.6"/><path d="M1833.80 72.00L1830.80 72.00" stroke="#d8d8d8" stroke-width="2.6"/><path d="M1835.03 69.03L1832.91 66.91" stroke="#d8d8d8" stroke-width="2.6"/><path d="M1838.00 67.80L1838.00 64.80" stroke="#d8d8d8" stroke-width="2.6"/><path d="M1840.97 69.03L1843.09 66.91" stroke="#d8d8d8" stroke-width="2.6"/>
<circle cx="1838.0" cy="72" r="4" fill="none" stroke="#d8d8d8" stroke-width="2"/>
<rect x="1857.5" y="58.5" width="33" height="27" rx="4.5" fill="url(#g17)" stroke="#c4c4c4" stroke-width="1"/>
<circle cx="1874.0" cy="72" r="10" fill="url(#g18)"/>
<text x="1874" y="78" font-size="16" fill="#f4f4f4" text-anchor="middle" font-weight="bold" >?</text>
<path d="M1921 58.5 H1897.5 Q1893.5 58.5 1893.5 62.5 V81.5 Q1893.5 85.5 1897.5 85.5 H1921" fill="url(#g19)" stroke="#c4c4c4" stroke-width="1"/>
<circle cx="1907.5" cy="72" r="10" fill="url(#g20)"/>
<path d="M1910.0 66.5v11l-5.5-5.5z" fill="#fff"/>
<text x="26.5" y="152" font-size="43.5" fill="#f2f2f2" text-anchor="start" textLength="376" lengthAdjust="spacingAndGlyphs" stroke="#323232" stroke-width="0.8">Saturation Sweeps</text>
<rect x="54" y="226" width="293" height="488" fill="#222222" shape-rendering="crispEdges"/>
<text x="185" y="222" font-size="16" fill="#e0e0e0" text-anchor="middle" textLength="95" lengthAdjust="spacingAndGlyphs" >RGB Balance</text>
<g shape-rendering="crispEdges">
<rect x="54" y="277" width="293" height="1.6" fill="#7a7a7a" />
<rect x="48" y="276.8" width="7" height="2" fill="#d4d4d4" />
<rect x="54" y="339" width="293" height="1.6" fill="#7a7a7a" />
<rect x="48" y="338.8" width="7" height="2" fill="#d4d4d4" />
<rect x="54" y="401.5" width="293" height="1.6" fill="#7a7a7a" />
<rect x="48" y="401.3" width="7" height="2" fill="#d4d4d4" />
<rect x="54" y="463.5" width="293" height="1.6" fill="#7a7a7a" />
<rect x="48" y="463.3" width="7" height="2" fill="#d4d4d4" />
<rect x="54" y="526" width="293" height="1.6" fill="#7a7a7a" />
<rect x="48" y="525.8" width="7" height="2" fill="#d4d4d4" />
<rect x="54" y="588" width="293" height="1.6" fill="#7a7a7a" />
<rect x="48" y="587.8" width="7" height="2" fill="#d4d4d4" />
<rect x="54" y="650.5" width="293" height="1.6" fill="#7a7a7a" />
<rect x="48" y="650.3" width="7" height="2" fill="#d4d4d4" />
<rect x="54" y="712.5" width="293" height="1.6" fill="#7a7a7a" />
<rect x="48" y="712.3" width="7" height="2" fill="#d4d4d4" />
<rect x="54" y="226" width="293" height="2" fill="#969696" />
<rect x="54" y="226" width="2" height="492" fill="#969696" />
<rect x="345" y="226" width="2" height="492" fill="#969696" />
<rect x="54" y="712" width="293" height="2" fill="#969696" />
</g>
<text x="47.5" y="284.6" font-size="16" fill="#e0e0e0" text-anchor="end" >0</text>
<text x="47.5" y="346.6" font-size="16" fill="#e0e0e0" text-anchor="end" >-5</text>
<text x="47.5" y="409.1" font-size="16" fill="#e0e0e0" text-anchor="end" >-10</text>
<text x="47.5" y="471.1" font-size="16" fill="#e0e0e0" text-anchor="end" >-15</text>
<text x="47.5" y="533.6" font-size="16" fill="#e0e0e0" text-anchor="end" >-20</text>
<text x="47.5" y="595.6" font-size="16" fill="#e0e0e0" text-anchor="end" >-25</text>
<text x="47.5" y="658.1" font-size="16" fill="#e0e0e0" text-anchor="end" >-30</text>
<text x="47.5" y="720.1" font-size="16" fill="#e0e0e0" text-anchor="end" >-35</text>
<text x="200.5" y="730" font-size="16" fill="#e0e0e0" text-anchor="middle" >100%</text>
<rect x="84.5" y="277" width="76.5" height="396" fill="url(#g21)" stroke="#000" stroke-width="1.3"/>
<rect x="163" y="277" width="76.5" height="98" fill="url(#g22)" stroke="#000" stroke-width="1.3"/>
<rect x="241.5" y="277" width="77" height="64" fill="url(#g23)" stroke="#000" stroke-width="1.3"/>
<text x="15.5" y="775.5" font-size="32" fill="#f4f4f4" text-anchor="start" textLength="256" lengthAdjust="spacingAndGlyphs" >Current Reading</text>
<text x="17" y="821" font-size="25" fill="#f4f4f4" text-anchor="start" textLength="118" lengthAdjust="spacingAndGlyphs" >x: 0,3996</text>
<text x="17" y="865.6" font-size="25" fill="#f4f4f4" text-anchor="start" textLength="118.5" lengthAdjust="spacingAndGlyphs" >y: 0,5228</text>
<text x="17" y="910.2" font-size="25" fill="#f4f4f4" text-anchor="start" textLength="127" lengthAdjust="spacingAndGlyphs" >fL: 48,282</text>
<text x="17" y="954.8" font-size="25" fill="#f4f4f4" text-anchor="start" textLength="200" lengthAdjust="spacingAndGlyphs" >cd/m²: 165,428</text>
<rect x="461" y="137" width="160" height="298" fill="#222222" shape-rendering="crispEdges"/>
<g shape-rendering="crispEdges">
<rect x="461" y="138.4" width="160" height="1.6" fill="#7a7a7a" />
<rect x="455" y="138.2" width="7" height="2" fill="#d4d4d4" />
<rect x="461" y="187.4" width="160" height="1.6" fill="#7a7a7a" />
<rect x="455" y="187.2" width="7" height="2" fill="#d4d4d4" />
<rect x="461" y="236.4" width="160" height="1.6" fill="#7a7a7a" />
<rect x="455" y="236.2" width="7" height="2" fill="#d4d4d4" />
<rect x="461" y="285.4" width="160" height="1.6" fill="#7a7a7a" />
<rect x="455" y="285.2" width="7" height="2" fill="#d4d4d4" />
<rect x="461" y="334.4" width="160" height="1.6" fill="#7a7a7a" />
<rect x="455" y="334.2" width="7" height="2" fill="#d4d4d4" />
<rect x="461" y="383.4" width="160" height="1.6" fill="#7a7a7a" />
<rect x="455" y="383.2" width="7" height="2" fill="#d4d4d4" />
<rect x="461" y="432.4" width="160" height="1.6" fill="#7a7a7a" />
<rect x="455" y="432.2" width="7" height="2" fill="#d4d4d4" />
<rect x="461" y="137" width="160" height="2" fill="#969696" />
<rect x="461" y="137" width="2" height="301" fill="#969696" />
<rect x="619" y="137" width="2" height="301" fill="#969696" />
<rect x="461" y="433" width="160" height="2" fill="#969696" />
</g>
<text x="454.5" y="145.2" font-size="16" fill="#e0e0e0" text-anchor="end" >15</text>
<text x="454.5" y="194.2" font-size="16" fill="#e0e0e0" text-anchor="end" >10</text>
<text x="454.5" y="243.2" font-size="16" fill="#e0e0e0" text-anchor="end" >5</text>
<text x="454.5" y="292.2" font-size="16" fill="#e0e0e0" text-anchor="end" >0</text>
<text x="454.5" y="341.2" font-size="16" fill="#e0e0e0" text-anchor="end" >-5</text>
<text x="454.5" y="390.2" font-size="16" fill="#e0e0e0" text-anchor="end" >-10</text>
<text x="454.5" y="439.2" font-size="16" fill="#e0e0e0" text-anchor="end" >-15</text>
<text x="526" y="133" font-size="16" fill="#e0e0e0" text-anchor="middle" textLength="48.5" lengthAdjust="spacingAndGlyphs" >DeltaL</text>
<text x="541.5" y="449.5" font-size="16" fill="#e0e0e0" text-anchor="middle" >100%</text>
<rect x="477.6" y="284.8" width="126" height="41.58" fill="url(#g24)" stroke="#000" stroke-width="1.6"/>
<rect x="461" y="184.8" width="160" height="2.4" fill="#e01010" />
<rect x="461" y="381.5" width="160" height="2.4" fill="#e01010" />
<rect x="461" y="233.9" width="160" height="2.2" fill="#f0f000" />
<rect x="461" y="332.5" width="160" height="2.2" fill="#f0f000" />
<rect x="461" y="253.9" width="160" height="1.8" fill="#008000" />
<rect x="461" y="313.5" width="160" height="1.8" fill="#008000" />
<rect x="680" y="137" width="160" height="298" fill="#222222" shape-rendering="crispEdges"/>
<g shape-rendering="crispEdges">
<rect x="680" y="138.4" width="160" height="1.6" fill="#7a7a7a" />
<rect x="674" y="138.2" width="7" height="2" fill="#d4d4d4" />
<rect x="680" y="187.4" width="160" height="1.6" fill="#7a7a7a" />
<rect x="674" y="187.2" width="7" height="2" fill="#d4d4d4" />
<rect x="680" y="236.4" width="160" height="1.6" fill="#7a7a7a" />
<rect x="674" y="236.2" width="7" height="2" fill="#d4d4d4" />
<rect x="680" y="285.4" width="160" height="1.6" fill="#7a7a7a" />
<rect x="674" y="285.2" width="7" height="2" fill="#d4d4d4" />
<rect x="680" y="334.4" width="160" height="1.6" fill="#7a7a7a" />
<rect x="674" y="334.2" width="7" height="2" fill="#d4d4d4" />
<rect x="680" y="383.4" width="160" height="1.6" fill="#7a7a7a" />
<rect x="674" y="383.2" width="7" height="2" fill="#d4d4d4" />
<rect x="680" y="432.4" width="160" height="1.6" fill="#7a7a7a" />
<rect x="674" y="432.2" width="7" height="2" fill="#d4d4d4" />
<rect x="680" y="137" width="160" height="2" fill="#969696" />
<rect x="680" y="137" width="2" height="301" fill="#969696" />
<rect x="838" y="137" width="2" height="301" fill="#969696" />
<rect x="680" y="433" width="160" height="2" fill="#969696" />
</g>
<text x="673.5" y="145.2" font-size="16" fill="#e0e0e0" text-anchor="end" >15</text>
<text x="673.5" y="194.2" font-size="16" fill="#e0e0e0" text-anchor="end" >10</text>
<text x="673.5" y="243.2" font-size="16" fill="#e0e0e0" text-anchor="end" >5</text>
<text x="673.5" y="292.2" font-size="16" fill="#e0e0e0" text-anchor="end" >0</text>
<text x="673.5" y="341.2" font-size="16" fill="#e0e0e0" text-anchor="end" >-5</text>
<text x="673.5" y="390.2" font-size="16" fill="#e0e0e0" text-anchor="end" >-10</text>
<text x="673.5" y="439.2" font-size="16" fill="#e0e0e0" text-anchor="end" >-15</text>
<text x="745" y="133" font-size="16" fill="#e0e0e0" text-anchor="middle" textLength="48.5" lengthAdjust="spacingAndGlyphs" >DeltaC</text>
<text x="760.5" y="449.5" font-size="16" fill="#e0e0e0" text-anchor="middle" >100%</text>
<rect x="696.6" y="255.4" width="126" height="30.8" fill="url(#g25)" stroke="#000" stroke-width="1.6"/>
<rect x="680" y="184.8" width="160" height="2.4" fill="#e01010" />
<rect x="680" y="381.5" width="160" height="2.4" fill="#e01010" />
<rect x="680" y="233.9" width="160" height="2.2" fill="#f0f000" />
<rect x="680" y="332.5" width="160" height="2.2" fill="#f0f000" />
<rect x="680" y="253.9" width="160" height="1.8" fill="#008000" />
<rect x="680" y="313.5" width="160" height="1.8" fill="#008000" />
<rect x="899" y="137" width="160" height="298" fill="#222222" shape-rendering="crispEdges"/>
<g shape-rendering="crispEdges">
<rect x="899" y="138.4" width="160" height="1.6" fill="#7a7a7a" />
<rect x="893" y="138.2" width="7" height="2" fill="#d4d4d4" />
<rect x="899" y="187.4" width="160" height="1.6" fill="#7a7a7a" />
<rect x="893" y="187.2" width="7" height="2" fill="#d4d4d4" />
<rect x="899" y="236.4" width="160" height="1.6" fill="#7a7a7a" />
<rect x="893" y="236.2" width="7" height="2" fill="#d4d4d4" />
<rect x="899" y="285.4" width="160" height="1.6" fill="#7a7a7a" />
<rect x="893" y="285.2" width="7" height="2" fill="#d4d4d4" />
<rect x="899" y="334.4" width="160" height="1.6" fill="#7a7a7a" />
<rect x="893" y="334.2" width="7" height="2" fill="#d4d4d4" />
<rect x="899" y="383.4" width="160" height="1.6" fill="#7a7a7a" />
<rect x="893" y="383.2" width="7" height="2" fill="#d4d4d4" />
<rect x="899" y="432.4" width="160" height="1.6" fill="#7a7a7a" />
<rect x="893" y="432.2" width="7" height="2" fill="#d4d4d4" />
<rect x="899" y="137" width="160" height="2" fill="#969696" />
<rect x="899" y="137" width="2" height="301" fill="#969696" />
<rect x="1057" y="137" width="2" height="301" fill="#969696" />
<rect x="899" y="433" width="160" height="2" fill="#969696" />
</g>
<text x="892.5" y="145.2" font-size="16" fill="#e0e0e0" text-anchor="end" >15</text>
<text x="892.5" y="194.2" font-size="16" fill="#e0e0e0" text-anchor="end" >10</text>
<text x="892.5" y="243.2" font-size="16" fill="#e0e0e0" text-anchor="end" >5</text>
<text x="892.5" y="292.2" font-size="16" fill="#e0e0e0" text-anchor="end" >0</text>
<text x="892.5" y="341.2" font-size="16" fill="#e0e0e0" text-anchor="end" >-5</text>
<text x="892.5" y="390.2" font-size="16" fill="#e0e0e0" text-anchor="end" >-10</text>
<text x="892.5" y="439.2" font-size="16" fill="#e0e0e0" text-anchor="end" >-15</text>
<text x="964" y="133" font-size="16" fill="#e0e0e0" text-anchor="middle" textLength="48.5" lengthAdjust="spacingAndGlyphs" >DeltaH</text>
<text x="979.5" y="449.5" font-size="16" fill="#e0e0e0" text-anchor="middle" >100%</text>
<rect x="915.6" y="193.66" width="126" height="92.54" fill="url(#g26)" stroke="#000" stroke-width="1.6"/>
<rect x="899" y="184.8" width="160" height="2.4" fill="#e01010" />
<rect x="899" y="381.5" width="160" height="2.4" fill="#e01010" />
<rect x="899" y="233.9" width="160" height="2.2" fill="#f0f000" />
<rect x="899" y="332.5" width="160" height="2.2" fill="#f0f000" />
<rect x="899" y="253.9" width="160" height="1.8" fill="#008000" />
<rect x="899" y="313.5" width="160" height="1.8" fill="#008000" />
<rect x="385" y="467" width="712" height="177.5" fill="#000" shape-rendering="crispEdges"/>
<rect x="409.6" y="475.5" width="118.8" height="62.5" fill="#abb794" stroke="#f4f4f4" stroke-width="1.2"/>
<rect x="409.6" y="556.5" width="118.8" height="62.5" fill="#bfbfa3" stroke="#f4f4f4" stroke-width="1.2"/>
<text x="469" y="634.5" font-size="13" fill="#fff" text-anchor="middle" font-weight="bold" >20%</text>
<rect x="548.3000000000001" y="475.5" width="118.8" height="62.5" fill="#abb572" stroke="#f4f4f4" stroke-width="1.2"/>
<rect x="548.3000000000001" y="556.5" width="118.8" height="62.5" fill="#c0c087" stroke="#f4f4f4" stroke-width="1.2"/>
<text x="607.7" y="634.5" font-size="13" fill="#fff" text-anchor="middle" font-weight="bold" >40%</text>
<rect x="687.4" y="475.5" width="118.8" height="62.5" fill="#aab458" stroke="#f4f4f4" stroke-width="1.2"/>
<rect x="687.4" y="556.5" width="118.8" height="62.5" fill="#c1bf6c" stroke="#f4f4f4" stroke-width="1.2"/>
<text x="746.8" y="634.5" font-size="13" fill="#fff" text-anchor="middle" font-weight="bold" >60%</text>
<rect x="827.6" y="475.5" width="118.8" height="62.5" fill="#aab036" stroke="#f4f4f4" stroke-width="1.2"/>
<rect x="827.6" y="556.5" width="118.8" height="62.5" fill="#c1be4c" stroke="#f4f4f4" stroke-width="1.2"/>
<text x="887" y="634.5" font-size="13" fill="#fff" text-anchor="middle" font-weight="bold" >80%</text>
<rect x="966.6" y="475.5" width="118.8" height="62.5" fill="#a6b800" stroke="#f4f4f4" stroke-width="1.2"/>
<rect x="966.6" y="556.5" width="118.8" height="62.5" fill="#c1bf0a" stroke="#f4f4f4" stroke-width="1.2"/>
<text x="1026" y="634.5" font-size="13" fill="#fff" text-anchor="middle" font-weight="bold" >100%</text>
<text transform="translate(400,507) rotate(-90)" font-size="13" fill="#fff" text-anchor="middle" font-weight="bold">Actual</text>
<text transform="translate(400,587.5) rotate(-90)" font-size="13" fill="#fff" text-anchor="middle" font-weight="bold">Target</text>
<rect x="401" y="678" width="698" height="273" fill="#222222" shape-rendering="crispEdges"/>
<g shape-rendering="crispEdges">
<rect x="401" y="679.4" width="698" height="1.6" fill="#7a7a7a" />
<rect x="395" y="679.2" width="7" height="2" fill="#d4d4d4" />
<rect x="401" y="733.4" width="698" height="1.6" fill="#7a7a7a" />
<rect x="395" y="733.2" width="7" height="2" fill="#d4d4d4" />
<rect x="401" y="787.4" width="698" height="1.6" fill="#7a7a7a" />
<rect x="395" y="787.2" width="7" height="2" fill="#d4d4d4" />
<rect x="401" y="841.4" width="698" height="1.6" fill="#7a7a7a" />
<rect x="395" y="841.2" width="7" height="2" fill="#d4d4d4" />
<rect x="401" y="895.4" width="698" height="1.6" fill="#7a7a7a" />
<rect x="395" y="895.2" width="7" height="2" fill="#d4d4d4" />
<rect x="401" y="949.4" width="698" height="1.6" fill="#7a7a7a" />
<rect x="395" y="949.2" width="7" height="2" fill="#d4d4d4" />
<rect x="401" y="678" width="698" height="2" fill="#969696" />
<rect x="401" y="678" width="2" height="278" fill="#969696" />
<rect x="1097" y="678" width="2" height="278" fill="#969696" />
<rect x="401" y="949" width="698" height="2" fill="#969696" />
<rect x="517" y="951" width="2" height="5" fill="#d4d4d4" />
<rect x="633.2" y="951" width="2" height="5" fill="#d4d4d4" />
<rect x="749.4" y="951" width="2" height="5" fill="#d4d4d4" />
<rect x="865.6" y="951" width="2" height="5" fill="#d4d4d4" />
<rect x="981.8" y="951" width="2" height="5" fill="#d4d4d4" />
</g>
<text x="394.5" y="687" font-size="16" fill="#e0e0e0" text-anchor="end" >25</text>
<text x="394.5" y="741" font-size="16" fill="#e0e0e0" text-anchor="end" >20</text>
<text x="394.5" y="795" font-size="16" fill="#e0e0e0" text-anchor="end" >15</text>
<text x="394.5" y="849" font-size="16" fill="#e0e0e0" text-anchor="end" >10</text>
<text x="394.5" y="903" font-size="16" fill="#e0e0e0" text-anchor="end" >5</text>
<text x="394.5" y="957" font-size="16" fill="#e0e0e0" text-anchor="end" >0</text>
<text x="737" y="673" font-size="16" fill="#e0e0e0" text-anchor="middle" textLength="91.5" lengthAdjust="spacingAndGlyphs" >DeltaE 2000</text>
<text x="459" y="967.5" font-size="16" fill="#e0e0e0" text-anchor="middle" >100</text>
<text x="575.2" y="967.5" font-size="16" fill="#e0e0e0" text-anchor="middle" >20%</text>
<text x="691.4" y="967.5" font-size="16" fill="#e0e0e0" text-anchor="middle" >40%</text>
<text x="807.6" y="967.5" font-size="16" fill="#e0e0e0" text-anchor="middle" >60%</text>
<text x="923.8" y="967.5" font-size="16" fill="#e0e0e0" text-anchor="middle" >80%</text>
<text x="1040" y="967.5" font-size="16" fill="#e0e0e0" text-anchor="middle" >100%</text>
<rect x="487.8" y="892.16" width="10.4" height="57.84" fill="url(#g27)" stroke="#000" stroke-width="1.4"/>
<rect x="529.8" y="890.648" width="10.4" height="59.352" fill="url(#g28)" stroke="#000" stroke-width="1.4"/>
<rect x="542.45" y="905.336" width="10.4" height="44.664" fill="url(#g29)" stroke="#000" stroke-width="1.4"/>
<rect x="555.1" y="884.6" width="10.4" height="65.4" fill="url(#g30)" stroke="#000" stroke-width="1.4"/>
<rect x="567.75" y="895.4" width="10.4" height="54.6" fill="url(#g31)" stroke="#000" stroke-width="1.4"/>
<rect x="580.4" y="910.52" width="10.4" height="39.48" fill="url(#g32)" stroke="#000" stroke-width="1.4"/>
<rect x="593.05" y="887.84" width="10.4" height="62.16" fill="url(#g33)" stroke="#000" stroke-width="1.4"/>
<rect x="646" y="898.1" width="10.4" height="51.9" fill="url(#g34)" stroke="#000" stroke-width="1.4"/>
<rect x="658.65" y="902.312" width="10.4" height="47.688" fill="url(#g35)" stroke="#000" stroke-width="1.4"/>
<rect x="671.3" y="868.4" width="10.4" height="81.6" fill="url(#g36)" stroke="#000" stroke-width="1.4"/>
<rect x="683.95" y="900.8" width="10.4" height="49.2" fill="url(#g37)" stroke="#000" stroke-width="1.4"/>
<rect x="696.6" y="905.12" width="10.4" height="44.88" fill="url(#g38)" stroke="#000" stroke-width="1.4"/>
<rect x="709.25" y="895.4" width="10.4" height="54.6" fill="url(#g39)" stroke="#000" stroke-width="1.4"/>
<rect x="762.2" y="898.208" width="10.4" height="51.792" fill="url(#g40)" stroke="#000" stroke-width="1.4"/>
<rect x="774.85" y="901.34" width="10.4" height="48.66" fill="url(#g41)" stroke="#000" stroke-width="1.4"/>
<rect x="787.5" y="844.64" width="10.4" height="105.36" fill="url(#g42)" stroke="#000" stroke-width="1.4"/>
<rect x="800.15" y="914.3" width="10.4" height="35.7" fill="url(#g43)" stroke="#000" stroke-width="1.4"/>
<rect x="812.8" y="889.244" width="10.4" height="60.756" fill="url(#g44)" stroke="#000" stroke-width="1.4"/>
<rect x="825.45" y="899.396" width="10.4" height="50.604" fill="url(#g45)" stroke="#000" stroke-width="1.4"/>
<rect x="878.4" y="905.12" width="10.4" height="44.88" fill="url(#g46)" stroke="#000" stroke-width="1.4"/>
<rect x="891.05" y="909.98" width="10.4" height="40.02" fill="url(#g47)" stroke="#000" stroke-width="1.4"/>
<rect x="903.7" y="794.204" width="10.4" height="155.796" fill="url(#g48)" stroke="#000" stroke-width="1.4"/>
<rect x="916.35" y="929.096" width="10.4" height="20.904" fill="url(#g49)" stroke="#000" stroke-width="1.4"/>
<rect x="929" y="860.84" width="10.4" height="89.16" fill="url(#g50)" stroke="#000" stroke-width="1.4"/>
<rect x="941.65" y="900.8" width="10.4" height="49.2" fill="url(#g51)" stroke="#000" stroke-width="1.4"/>
<rect x="994.6" y="909.98" width="10.4" height="40.02" fill="url(#g52)" stroke="#000" stroke-width="1.4"/>
<rect x="1007.25" y="895.94" width="10.4" height="54.06" fill="url(#g53)" stroke="#000" stroke-width="1.4"/>
<rect x="1019.9" y="691.604" width="10.4" height="258.396" fill="url(#g54)" stroke="#000" stroke-width="1.4"/>
<rect x="1032.55" y="927.8" width="10.4" height="22.2" fill="url(#g55)" stroke="#000" stroke-width="1.4"/>
<rect x="1045.2" y="840.32" width="10.4" height="109.68" fill="url(#g56)" stroke="#000" stroke-width="1.4"/>
<rect x="1057.85" y="887.84" width="10.4" height="62.16" fill="url(#g57)" stroke="#000" stroke-width="1.4"/>
<rect x="401" y="840" width="698" height="2.2" fill="#e01010" />
<rect x="401" y="894.7" width="698" height="2" fill="#f0f000" />
<rect x="401" y="916.4" width="698" height="1.7" fill="#008000" />
<rect x="1120.5" y="104" width="795.5" height="622" fill="#000" />
<rect x="1128" y="111" width="783" height="608" fill="#323232" />
<rect x="1161" y="137" width="747" height="552" fill="#242424" shape-rendering="crispEdges"/>
<text x="1520" y="131" font-size="16" fill="#e0e0e0" text-anchor="middle" textLength="87" lengthAdjust="spacingAndGlyphs" >CIE 1931 xy</text>
<g clip-path="url(#cpl)"><g filter="url(#vb)" shape-rendering="crispEdges"><rect x="1213" y="144" width="60" height="4.5" fill="url(#o0)"/><rect x="1202" y="148" width="87" height="4.5" fill="url(#o1)"/><rect x="1192" y="152" width="113" height="4.5" fill="url(#o2)"/><rect x="1188" y="156" width="128" height="4.5" fill="url(#o3)"/><rect x="1185" y="160" width="140" height="4.5" fill="url(#o4)"/><rect x="1182" y="164" width="153" height="4.5" fill="url(#o5)"/><rect x="1179" y="168" width="165" height="4.5" fill="url(#o6)"/><rect x="1175" y="172" width="177" height="4.5" fill="url(#o7)"/><rect x="1172" y="176" width="187" height="4.5" fill="url(#o8)"/><rect x="1169" y="180" width="198" height="4.5" fill="url(#o9)"/><rect x="1166" y="184" width="209" height="4.5" fill="url(#o10)"/><rect x="1163" y="188" width="219" height="4.5" fill="url(#o11)"/><rect x="1163" y="192" width="225" height="4.5" fill="url(#o12)"/><rect x="1162" y="196" width="233" height="4.5" fill="url(#o13)"/><rect x="1162" y="200" width="239" height="4.5" fill="url(#o14)"/><rect x="1161" y="204" width="247" height="4.5" fill="url(#o15)"/><rect x="1160" y="208" width="254" height="4.5" fill="url(#o16)"/><rect x="1160" y="212" width="260" height="4.5" fill="url(#o17)"/><rect x="1159" y="216" width="267" height="4.5" fill="url(#o18)"/><rect x="1159" y="220" width="273" height="4.5" fill="url(#o19)"/><rect x="1158" y="224" width="280" height="4.5" fill="url(#o20)"/><rect x="1158" y="228" width="286" height="4.5" fill="url(#o21)"/><rect x="1157" y="232" width="293" height="4.5" fill="url(#o22)"/><rect x="1156" y="236" width="300" height="4.5" fill="url(#o23)"/><rect x="1156" y="240" width="305" height="4.5" fill="url(#o24)"/><rect x="1155" y="244" width="312" height="4.5" fill="url(#o25)"/><rect x="1155" y="248" width="318" height="4.5" fill="url(#o26)"/><rect x="1154" y="252" width="325" height="4.5" fill="url(#o27)"/><rect x="1154" y="256" width="330" height="4.5" fill="url(#o28)"/><rect x="1154" y="260" width="336" height="4.5" fill="url(#o29)"/><rect x="1154" y="264" width="341" height="4.5" fill="url(#o30)"/><rect x="1155" y="268" width="346" height="4.5" fill="url(#o31)"/><rect x="1155" y="272" width="352" height="4.5" fill="url(#o32)"/><rect x="1155" y="276" width="357" height="4.5" fill="url(#o33)"/><rect x="1155" y="280" width="363" height="4.5" fill="url(#o34)"/><rect x="1155" y="284" width="368" height="4.5" fill="url(#o35)"/><rect x="1156" y="288" width="373" height="4.5" fill="url(#o36)"/><rect x="1156" y="292" width="378" height="4.5" fill="url(#o37)"/><rect x="1156" y="296" width="384" height="4.5" fill="url(#o38)"/><rect x="1156" y="300" width="389" height="4.5" fill="url(#o39)"/><rect x="1156" y="304" width="395" height="4.5" fill="url(#o40)"/><rect x="1157" y="308" width="399" height="4.5" fill="url(#o41)"/><rect x="1157" y="312" width="405" height="4.5" fill="url(#o42)"/><rect x="1157" y="316" width="410" height="4.5" fill="url(#o43)"/><rect x="1157" y="320" width="416" height="4.5" fill="url(#o44)"/><rect x="1157" y="324" width="421" height="4.5" fill="url(#o45)"/><rect x="1158" y="328" width="426" height="4.5" fill="url(#o46)"/><rect x="1158" y="332" width="431" height="4.5" fill="url(#o47)"/><rect x="1158" y="336" width="437" height="4.5" fill="url(#o48)"/><rect x="1158" y="340" width="442" height="4.5" fill="url(#o49)"/><rect x="1159" y="344" width="446" height="4.5" fill="url(#o50)"/><rect x="1159" y="348" width="452" height="4.5" fill="url(#o51)"/><rect x="1160" y="352" width="456" height="4.5" fill="url(#o52)"/><rect x="1161" y="356" width="461" height="4.5" fill="url(#o53)"/><rect x="1162" y="360" width="465" height="4.5" fill="url(#o54)"/><rect x="1162" y="364" width="471" height="4.5" fill="url(#o55)"/><rect x="1163" y="368" width="475" height="4.5" fill="url(#o56)"/><rect x="1164" y="372" width="479" height="4.5" fill="url(#o57)"/><rect x="1165" y="376" width="484" height="4.5" fill="url(#o58)"/><rect x="1165" y="380" width="489" height="4.5" fill="url(#o59)"/><rect x="1166" y="384" width="494" height="4.5" fill="url(#o60)"/><rect x="1167" y="388" width="498" height="4.5" fill="url(#o61)"/><rect x="1168" y="392" width="503" height="4.5" fill="url(#o62)"/><rect x="1168" y="396" width="508" height="4.5" fill="url(#o63)"/><rect x="1169" y="400" width="513" height="4.5" fill="url(#o64)"/><rect x="1170" y="404" width="517" height="4.5" fill="url(#o65)"/><rect x="1171" y="408" width="521" height="4.5" fill="url(#o66)"/><rect x="1171" y="412" width="527" height="4.5" fill="url(#o67)"/><rect x="1172" y="416" width="531" height="4.5" fill="url(#o68)"/><rect x="1173" y="420" width="536" height="4.5" fill="url(#o69)"/><rect x="1174" y="424" width="540" height="4.5" fill="url(#o70)"/><rect x="1176" y="428" width="544" height="4.5" fill="url(#o71)"/><rect x="1177" y="432" width="548" height="4.5" fill="url(#o72)"/><rect x="1178" y="436" width="552" height="4.5" fill="url(#o73)"/><rect x="1179" y="440" width="557" height="4.5" fill="url(#o74)"/><rect x="1181" y="444" width="560" height="4.5" fill="url(#o75)"/><rect x="1182" y="448" width="565" height="4.5" fill="url(#o76)"/><rect x="1183" y="452" width="569" height="4.5" fill="url(#o77)"/><rect x="1184" y="456" width="574" height="4.5" fill="url(#o78)"/><rect x="1186" y="460" width="577" height="4.5" fill="url(#o79)"/><rect x="1187" y="464" width="582" height="4.5" fill="url(#o80)"/><rect x="1188" y="468" width="586" height="4.5" fill="url(#o81)"/><rect x="1190" y="472" width="590" height="4.5" fill="url(#o82)"/><rect x="1191" y="476" width="594" height="4.5" fill="url(#o83)"/><rect x="1192" y="480" width="598" height="4.5" fill="url(#o84)"/><rect x="1194" y="484" width="602" height="4.5" fill="url(#o85)"/><rect x="1195" y="488" width="606" height="4.5" fill="url(#o86)"/><rect x="1196" y="492" width="611" height="4.5" fill="url(#o87)"/><rect x="1198" y="496" width="611" height="4.5" fill="url(#o88)"/><rect x="1199" y="500" width="610" height="4.5" fill="url(#o89)"/><rect x="1200" y="504" width="609" height="4.5" fill="url(#o90)"/><rect x="1202" y="508" width="607" height="4.5" fill="url(#o91)"/><rect x="1203" y="512" width="603" height="4.5" fill="url(#o92)"/><rect x="1205" y="516" width="590" height="4.5" fill="url(#o93)"/><rect x="1206" y="520" width="578" height="4.5" fill="url(#o94)"/><rect x="1208" y="524" width="564" height="4.5" fill="url(#o95)"/><rect x="1210" y="528" width="551" height="4.5" fill="url(#o96)"/><rect x="1211" y="532" width="539" height="4.5" fill="url(#o97)"/><rect x="1213" y="536" width="526" height="4.5" fill="url(#o98)"/><rect x="1214" y="540" width="514" height="4.5" fill="url(#o99)"/><rect x="1216" y="544" width="501" height="4.5" fill="url(#o100)"/><rect x="1217" y="548" width="489" height="4.5" fill="url(#o101)"/><rect x="1219" y="552" width="475" height="4.5" fill="url(#o102)"/><rect x="1221" y="556" width="462" height="4.5" fill="url(#o103)"/><rect x="1222" y="560" width="450" height="4.5" fill="url(#o104)"/><rect x="1224" y="564" width="437" height="4.5" fill="url(#o105)"/><rect x="1226" y="568" width="424" height="4.5" fill="url(#o106)"/><rect x="1227" y="572" width="412" height="4.5" fill="url(#o107)"/><rect x="1230" y="576" width="397" height="4.5" fill="url(#o108)"/><rect x="1232" y="580" width="384" height="4.5" fill="url(#o109)"/><rect x="1234" y="584" width="371" height="4.5" fill="url(#o110)"/><rect x="1236" y="588" width="358" height="4.5" fill="url(#o111)"/><rect x="1238" y="592" width="345" height="4.5" fill="url(#o112)"/><rect x="1240" y="596" width="332" height="4.5" fill="url(#o113)"/><rect x="1242" y="600" width="318" height="4.5" fill="url(#o114)"/><rect x="1244" y="604" width="305" height="4.5" fill="url(#o115)"/><rect x="1246" y="608" width="292" height="4.5" fill="url(#o116)"/><rect x="1248" y="612" width="279" height="4.5" fill="url(#o117)"/><rect x="1250" y="616" width="266" height="4.5" fill="url(#o118)"/><rect x="1253" y="620" width="252" height="4.5" fill="url(#o119)"/><rect x="1255" y="624" width="238" height="4.5" fill="url(#o120)"/><rect x="1257" y="628" width="225" height="4.5" fill="url(#o121)"/><rect x="1260" y="632" width="211" height="4.5" fill="url(#o122)"/><rect x="1262" y="636" width="198" height="4.5" fill="url(#o123)"/><rect x="1265" y="640" width="184" height="4.5" fill="url(#o124)"/><rect x="1267" y="644" width="171" height="4.5" fill="url(#o125)"/><rect x="1270" y="648" width="157" height="4.5" fill="url(#o126)"/><rect x="1273" y="652" width="142" height="4.5" fill="url(#o127)"/><rect x="1276" y="656" width="128" height="4.5" fill="url(#o128)"/><rect x="1279" y="660" width="114" height="4.5" fill="url(#o129)"/><rect x="1281" y="664" width="101" height="4.5" fill="url(#o130)"/><rect x="1285" y="668" width="86" height="4.5" fill="url(#o131)"/><rect x="1289" y="672" width="71" height="4.5" fill="url(#o132)"/><rect x="1293" y="676" width="55" height="4.5" fill="url(#o133)"/><rect x="1299" y="680" width="37" height="4.5" fill="url(#o134)"/></g></g>
<g clip-path="url(#cpt)"><g filter="url(#vb)" shape-rendering="crispEdges"><rect x="1416" y="288" width="27" height="4.5" fill="url(#i0)"/><rect x="1415" y="292" width="34" height="4.5" fill="url(#i1)"/><rect x="1413" y="296" width="43" height="4.5" fill="url(#i2)"/><rect x="1412" y="300" width="51" height="4.5" fill="url(#i3)"/><rect x="1410" y="304" width="60" height="4.5" fill="url(#i4)"/><rect x="1409" y="308" width="68" height="4.5" fill="url(#i5)"/><rect x="1407" y="312" width="76" height="4.5" fill="url(#i6)"/><rect x="1406" y="316" width="84" height="4.5" fill="url(#i7)"/><rect x="1404" y="320" width="93" height="4.5" fill="url(#i8)"/><rect x="1403" y="324" width="101" height="4.5" fill="url(#i9)"/><rect x="1401" y="328" width="110" height="4.5" fill="url(#i10)"/><rect x="1400" y="332" width="118" height="4.5" fill="url(#i11)"/><rect x="1398" y="336" width="126" height="4.5" fill="url(#i12)"/><rect x="1397" y="340" width="134" height="4.5" fill="url(#i13)"/><rect x="1395" y="344" width="143" height="4.5" fill="url(#i14)"/><rect x="1394" y="348" width="151" height="4.5" fill="url(#i15)"/><rect x="1392" y="352" width="160" height="4.5" fill="url(#i16)"/><rect x="1391" y="356" width="168" height="4.5" fill="url(#i17)"/><rect x="1389" y="360" width="176" height="4.5" fill="url(#i18)"/><rect x="1388" y="364" width="184" height="4.5" fill="url(#i19)"/><rect x="1386" y="368" width="193" height="4.5" fill="url(#i20)"/><rect x="1385" y="372" width="201" height="4.5" fill="url(#i21)"/><rect x="1383" y="376" width="210" height="4.5" fill="url(#i22)"/><rect x="1382" y="380" width="217" height="4.5" fill="url(#i23)"/><rect x="1380" y="384" width="226" height="4.5" fill="url(#i24)"/><rect x="1379" y="388" width="234" height="4.5" fill="url(#i25)"/><rect x="1377" y="392" width="243" height="4.5" fill="url(#i26)"/><rect x="1376" y="396" width="251" height="4.5" fill="url(#i27)"/><rect x="1374" y="400" width="260" height="4.5" fill="url(#i28)"/><rect x="1373" y="404" width="267" height="4.5" fill="url(#i29)"/><rect x="1371" y="408" width="276" height="4.5" fill="url(#i30)"/><rect x="1370" y="412" width="284" height="4.5" fill="url(#i31)"/><rect x="1368" y="416" width="293" height="4.5" fill="url(#i32)"/><rect x="1367" y="420" width="301" height="4.5" fill="url(#i33)"/><rect x="1365" y="424" width="310" height="4.5" fill="url(#i34)"/><rect x="1364" y="428" width="317" height="4.5" fill="url(#i35)"/><rect x="1362" y="432" width="326" height="4.5" fill="url(#i36)"/><rect x="1361" y="436" width="334" height="4.5" fill="url(#i37)"/><rect x="1359" y="440" width="343" height="4.5" fill="url(#i38)"/><rect x="1358" y="444" width="351" height="4.5" fill="url(#i39)"/><rect x="1356" y="448" width="360" height="4.5" fill="url(#i40)"/><rect x="1355" y="452" width="367" height="4.5" fill="url(#i41)"/><rect x="1353" y="456" width="376" height="4.5" fill="url(#i42)"/><rect x="1352" y="460" width="384" height="4.5" fill="url(#i43)"/><rect x="1350" y="464" width="389" height="4.5" fill="url(#i44)"/><rect x="1349" y="468" width="390" height="4.5" fill="url(#i45)"/><rect x="1347" y="472" width="392" height="4.5" fill="url(#i46)"/><rect x="1346" y="476" width="393" height="4.5" fill="url(#i47)"/><rect x="1344" y="480" width="392" height="4.5" fill="url(#i48)"/><rect x="1343" y="484" width="383" height="4.5" fill="url(#i49)"/><rect x="1341" y="488" width="375" height="4.5" fill="url(#i50)"/><rect x="1340" y="492" width="366" height="4.5" fill="url(#i51)"/><rect x="1338" y="496" width="359" height="4.5" fill="url(#i52)"/><rect x="1337" y="500" width="350" height="4.5" fill="url(#i53)"/><rect x="1335" y="504" width="342" height="4.5" fill="url(#i54)"/><rect x="1334" y="508" width="333" height="4.5" fill="url(#i55)"/><rect x="1332" y="512" width="325" height="4.5" fill="url(#i56)"/><rect x="1330" y="516" width="317" height="4.5" fill="url(#i57)"/><rect x="1329" y="520" width="309" height="4.5" fill="url(#i58)"/><rect x="1327" y="524" width="301" height="4.5" fill="url(#i59)"/><rect x="1326" y="528" width="292" height="4.5" fill="url(#i60)"/><rect x="1324" y="532" width="284" height="4.5" fill="url(#i61)"/><rect x="1323" y="536" width="275" height="4.5" fill="url(#i62)"/><rect x="1321" y="540" width="267" height="4.5" fill="url(#i63)"/><rect x="1320" y="544" width="259" height="4.5" fill="url(#i64)"/><rect x="1318" y="548" width="251" height="4.5" fill="url(#i65)"/><rect x="1317" y="552" width="242" height="4.5" fill="url(#i66)"/><rect x="1315" y="556" width="234" height="4.5" fill="url(#i67)"/><rect x="1314" y="560" width="225" height="4.5" fill="url(#i68)"/><rect x="1312" y="564" width="217" height="4.5" fill="url(#i69)"/><rect x="1311" y="568" width="209" height="4.5" fill="url(#i70)"/><rect x="1309" y="572" width="201" height="4.5" fill="url(#i71)"/><rect x="1308" y="576" width="192" height="4.5" fill="url(#i72)"/><rect x="1306" y="580" width="184" height="4.5" fill="url(#i73)"/><rect x="1305" y="584" width="175" height="4.5" fill="url(#i74)"/><rect x="1303" y="588" width="167" height="4.5" fill="url(#i75)"/><rect x="1302" y="592" width="159" height="4.5" fill="url(#i76)"/><rect x="1300" y="596" width="151" height="4.5" fill="url(#i77)"/><rect x="1299" y="600" width="142" height="4.5" fill="url(#i78)"/><rect x="1297" y="604" width="134" height="4.5" fill="url(#i79)"/><rect x="1296" y="608" width="125" height="4.5" fill="url(#i80)"/><rect x="1294" y="612" width="117" height="4.5" fill="url(#i81)"/><rect x="1293" y="616" width="109" height="4.5" fill="url(#i82)"/><rect x="1291" y="620" width="101" height="4.5" fill="url(#i83)"/><rect x="1290" y="624" width="92" height="4.5" fill="url(#i84)"/><rect x="1288" y="628" width="84" height="4.5" fill="url(#i85)"/><rect x="1287" y="632" width="75" height="4.5" fill="url(#i86)"/><rect x="1285" y="636" width="67" height="4.5" fill="url(#i87)"/><rect x="1284" y="640" width="59" height="4.5" fill="url(#i88)"/><rect x="1284" y="644" width="49" height="4.5" fill="url(#i89)"/><rect x="1284" y="648" width="39" height="4.5" fill="url(#i90)"/><rect x="1284" y="652" width="29" height="4.5" fill="url(#i91)"/></g></g>
<g shape-rendering="crispEdges">
<rect x="1161" y="137" width="747" height="2" fill="#969696" />
<rect x="1161" y="137" width="2" height="552" fill="#969696" />
<rect x="1906" y="137" width="2" height="552" fill="#969696" />
<rect x="1161" y="687" width="747" height="2" fill="#969696" />
<rect x="1160.7" y="689" width="2" height="5" fill="#d4d4d4" />
<rect x="1155" y="687.5" width="7" height="2" fill="#d4d4d4" />
<rect x="1249.45" y="689" width="2" height="5" fill="#d4d4d4" />
<rect x="1155" y="622" width="7" height="2" fill="#d4d4d4" />
<rect x="1338.2" y="689" width="2" height="5" fill="#d4d4d4" />
<rect x="1155" y="556.5" width="7" height="2" fill="#d4d4d4" />
<rect x="1426.95" y="689" width="2" height="5" fill="#d4d4d4" />
<rect x="1155" y="491" width="7" height="2" fill="#d4d4d4" />
<rect x="1515.7" y="689" width="2" height="5" fill="#d4d4d4" />
<rect x="1155" y="425.5" width="7" height="2" fill="#d4d4d4" />
<rect x="1604.45" y="689" width="2" height="5" fill="#d4d4d4" />
<rect x="1155" y="360" width="7" height="2" fill="#d4d4d4" />
<rect x="1693.2" y="689" width="2" height="5" fill="#d4d4d4" />
<rect x="1155" y="294.5" width="7" height="2" fill="#d4d4d4" />
<rect x="1781.95" y="689" width="2" height="5" fill="#d4d4d4" />
<rect x="1155" y="229" width="7" height="2" fill="#d4d4d4" />
<rect x="1870.7" y="689" width="2" height="5" fill="#d4d4d4" />
<rect x="1155" y="163.5" width="7" height="2" fill="#d4d4d4" />
</g>
<text x="1161.5" y="711" font-size="16" fill="#e0e0e0" text-anchor="middle" >0</text>
<text x="1154" y="694.5" font-size="16" fill="#e0e0e0" text-anchor="end" >0</text>
<text x="1250.25" y="711" font-size="16" fill="#e0e0e0" text-anchor="middle" >0,1</text>
<text x="1154" y="629" font-size="16" fill="#e0e0e0" text-anchor="end" >0,1</text>
<text x="1339" y="711" font-size="16" fill="#e0e0e0" text-anchor="middle" >0,2</text>
<text x="1154" y="563.5" font-size="16" fill="#e0e0e0" text-anchor="end" >0,2</text>
<text x="1427.75" y="711" font-size="16" fill="#e0e0e0" text-anchor="middle" >0,3</text>
<text x="1154" y="498" font-size="16" fill="#e0e0e0" text-anchor="end" >0,3</text>
<text x="1516.5" y="711" font-size="16" fill="#e0e0e0" text-anchor="middle" >0,4</text>
<text x="1154" y="432.5" font-size="16" fill="#e0e0e0" text-anchor="end" >0,4</text>
<text x="1605.25" y="711" font-size="16" fill="#e0e0e0" text-anchor="middle" >0,5</text>
<text x="1154" y="367" font-size="16" fill="#e0e0e0" text-anchor="end" >0,5</text>
<text x="1694" y="711" font-size="16" fill="#e0e0e0" text-anchor="middle" >0,6</text>
<text x="1154" y="301.5" font-size="16" fill="#e0e0e0" text-anchor="end" >0,6</text>
<text x="1782.75" y="711" font-size="16" fill="#e0e0e0" text-anchor="middle" >0,7</text>
<text x="1154" y="236" font-size="16" fill="#e0e0e0" text-anchor="end" >0,7</text>
<text x="1871.5" y="711" font-size="16" fill="#e0e0e0" text-anchor="middle" >0,8</text>
<text x="1154" y="170.5" font-size="16" fill="#e0e0e0" text-anchor="end" >0,8</text>
<rect x="1693.5" y="137" width="214.5" height="203.5" fill="#454545" shape-rendering="crispEdges"/>
<g clip-path="url(#cpi)"><g filter="url(#vb2)" shape-rendering="crispEdges"><rect x="1697" y="122" width="211" height="8.5" fill="url(#p0)"/><rect x="1697" y="130" width="211" height="8.5" fill="url(#p1)"/><rect x="1697" y="138" width="211" height="8.5" fill="url(#p2)"/><rect x="1697" y="146" width="211" height="8.5" fill="url(#p3)"/><rect x="1697" y="154" width="211" height="8.5" fill="url(#p4)"/><rect x="1697" y="162" width="211" height="8.5" fill="url(#p5)"/><rect x="1697" y="170" width="211" height="8.5" fill="url(#p6)"/><rect x="1697" y="178" width="211" height="8.5" fill="url(#p7)"/><rect x="1697" y="186" width="211" height="8.5" fill="url(#p8)"/><rect x="1697" y="194" width="211" height="8.5" fill="url(#p9)"/><rect x="1697" y="202" width="211" height="8.5" fill="url(#p10)"/><rect x="1697" y="210" width="211" height="8.5" fill="url(#p11)"/><rect x="1697" y="218" width="211" height="8.5" fill="url(#p12)"/><rect x="1697" y="226" width="211" height="8.5" fill="url(#p13)"/><rect x="1697" y="234" width="211" height="8.5" fill="url(#p14)"/><rect x="1697" y="242" width="211" height="8.5" fill="url(#p15)"/><rect x="1697" y="250" width="211" height="8.5" fill="url(#p16)"/><rect x="1697" y="258" width="211" height="8.5" fill="url(#p17)"/><rect x="1697" y="266" width="211" height="8.5" fill="url(#p18)"/><rect x="1697" y="274" width="211" height="8.5" fill="url(#p19)"/><rect x="1697" y="282" width="211" height="8.5" fill="url(#p20)"/><rect x="1697" y="290" width="211" height="8.5" fill="url(#p21)"/><rect x="1697" y="298" width="211" height="8.5" fill="url(#p22)"/><rect x="1697" y="306" width="211" height="8.5" fill="url(#p23)"/><rect x="1697" y="314" width="211" height="8.5" fill="url(#p24)"/><rect x="1697" y="322" width="211" height="8.5" fill="url(#p25)"/><rect x="1697" y="330" width="211" height="8.5" fill="url(#p26)"/><rect x="1697" y="338" width="211" height="8.5" fill="url(#p27)"/><rect x="1697" y="346" width="211" height="8.5" fill="url(#p28)"/></g>
<g clip-path="url(#cpj)"><g filter="url(#vb2)" shape-rendering="crispEdges"><rect x="1695" y="146" width="15" height="8.5" fill="url(#q0)"/><rect x="1695" y="154" width="26" height="8.5" fill="url(#q1)"/><rect x="1695" y="162" width="37" height="8.5" fill="url(#q2)"/><rect x="1695" y="170" width="47" height="8.5" fill="url(#q3)"/><rect x="1695" y="178" width="58" height="8.5" fill="url(#q4)"/><rect x="1695" y="186" width="69" height="8.5" fill="url(#q5)"/><rect x="1695" y="194" width="79" height="8.5" fill="url(#q6)"/><rect x="1695" y="202" width="90" height="8.5" fill="url(#q7)"/><rect x="1695" y="210" width="101" height="8.5" fill="url(#q8)"/><rect x="1695" y="218" width="111" height="8.5" fill="url(#q9)"/><rect x="1695" y="226" width="122" height="8.5" fill="url(#q10)"/><rect x="1695" y="234" width="132" height="8.5" fill="url(#q11)"/><rect x="1695" y="242" width="143" height="8.5" fill="url(#q12)"/><rect x="1695" y="250" width="154" height="8.5" fill="url(#q13)"/><rect x="1695" y="258" width="164" height="8.5" fill="url(#q14)"/><rect x="1695" y="266" width="175" height="8.5" fill="url(#q15)"/><rect x="1695" y="274" width="186" height="8.5" fill="url(#q16)"/><rect x="1695" y="282" width="196" height="8.5" fill="url(#q17)"/><rect x="1695" y="290" width="207" height="8.5" fill="url(#q18)"/><rect x="1695" y="298" width="215" height="8.5" fill="url(#q19)"/><rect x="1695" y="306" width="215" height="8.5" fill="url(#q20)"/><rect x="1695" y="314" width="215" height="8.5" fill="url(#q21)"/><rect x="1695" y="322" width="215" height="8.5" fill="url(#q22)"/><rect x="1695" y="330" width="215" height="8.5" fill="url(#q23)"/><rect x="1695" y="338" width="215" height="8.5" fill="url(#q24)"/><rect x="1695" y="346" width="215" height="8.5" fill="url(#q25)"/></g></g>
<circle cx="1716.8" cy="166.2" r="5.6" fill="#c8b400" stroke="#000" stroke-width="1.3"/>
<circle cx="1695.5" cy="292" r="5.6" fill="#b9b446" stroke="#000" stroke-width="1.3"/>
<rect x="1792.8" y="228.3" width="17.4" height="17.4" fill="none" stroke="#fff" stroke-width="1.6"/>
</g>
<rect x="1696.5" y="137.5" width="211" height="199.5" fill="none" stroke="#9a9a9a" stroke-width="1"/>
<rect x="1419.4" y="284.9" width="16.4" height="16.4" fill="none" stroke="#fff" stroke-width="1.6"/>
<rect x="1422.3" y="323.3" width="16.4" height="16.4" fill="none" stroke="#fff" stroke-width="1.6"/>
<rect x="1424.4" y="357.3" width="16.4" height="16.4" fill="none" stroke="#fff" stroke-width="1.6"/>
<rect x="1425.4" y="392.8" width="16.4" height="16.4" fill="none" stroke="#fff" stroke-width="1.6"/>
<rect x="1428.8" y="426.8" width="16.4" height="16.4" fill="none" stroke="#fff" stroke-width="1.6"/>
<rect x="1525.8" y="346.6" width="16.4" height="16.4" fill="none" stroke="#fff" stroke-width="1.6"/>
<rect x="1505.2" y="371.8" width="16.4" height="16.4" fill="none" stroke="#fff" stroke-width="1.6"/>
<rect x="1488.2" y="393.0" width="16.4" height="16.4" fill="none" stroke="#fff" stroke-width="1.6"/>
<rect x="1469.3" y="414.7" width="16.4" height="16.4" fill="none" stroke="#fff" stroke-width="1.6"/>
<rect x="1449.2" y="438.8" width="16.4" height="16.4" fill="none" stroke="#fff" stroke-width="1.6"/>
<rect x="1486.8" y="463.0" width="16.4" height="16.4" fill="none" stroke="#fff" stroke-width="1.6"/>
<rect x="1547.7" y="463.0" width="16.4" height="16.4" fill="none" stroke="#fff" stroke-width="1.6"/>
<rect x="1599.1" y="463.0" width="16.4" height="16.4" fill="none" stroke="#fff" stroke-width="1.6"/>
<rect x="1657.0" y="463.0" width="16.4" height="16.4" fill="none" stroke="#fff" stroke-width="1.6"/>
<rect x="1721.3" y="463.0" width="16.4" height="16.4" fill="none" stroke="#fff" stroke-width="1.6"/>
<rect x="1351.3" y="463.0" width="16.4" height="16.4" fill="none" stroke="#fff" stroke-width="1.6"/>
<rect x="1367.9" y="463.0" width="16.4" height="16.4" fill="none" stroke="#fff" stroke-width="1.6"/>
<rect x="1384.3" y="463.0" width="16.4" height="16.4" fill="none" stroke="#fff" stroke-width="1.6"/>
<rect x="1399.0" y="463.0" width="16.4" height="16.4" fill="none" stroke="#fff" stroke-width="1.6"/>
<rect x="1414.8" y="463.0" width="16.4" height="16.4" fill="none" stroke="#fff" stroke-width="1.6"/>
<rect x="1286.4" y="638.9" width="16.4" height="16.4" fill="none" stroke="#fff" stroke-width="1.6"/>
<rect x="1317.2" y="600.3" width="16.4" height="16.4" fill="none" stroke="#fff" stroke-width="1.6"/>
<rect x="1345.8" y="566.2" width="16.4" height="16.4" fill="none" stroke="#fff" stroke-width="1.6"/>
<rect x="1372.5" y="533.9" width="16.4" height="16.4" fill="none" stroke="#fff" stroke-width="1.6"/>
<rect x="1402.3" y="497.8" width="16.4" height="16.4" fill="none" stroke="#fff" stroke-width="1.6"/>
<rect x="1438.4" y="576.8" width="16.4" height="16.4" fill="none" stroke="#fff" stroke-width="1.6"/>
<rect x="1436.3" y="552.8" width="16.4" height="16.4" fill="none" stroke="#fff" stroke-width="1.6"/>
<rect x="1435.2" y="531.0" width="16.4" height="16.4" fill="none" stroke="#fff" stroke-width="1.6"/>
<rect x="1433.3" y="510.0" width="16.4" height="16.4" fill="none" stroke="#fff" stroke-width="1.6"/>
<rect x="1432.3" y="486.2" width="16.4" height="16.4" fill="none" stroke="#fff" stroke-width="1.6"/>
<rect x="1430.3" y="463.0" width="16.4" height="16.4" fill="none" stroke="#000" stroke-width="1.6"/>
<circle cx="1452.5" cy="301.9" r="5.6" fill="#00aa00" stroke="#000" stroke-width="1.3"/>
<circle cx="1449.4" cy="320" r="5.6" fill="#3cb046" stroke="#000" stroke-width="1.3"/>
<circle cx="1446.5" cy="337.2" r="5.6" fill="#64b964" stroke="#000" stroke-width="1.3"/>
<circle cx="1443.3" cy="374.4" r="5.6" fill="#78b97d" stroke="#000" stroke-width="1.3"/>
<circle cx="1440" cy="420" r="5.6" fill="#96b496" stroke="#000" stroke-width="1.3"/>
<circle cx="1515.5" cy="342.9" r="5.6" fill="#c8b400" stroke="#000" stroke-width="1.3"/>
<circle cx="1510.5" cy="363.9" r="5.6" fill="#b9b446" stroke="#000" stroke-width="1.3"/>
<circle cx="1495" cy="385.9" r="5.6" fill="#b9b464" stroke="#000" stroke-width="1.3"/>
<circle cx="1479.4" cy="406.9" r="5.6" fill="#b9b478" stroke="#000" stroke-width="1.3"/>
<circle cx="1455.7" cy="438" r="5.6" fill="#b9b996" stroke="#000" stroke-width="1.3"/>
<circle cx="1521.4" cy="460" r="5.6" fill="#be8787" stroke="#000" stroke-width="1.3"/>
<circle cx="1587.6" cy="461.9" r="5.6" fill="#be6464" stroke="#000" stroke-width="1.3"/>
<circle cx="1630.8" cy="460" r="5.6" fill="#c34b50" stroke="#000" stroke-width="1.3"/>
<circle cx="1668.4" cy="460" r="5.6" fill="#c83232" stroke="#000" stroke-width="1.3"/>
<circle cx="1686" cy="460" r="5.6" fill="#cd0000" stroke="#000" stroke-width="1.3"/>
<circle cx="1367.7" cy="465.9" r="5.6" fill="#00b4be" stroke="#000" stroke-width="1.3"/>
<circle cx="1376.1" cy="466.3" r="5.6" fill="#3cafaf" stroke="#000" stroke-width="1.3"/>
<circle cx="1388.5" cy="464.9" r="5.6" fill="#64b4b4" stroke="#000" stroke-width="1.3"/>
<circle cx="1405.7" cy="462.8" r="5.6" fill="#82b4b4" stroke="#000" stroke-width="1.3"/>
<circle cx="1423.1" cy="462.8" r="5.6" fill="#96b4b4" stroke="#000" stroke-width="1.3"/>
<circle cx="1299" cy="603" r="5.6" fill="#0000c8" stroke="#000" stroke-width="1.3"/>
<circle cx="1316.4" cy="590.8" r="5.6" fill="#463cbe" stroke="#000" stroke-width="1.3"/>
<circle cx="1330.5" cy="575.7" r="5.6" fill="#6464c8" stroke="#000" stroke-width="1.3"/>
<circle cx="1358.4" cy="547.8" r="5.6" fill="#7d7db9" stroke="#000" stroke-width="1.3"/>
<circle cx="1393" cy="511.9" r="5.6" fill="#9696b9" stroke="#000" stroke-width="1.3"/>
<circle cx="1423" cy="557" r="5.6" fill="#c800be" stroke="#000" stroke-width="1.3"/>
<circle cx="1424.5" cy="547.8" r="5.6" fill="#c33cb4" stroke="#000" stroke-width="1.3"/>
<circle cx="1424.5" cy="535.8" r="5.6" fill="#be64b9" stroke="#000" stroke-width="1.3"/>
<circle cx="1426" cy="520.9" r="5.6" fill="#be7db9" stroke="#000" stroke-width="1.3"/>
<circle cx="1430.4" cy="495.9" r="5.6" fill="#b996b4" stroke="#000" stroke-width="1.3"/>
<circle cx="1435.5" cy="468" r="5.6" fill="#ffffff" stroke="#000" stroke-width="1.3"/>
<rect x="1348" y="750" width="336" height="204" fill="#000" shape-rendering="crispEdges"/>
<rect x="0" y="976.5" width="1920" height="2" fill="#222" shape-rendering="crispEdges"/>
<rect x="0" y="978" width="1920" height="62" fill="url(#g58)" shape-rendering="crispEdges"/>
<rect x="1.5" y="978.5" width="44.5" height="60" rx="4" fill="url(#g59)"/>
<circle cx="23.5" cy="986.8" r="7.2" fill="url(#g60)"/>
<path d="M19.5 988.8h8l-4-4.6z" fill="#2a2a2a"/>
<rect x="6" y="1004" width="35.5" height="30.5" rx="3" fill="#ffff00" stroke="#b4b496" stroke-width="1"/>
<rect x="52" y="978.5" width="150" height="60" rx="4" fill="url(#g59)"/>
<rect x="57.5" y="983.6" width="140" height="36" rx="3.5" fill="#bfbfa3" stroke="#8c8c78" stroke-width="1.2"/>
<text x="127" y="1033.5" font-size="10.5" fill="#444" text-anchor="middle" font-weight="bold" >20%</text>
<rect x="204" y="978.5" width="150" height="60" rx="4" fill="url(#g59)"/>
<rect x="209.5" y="983.6" width="140" height="36" rx="3.5" fill="#c0c087" stroke="#8c8c78" stroke-width="1.2"/>
<text x="279" y="1033.5" font-size="10.5" fill="#444" text-anchor="middle" font-weight="bold" >40%</text>
<rect x="356" y="978.5" width="150" height="60" rx="4" fill="url(#g59)"/>
<rect x="361.5" y="983.6" width="140" height="36" rx="3.5" fill="#c1bf6c" stroke="#8c8c78" stroke-width="1.2"/>
<text x="431" y="1033.5" font-size="10.5" fill="#444" text-anchor="middle" font-weight="bold" >60%</text>
<rect x="508" y="978.5" width="150" height="60" rx="4" fill="url(#g59)"/>
<rect x="513.5" y="983.6" width="140" height="36" rx="3.5" fill="#c1be4c" stroke="#8c8c78" stroke-width="1.2"/>
<text x="583" y="1033.5" font-size="10.5" fill="#444" text-anchor="middle" font-weight="bold" >80%</text>
<rect x="660" y="978.5" width="150" height="60" rx="4" fill="url(#g61)" stroke="#5a5a5a" stroke-width="1"/>
<rect x="665.5" y="983.6" width="140" height="36" rx="3.5" fill="#c4c000" stroke="#6e6e3c" stroke-width="1.2"/>
<text x="735" y="1033.5" font-size="10.5" fill="#fff" text-anchor="middle" font-weight="bold" >100%</text>
<rect x="1597" y="978.5" width="47.5" height="60" rx="4" fill="url(#g62)"/>
<path d="M1597 996.3h47.5" stroke="#4a4a4a" stroke-width="1.2"/>
<circle cx="1621.5" cy="987.2" r="7.4" fill="url(#g60)"/>
<path d="M1617.3 989.2h8.4l-4.2-4.8z" fill="#2a2a2a"/>
<rect x="1604.8" y="1002.4" width="32.4" height="32.2" rx="4.5" fill="url(#g64)" stroke="#e8e8e8" stroke-width="1"/>
<rect x="1606.3" y="1003.9" width="29.4" height="29.2" rx="3.5" fill="none" stroke="#1c1c1c" stroke-width="1.8"/>
<rect x="1614" y="1011" width="14" height="13.8" fill="#000" shape-rendering="crispEdges"/>
<rect x="1646" y="978.5" width="45.8" height="29.3" rx="3" fill="url(#g62)"/>
<circle cx="1668.9" cy="992.8" r="10" fill="url(#g65)"/>
<rect x="1664.9" y="988.8" width="8" height="8" fill="#333" />
<rect x="1693" y="978.5" width="44" height="29.3" rx="3" fill="url(#g62)"/>
<circle cx="1715" cy="992.8" r="10" fill="url(#g65)"/>
<path d="M1711.8 987.6l8 5.2l-8 5.2z" fill="#333"/>
<rect x="1738" y="978.5" width="44" height="29.3" rx="3" fill="url(#g62)"/>
<circle cx="1760" cy="992.8" r="10" fill="url(#g65)"/>
<text x="1760" y="996.3" font-size="10" fill="#333" text-anchor="middle" font-weight="bold" >[··]</text>
<rect x="1783" y="978.5" width="44" height="29.3" rx="3" fill="url(#g62)"/>
<circle cx="1805" cy="992.8" r="10" fill="url(#g65)"/>
<text x="1805" y="997.8" font-size="15" fill="#333" text-anchor="middle" font-weight="bold" >∞</text>
<rect x="1828" y="978.5" width="44" height="29.3" rx="3" fill="url(#g63)"/>
<circle cx="1850" cy="992.8" r="10" fill="url(#g66)"/>
<path d="M1845 991.6a5.2 5.2 0 0 1 9.4-1.6M1855 994a5.2 5.2 0 0 1-9.4 1.6" stroke="#1e1e1e" stroke-width="2.2" fill="none"/><path d="M1855.8 987.2v4h-4zM1844.2 998.4v-4h4z" fill="#1e1e1e"/>
<rect x="1873" y="978.5" width="45.5" height="29.3" rx="3" fill="url(#g63)"/>
<circle cx="1895.75" cy="992.8" r="10" fill="url(#g66)"/>
<rect x="1646" y="1009" width="136.2" height="29.5" rx="4" fill="url(#g62)"/>
<rect x="1783" y="1009" width="135.5" height="29.5" rx="4" fill="url(#g62)"/>
<circle cx="1676.6" cy="1023.8" r="10" fill="url(#g65)"/>
<circle cx="1890" cy="1023.8" r="10" fill="url(#g65)"/>
<path d="M1675.6 1019.4l-3.6 4.4l3.6 4.4M1680.6 1019.4l-3.6 4.4l3.6 4.4" stroke="#333" stroke-width="1.4" fill="none"/>
<path d="M1886 1019.4l3.6 4.4l-3.6 4.4M1891 1019.4l3.6 4.4l-3.6 4.4" stroke="#333" stroke-width="1.4" fill="none"/>
<text x="1728.8" y="1031.8" font-size="22" fill="#333" text-anchor="middle" textLength="51" lengthAdjust="spacingAndGlyphs" stroke="#333" stroke-width="0.5">Back</text>
<text x="1836.2" y="1031.8" font-size="22" fill="#333" text-anchor="middle" textLength="52" lengthAdjust="spacingAndGlyphs" stroke="#333" stroke-width="0.5">Next</text>
<rect x="0" y="1040" width="1920" height="8" fill="#2a6e9c" shape-rendering="crispEdges"/>
<path d="M1130 1040h790v8h-757z" fill="url(#g67)"/>
<path d="M1290 1040h120l30 8h-100z" fill="#2a8fb4" opacity="0.6"/>
<g shape-rendering="crispEdges">
<rect x="238" y="1041" width="58" height="7" fill="#7fa5c0" />
<rect x="238" y="1041" width="58" height="1" fill="#d8e4ee" />
<rect x="238" y="1041" width="1" height="7" fill="#d8e4ee" />
<rect x="295" y="1041" width="1" height="7" fill="#d8e4ee" />
</g>
<path d="M28 1048v-1.6l10-1v2.6z" fill="#e8f0f6"/>
<path d="M68 1048v-1.6h13v1.6z" fill="#e8c878"/>
<path d="M151 1048c1.5-2 4-3.4 7-3.6l-1.5 3.6z" fill="#f0a850"/>
<path d="M196 1048a10 3.4 0 0 1 18 0z" fill="#3aa0e8"/>
<path d="M256 1048c1-2.6 3.4-4.4 7-4.6c1.6 1 2.4 2.6 2.4 4.6z" fill="#28100c"/>
</svg>
</body></html>
